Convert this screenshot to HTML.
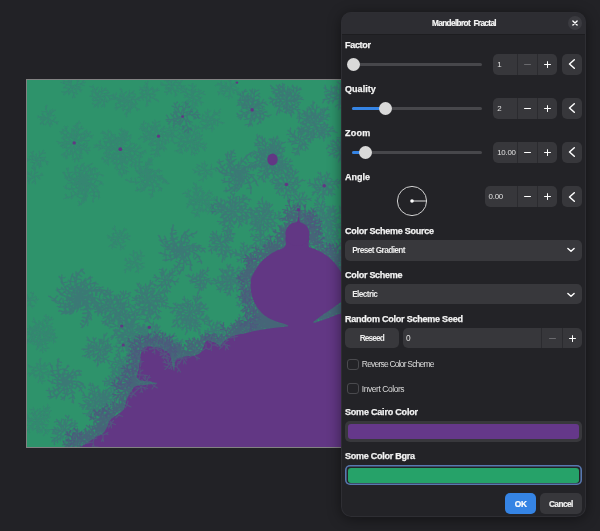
<!DOCTYPE html>
<html><head><meta charset="utf-8">
<style>
*{box-sizing:border-box;margin:0;padding:0}
html,body{width:600px;height:531px;overflow:hidden;background:#222226;font-family:"Liberation Sans",sans-serif;}
#wrap{position:absolute;left:0;top:0;width:600px;height:531px;filter:blur(0.35px);}
#frac{position:absolute;left:26px;top:79px;width:369px;height:369px;background:#828282;}
#frac svg{position:absolute;left:1px;top:1px;}
#dlg{will-change:transform;position:absolute;left:341px;top:12px;width:245.4px;height:505px;background:#232327;border-radius:10px;box-shadow:0 2px 14px rgba(0,0,0,.45);overflow:hidden;}
.t{position:absolute;white-space:nowrap;}
.lbl{position:absolute;left:4px;color:#f3f3f3;font-weight:bold;white-space:nowrap;-webkit-text-stroke:0.25px #f3f3f3;}
</style></head><body><div id="wrap">
<div id="frac">
<svg width="367" height="367" viewBox="27 80 367 367">
<defs><clipPath id="fc"><rect x="27" y="80" width="367" height="367"/></clipPath>
<filter id="sb" x="-5%" y="-5%" width="110%" height="110%"><feGaussianBlur stdDeviation="0.6"/></filter>
</defs>
<rect x="27" y="80" width="367" height="367" fill="#2e936b"/>
<g clip-path="url(#fc)" fill="none" stroke-linecap="round" stroke-linejoin="round" filter="url(#sb)">
<path d="M68 83l2 -2M69 86l-0.5 -3 -1 -2M67 85l-3.5 3M64 83l-1 -4M72 87l-2.5 -1.5 -3 -1 -2.5 -1 -3 -1M71 84l0.5 -4.5M69 82l-4 -0.5M68 79l1.5 -3.5M72 87l-1 -2.5 -1.5 -3 -1.5 -2.5 -1.5 -2.5M78 87l1 2M75 86l2.5 0.5 3 1M77 82l2 -1M77 85l0.5 -3 0 -2.5M80 84l4 1.5M82 83l2 -3.5M72 87l2.5 -1.5 2.5 -1 2.5 -0.5 3 -1 2.5 -0.5M74 88l2.5 3.5M77 89l3 -3M79 89l2 3M72 87l2.5 1 2.5 0.5 2.5 1 2.5 0.5M71 92l-2.5 -0.5M72 90l-1.5 1.5 -1.5 2M73 92l4.5 2M74 95l-1.5 3M72 87l0.5 2.5 0.5 3 1 2.5 1 2.5M70 89l-4.5 -1.5M68 90l1 4.5M66 92l-4 0M72 87l-2 1.5 -2 2 -2 2 -2 2M105 98l-0.5 2.5M103 96l2 2 2 2.5M107 93l2 0M105 96l2 -2.5 1.5 -2.5M110 98l-1 2.5M108 96l1.5 1.5 1.5 2.5M111 96l3 -2M100 97l2.5 -0.5 3 -1 2.5 0 3 0 2.5 0.5M101 102l-2.5 0.5M102 99l-1 2.5 -1 2.5M103 101l5 1M104 104l-2.5 2.5M100 97l2 2 1.5 2.5 1 2.5 0 3M97 100l-2 -2M99 100l-2.5 0.5 -3 0M98 103l0 4.5M96 105l-3.5 -1.5M100 97l-0.5 3 -1.5 2.5 -2 2.5 -2 2M96 95l2 -1.5M98 97l-1.5 -2 -1 -2M95 97l-2.5 2.5M93 97l-1 -3.5M100 97l-2.5 0.5 -2.5 0 -2.5 -1 -2.5 -0.5M99 92l2 -0.5M98 95l0.5 -2.5 1 -2.5M93 92l0 -2M96 93l-2.5 -0.5 -2.5 -1.5M95 91l3 -4M94 88l-4 -1.5M100 97l-2 -2 -1.5 -2 -1.5 -2.5 -1.5 -2.5 -0.5 -2.5M101 94l4.5 -0.5M102 92l-0.5 -4.5M104 90l4 0.5M100 97l1 -2.5 1 -2.5 2 -2 2 -2M131 105l-2 2.5M130 102l1 3.5 0 3M132 104l5.5 0M134 106l-3 3M136 108l3.5 1.5M128 101l2 1 2.5 1.5 2 2 1.5 2.5 1.5 2.5M126 106l-2.5 -1.5M128 104l-2 2 -2.5 1.5M130 109l-1.5 3M129 107l1 2.5 0.5 3M128 110l-5 -1M127 112l-0.5 5M128 101l0.5 3 0 2.5 -0.5 3 -1.5 2.5 -1.5 2.5M123 102l-0.5 -3.5M126 103l-3.5 -1 -3 -2M124 108l-2.5 1M124 105l0 2.5 -1 3.5M122 106l-3.5 -3.5M119 107l-3 2.5M117 108l-1.5 -4M128 101l-2 2 -2 1.5 -2 1.5 -2.5 1 -2.5 0.5 -2.5 0.5M123 98l1 -3M125 101l-2.5 -3 -1.5 -3M120 102l-2.5 -2M122 101l-2.5 1.5 -3 1M120 96l2 -0.5M120 99l0 -2.5 0.5 -3M115 99l-2 -2M118 98l-3 1 -3 0M115 97l1.5 -4M128 101l-3 0 -2.5 -0.5 -2.5 -1 -2.5 -1 -2.5 -1.5 -2 -1.5M127 97l2.5 -0.5M125 99l2 -2.5 2 -2M124 97l-4.5 -1.5M123 95l3.5 -3M122 92l-2 -3.5M128 101l-2.5 -2 -1.5 -2 -1 -2.5 -1 -2.5 -0.5 -2.5M131 97l1.5 2M128 98l2.5 -1 3 -0.5M129 95l0.5 -4.5M131 93l4.5 1.5M128 101l0 -3 1.5 -3 2 -2 2.5 -2M132 102l0 3.5M130 100l2 2 1.5 2.5M132 99l3.5 -3M135 99l1 4.5M137 99l3.5 -1M128 101l2 -1 2.5 -0.5 2.5 0 2.5 0 2.5 1M145 94l-5 -0.5M142 95l1 5M140 97l-3 1.5M148 94l-3 0 -2.5 1.5 -2.5 2 -2 2M146 90l2 -2.5M146 92l0.5 -2.5 -0.5 -2.5M144 90l-2.5 2.5M142 90l-2 -3M148 94l-1.5 -2 -2 -1.5 -2.5 -1 -2.5 0M151 89l3 0.5M148 91l2.5 -1.5 2 -2M145 88l-1 -2.5M148 88l-2.5 -0.5 -2.5 0M147 85l1 -4M148 94l0.5 -3 -0.5 -3 -1 -2.5 -1.5 -3M151 94l4.5 1M154 93l-1.5 -4.5M156 91l3.5 -1M148 94l3 0 2.5 -1.5 2 -1.5 2 -2.5M150 99l-2.5 2.5M150 96l0 3 0.5 3M152 98l3.5 -3M155 99l3.5 2.5M148 94l2 2.5 2.5 1.5 2.5 1 3 1M144 97l-2.5 -0.5M147 97l-3 0 -2.5 1M146 100l5 2M147 103l-1 3.5M148 94l-1.5 2.5 0 3 0.5 3 1 3M168 83l0 -3M170 85l-2 -2.5 -1.5 -1.5M167 85l-1.5 3.5M164 85l-3 -2.5M172 85l-2.5 -0.5 -2.5 0.5 -3 0 -3 0M172 80l3.5 0M171 83l1.5 -3 1 -3M167 80l-2 -2M170 80l-3 0 -2.5 0.5M169 78l1 -4M167 76l-3.5 -0.5M172 85l-1 -2.5 -1 -2.5 -1.5 -2 -1.5 -2.5 -1 -2.5M178 83l2 2M174 83l3.5 -0.5 3 -0.5M175 78l2 -2M176 81l-0.5 -3 -1 -2.5M181 79l1 1.5M178 79l2.5 0 3 0M180 77l-1.5 -4.5M172 85l2.5 -2 1.5 -2 2 -2 2 -2.5 1.5 -2.5M177 87l0 3M176 85l1.5 2.5 2 1.5M179 86l2 -4.5M182 86l2 3M172 85l3.5 0.5 3 0 3.5 0.5 3 0M171 90l-2 -0.5M173 88l-1.5 1.5 -1.5 2M174 90l4.5 1.5M176 93l-1 3.5M172 85l1 2.5 1 3 1.5 2.5 1.5 2M169 88l-2.5 -1M171 87l-2.5 1 -2 1.5M169 90l2.5 3.5M168 92l-3.5 0M172 85l-1 2.5 -1.5 2 -1.5 2.5 -1.5 2.5M198 97l1.5 2M196 96l2.5 1 2.5 1M199 92l2 -1.5M199 95l0 -3 -0.5 -2.5M201 93l4 1.5M193 97l3 -1 2.5 -1.5 3 -1.5 2.5 -1.5M196 101l-1.5 3M195 99l1 2.5 1 2.5M198 100l3.5 -2.5M200 101l1.5 4M193 97l2 2 2.5 1.5 3 1 2.5 1M190 102l-3 -1.5M193 100l-3 1.5 -3 2M195 104l0 3.5M193 102l2.5 2 2.5 2M190 107l-2 -1M192 105l-2 2 -2 2M193 108l3.5 1.5M192 110l-2 3.5M193 97l0 2.5 -0.5 3 0 2.5 0 2.5 0 2.5 0 3M188 97l-1 -1.5M190 98l-2 -1 -2.5 -0.5M188 100l0.5 5M186 102l-4 0.5M193 97l-2.5 1.5 -2.5 1.5 -2.5 2 -2 2.5M191 92l3 -1M191 96l0.5 -3.5 0 -3M186 96l-2 -1M189 94l-2.5 2 -2 1.5M186 90l1 -2M187 93l-1.5 -2.5 -1 -2.5M184 92l-3.5 1M182 91l-1 -5M193 97l-2 -1.5 -2.5 -1 -2 -1.5 -2 -1.5 -2.5 -1 -2 -1.5M195 92l3 -0.5M193 94l1.5 -2.5 1.5 -2.5M193 92l-5 -2.5M192 89l4 -3.5M192 86l-3.5 -1M193 97l0 -2.5 -0.5 -3 0 -2.5 0 -3 0 -2.5M69 140l0.5 -3.5M72 142l-2.5 -2.5 -3 -2M67 144l-3 0M69 142l-2 2 -1 2.5M64 140l-0.5 -3M66 142l-2 -2.5 -2.5 -1.5M63 144l-2.5 2M64 142l-1.5 2.5 -0.5 2.5M61 143l-4 -1.5M74 143l-2 -1 -3 -0.5 -2.5 0 -3 0.5 -2.5 0.5 -2.5 1M75 138l3 -1.5M76 135l-1.5 -2M74 140l1 -2 1 -2.5 1 -2.5M69 138l-3 -2.5M72 138l-3.5 -0.5 -3.5 0.5M72 132l2.5 -1.5M71 135l1 -3 0 -3.5M66 135l-3 -1.5M69 133l-3 1.5 -2.5 2M66 129l1.5 -2.5M67 132l-1 -3 -1.5 -2.5M63 132l-3 0M64 130l-1.5 2 -1.5 2M74 143l-0.5 -3 -1 -2.5 -1.5 -2 -2 -2 -2 -2 -2.5 -1 -2.5 -1.5M78 140l3.5 1.5M81 140l1.5 -3M76 140l2.5 0.5 2.5 -0.5 2.5 -1M75 137l-1 -4.5M73 135l-2.5 1.5M77 138l-2.5 -1.5 -2 -1.5 -2 -1M81 134l3.5 1M77 136l3.5 -1.5 3 -2M75 131l1 -3M78 133l-2.5 -2 -3 -2M80 129l3.5 -0.5M78 131l2.5 -2.5 1.5 -2.5M76 127l-1 -2M78 128l-2.5 -1 -2.5 -1M78 123l2.5 0M77 126l1.5 -2.5 0.5 -2.5M74 143l1.5 -2.5 1 -2.5 1 -2 0.5 -2.5 0 -2.5 0 -2.5 -0.5 -2.5 -1 -2.5M79 144l0.5 4.5M82 146l2.5 -2.5M77 142l2.5 2 2.5 1.5 2.5 1.5M81 139l3.5 -2M81 136l-2.5 -2M80 141l0.5 -2.5 0.5 -2.5 0 -2.5M86 141l1.5 2.5M83 140l3 1 3.5 -0.5M84 135l3 -2M85 138l-0.5 -3 -0.5 -3M90 136l2 2M87 136l3 0 3 -0.5M87 132l-0.5 -2M89 134l-2 -1.5 -2.5 -1.5M74 143l3.5 -1 2.5 -0.5 2.5 -1.5 2.5 -1.5 2 -2 1.5 -2.5 2 -2M78 147l-1.5 3.5M79 149l3 0M76 144l1.5 2.5 1 2.5 1.5 2.5M82 145l3 1.5M78 146l4 -1 4 -1M81 151l-1 3M80 148l1 2.5 1 3M85 147l2.5 1M83 149l2 -2 2.5 -2M85 150l3 3.5M88 150l2 -3M74 143l2.5 1.5 2 1.5 2 1.5 2 1.5 2.5 1 2.5 0.5 2.5 0M73 148l-4.5 0.5M71 150l2 2.5M74 146l-1 2 -1.5 2 -1.5 3M78 149l2 3M75 148l3 1.5 4 0.5M73 154l-2.5 0M75 151l-1.5 3 -1 3.5M79 155l1.5 3M76 154l3 1 3 1M75 159l-2.5 0.5M77 157l-1.5 2 -1 3M78 159l4.5 -1M74 143l0.5 2.5 0 3 0.5 2.5 1 3 1 2.5 1 2.5 1 2.5M70 144l-3 -2.5M67 144l-1 2.5M73 144l-3 0 -3 0.5 -2.5 0M71 150l-1 2.5M71 146l0.5 3.5 1.5 3M66 148l-2 -2.5M69 148l-3.5 -0.5 -3 0.5M68 153l-1 2.5M67 150l1 3 1.5 2M66 152l-4.5 3M66 156l0 3M64 154l2 2.5 1.5 1.5M74 143l-1.5 1.5 -2 1.5 -1.5 2 -2 2 -1.5 2.5 -1 2 -1 2.5M123 144l4 0.5M125 142l-0.5 -2.5M121 146l1.5 -1.5 2 -2 2.5 -2M120 141l0.5 -3M119 139l-3 -1M121 144l-1 -2.5 -1.5 -2.5 -1 -2M125 139l2 1.5M122 141l2.5 -2 3 -2M121 136l1 -3M122 138l-1.5 -2.5 -1.5 -2.5M125 134l2.5 0M123 135l2 -1.5 2 -2M122 131l-0.5 -2.5M124 133l-2.5 -2 -2 -1.5M120 149l0.5 -2.5 1 -3 0 -2.5 1 -3 0.5 -2.5 0.5 -2.5 0.5 -3M124 147l2.5 3M127 148l2.5 -1.5M122 147l2.5 0.5 2.5 0.5 2.5 1M122 141l1.5 -3.5M123 144l-1.5 -3 -1.5 -3.5M127 140l3 1M124 142l3.5 -2 3 -1.5M124 136l2 -2M125 139l-0.5 -3 -1.5 -2.5M129 136l2 1.5M126 137l3 -1 2.5 -1M127 134l-2.5 -4M120 149l1.5 -2 1.5 -2.5 1.5 -2.5 1 -3 1 -2.5 0.5 -2.5 1 -3M123 152l-2.5 3M124 154l3.5 3M125 157l-1.5 3M123 150l0.5 2 0.5 2.5 0.5 2.5 1 2M128 148l4 0M130 146l0.5 -3.5M125 150l2.5 -2 2.5 -2.5 2.5 -2M130 153l-1 4M131 155l3 0.5M128 150l1.5 3 1.5 2.5 1.5 2.5M133 148l3 1M135 146l-1 -2.5M131 150l1.5 -1.5 2 -2 2 -2M135 153l-2 4M136 155l3.5 0.5M133 151l2 2 1.5 2 1.5 2.5M138 148l3 0M136 151l2 -2.5 2 -3M140 155l0 2.5M139 152l1.5 2.5 1.5 3M144 151l2 1.5M141 153l2.5 -1.5 2.5 -1.5M120 149l2.5 0.5 3 0.5 2.5 0 3 0.5 2.5 0 2.5 1 2.5 0.5 3 1 2.5 1M121 154l-4.5 0M120 157l2 2.5M122 151l-1.5 3 -0.5 2.5 -1 3M126 153l3 1.5M129 152l1.5 -2M123 153l3 -0.5 3 -0.5 2.5 -0.5M124 159l-3 1M125 155l-1 3.5 -1 3.5M130 157l2.5 2M127 157l3 -0.5 3.5 0M128 162l-3 1M129 159l-1 2.5 -1 3M134 159l2 2M131 160l2.5 -0.5 3 -1.5M132 164l-2 1.5M133 162l-1 2.5 -0.5 2.5M120 149l1.5 2 2 2 1.5 2 2 2 2 1.5 1.5 2 2.5 1.5 2 1.5M118 154l-4.5 -1.5M116 156l0.5 4M115 158l-4 0.5M120 152l-2 1.5 -1.5 2.5 -2 2 -1.5 2.5M122 156l-0.5 2.5 0 2.5M123 158l4 -0.5M125 160l-0.5 2.5M120 154l1.5 2 2 1.5 1.5 2 1.5 2M118 159l-4.5 0.5M116 162l0.5 3M120 157l-2 2 -2 3 -2.5 2M122 161l0.5 4.5M125 163l2.5 -1.5M120 159l2.5 2 2.5 2 2 1.5M119 164l-4.5 -1.5M117 166l0.5 3.5M121 162l-2.5 2 -2 2 -1.5 2.5M124 167l0.5 3M121 164l3 2.5 3.5 1.5M121 169l-4 0.5M120 172l1.5 2.5M122 167l-1.5 2 -1 2.5 -1 2.5M126 171l0.5 2.5M123 169l3 1.5 3 1.5M123 174l-3.5 1M124 172l-1.5 2.5 -1 2.5M120 149l0 2.5 -0.5 2.5 0.5 3 0 2.5 0.5 2.5 0.5 2.5 1 2.5 0.5 2.5 1.5 2 1 2.5M115 150l-1.5 -4M112 150l-2 1.5M118 151l-3 -1 -2.5 -0.5 -3 -0.5M117 155l-3 2.5M117 158l2.5 1M116 153l0.5 2 0.5 3 -0.5 2.5M112 155l-3.5 -2.5M109 155l-2 2.5M114 154l-2 0.5 -3 0 -2.5 0.5M113 159l-2 3M113 156l0 3.5 0 3M107 157l0 -3M110 158l-2.5 -1 -3 -1M108 162l-2 1.5M108 159l0 3 0.5 3M104 160l-1.5 -3M106 161l-2 -1.5 -2.5 -1M120 149l-2 1.5 -2 2 -1.5 2 -2 1.5 -2 1.5 -2 1.5 -2.5 1.5 -2 1.5M116 146l1.5 -5M114 143l-3.5 -1M117 149l-1 -3.5 -1.5 -3 -1 -3M112 150l-4.5 -1.5M109 152l0.5 3.5M115 148l-3 2 -3 1.5 -3 2M111 145l1.5 -3M110 143l-3 -1.5M112 148l-1 -2.5 -1 -3 -0.5 -2.5M108 150l-4 -1.5M106 152l0 2.5M109 148l-1.5 1.5 -1.5 2 -2 2M105 144l3 -2.5M107 147l-1.5 -3 -1.5 -3M101 148l-2.5 -0.5M104 147l-2.5 1.5 -3 1.5M100 143l0.5 -2.5M102 146l-2 -2.5 -1 -2.5M97 146l-3 -1M99 145l-2.5 1.5 -2.5 1M120 149l-2.5 -0.5 -3 0 -2.5 -0.5 -2.5 -0.5 -2.5 -0.5 -3 -0.5 -2.5 -0.5 -2.5 -0.5 -2.5 -1M118 145l4 -2.5M118 142l-2.5 -2M119 140l2.5 -1.5M118 147l0 -2 0 -2.5 0.5 -2.5 0.5 -2.5M113 146l-3 -2.5M110 146l-0.5 3.5M116 145l-2.5 1 -3 0.5 -3 0.5M115 141l3 -3M115 138l-3 -2M115 143l0 -2.5 0 -2.5 0 -3M110 142l-2 -3.5M107 142l-1 3M113 142l-3 -0.5 -2.5 0.5 -3 0M111 136l3 -1.5M111 140l0 -3.5 0.5 -3.5M106 138l-2 -2M109 138l-3 0.5 -3 0.5M108 133l2.5 -1.5M108 136l0 -3 0.5 -3M104 134l-1.5 -3M106 134l-2.5 -0.5 -2.5 -0.5M120 149l-2 -1.5 -1.5 -2 -2 -2 -1.5 -2 -2 -1.5 -1.5 -2 -2 -2 -1.5 -2 -1.5 -2M159 142l-3.5 0M160 139l-1.5 3 -2 3M164 142l1.5 2.5M161 141l3 1 3 1M161 146l-2.5 0M162 143l-1 2.5 -2 2.5M165 148l-1 1.5M163 146l2 1.5 1.5 2M163 148l-4 2M159 136l1 2.5 1.5 2.5 1 2.5 0.5 2.5 0.5 2.5 0.5 2.5M156 141l-3.5 -1.5M153 142l-1 3M158 139l-2 1.5 -3 1.5 -3 0.5M159 144l-2 3M160 147l3 1.5M158 142l1.5 2 0.5 2.5 0 3M154 145l-2 -2M158 144l-3.5 1.5 -4 0.5M158 150l-2 2M157 147l1 3 0.5 3.5M154 150l-2.5 -1.5M157 149l-3 1.5 -3 0.5M158 154l-1 2.5M156 152l2 1.5 2 2.5M155 154l-4.5 0.5M159 136l-0.5 3 -0.5 2.5 0 2.5 -1 3 -0.5 2.5 -0.5 2.5 -0.5 2.5 -1 2.5M154 137l-0.5 -3.5M152 135l-3 0.5M156 138l-2 -1 -2.5 -1.5 -2 -1.5M152 140l-3.5 -0.5M151 143l-0.5 3M154 138l-2 2.5 -1 2 -2 2M149 136l1 -3.5M151 138l-2 -2.5 -1.5 -3M146 140l-2.5 -0.5M148 138l-2 2.5 -2.5 1.5M144 136l1.5 -2.5M146 138l-1.5 -2.5 -1.5 -2.5M143 137l-4.5 2M159 136l-2.5 1.5 -3 1 -2.5 0 -2.5 -0.5 -3 0 -2.5 -1 -2.5 -0.5M155 133l3 -3.5M155 129l-3 -2.5M156 136l-1 -3.5 -0.5 -3 0 -3.5M151 135l-3 -2.5M148 135l-2 3M154 134l-3 1 -3 0.5 -3 0M151 131l3.5 -2M151 128l-1.5 -2.5M151 133l0 -2.5 0.5 -2.5 0 -2.5M146 132l-2.5 -3M149 132l-3.5 -0.5 -3.5 -1M147 127l3.5 -0.5M147 130l0.5 -3.5 1 -3M142 129l-1.5 -2.5M145 128l-3 0.5 -2.5 0M144 124l2.5 -1M143 126l0.5 -2.5 0.5 -2.5M159 136l-3 -0.5 -2.5 -1 -2 -1.5 -2.5 -1.5 -2 -1.5 -2 -2 -2 -2 -1.5 -2M160 131l3 1.5M158 134l2 -3 2.5 -2.5M154 130l0 -4M157 131l-3 -1.5 -3 -1.5M158 126l2.5 0M156 128l2 -2 2 -2M156 126l-3.5 -4M155 123l5 -1.5M159 136l-1 -2 -1 -3 -0.5 -2.5 -0.5 -2.5 -0.5 -3 -0.5 -3M163 135l0.5 3.5M166 136l2.5 -1M161 134l2.5 1 2.5 1 2.5 1.5M163 129l3 -0.5M163 133l0 -4 1.5 -3M168 133l-0.5 3.5M165 132l2.5 1.5 2.5 2M169 128l2 0M168 131l0.5 -3 1.5 -2.5M172 132l-0.5 3M170 130l2 2.5 2 2.5M173 130l3.5 -3M159 136l1.5 -1.5 2 -1.5 2.5 -1.5 2.5 -1 3 0 2.5 -0.5 2.5 0.5M163 138l-0.5 3.5M165 140l3.5 1M161 136l2.5 2 1.5 2.5 1 2.5M167 134l2.5 1.5M164 136l2.5 -2 3.5 -1.5M168 139l-2.5 2M167 136l1 3.5 1 3M172 134l2.5 1.5M169 136l2.5 -2 2.5 -2M173 139l-2 2M172 136l0.5 3 0.5 3M175 137l3.5 -2M159 136l2.5 0 2.5 0 2.5 0 3 0.5 2.5 0 2.5 0 2.5 1M50 116l4.5 -0.5M51 114l-1 -4M52 112l3.5 -2M48 118l1.5 -2 1.5 -2 1 -2 0.5 -2.5M51 122l-1 1.5M50 119l1 3 1 2M53 121l2.5 -3.5M55 122l2.5 2M48 118l2 1.5 2.5 1.5 2.5 1 3 0M48 121l-2.5 3.5M49 124l3 0.5M48 118l0 3 1 3 1.5 2.5M45 119l-4.5 0M42 121l2 4M48 118l-3 1.5 -2.5 2 -2 2.5M45 117l-3 -3.5M43 117l-2.5 2.5M40 117l-2.5 -1M48 118l-2.5 -0.5 -2.5 -0.5 -2.5 0 -2.5 0.5M49 113l2.5 -0.5M48 115l1 -2 1 -2.5M47 112l-5 -0.5M46 109l1 -4M48 118l-0.5 -3 -0.5 -3 -1 -2.5 -0.5 -3M38 163l-2 3M39 165l2.5 1.5M37 160l1 2.5 1 3 0.5 2.5M35 163l-4 -1M34 166l0.5 3M37 160l-2 3 -1.5 2.5 -1.5 3M34 160l-3 -4M30 159l-3 2M37 160l-3.5 0 -3 -0.5 -3.5 -0.5M36 158l0.5 -4M34 156l-4.5 0.5M32 154l1.5 -3M37 160l-1.5 -2 -1.5 -2 -1.5 -2 -1.5 -2M41 158l1 1.5M39 158l2 -0.5 2.5 0M40 155l-1 -4M42 153l3.5 0M37 160l1.5 -2.5 1.5 -2.5 2 -2 1.5 -2.5M40 163l-1.5 2M40 160l0.5 3 0.5 2.5M43 161l2.5 -4M46 161l1.5 3.5M37 160l3 0.5 2.5 0 3 0.5 3 1M37 176l3 3M40 176l2 -3M34 177l3 -1 3 -0.5 3 -0.5M35 180l-3 3M34 177l1 3.5 0.5 3.5M31 179l-3.5 -1.5M29 180l0 4M34 177l-2.5 1.5 -2.5 2 -3 1M31 175l0.5 -3.5M29 174l-3 0M34 177l-2.5 -1.5 -2.5 -2 -2.5 -2M34 174l4 -2M35 171l-2.5 -3.5M34 177l0.5 -3 0.5 -3 0.5 -3.5M83 179l3.5 0.5 2.5 1M85 177l1 -4.5M86 174l2.5 3.5M87 172l2.5 -3M90 170l2 3.5M92 169l3 -1.5M95 168l0 4M83 182l0.5 -2.5 1 -3 1.5 -2 1.5 -2.5 2 -1.5 2.5 -1 3 -1 2.5 0M84 180l3 1 1.5 2M86 175l2 -0.5M86 178l0 -3 1 -2M88 176l2 1.5 1.5 2.5M90 175l1 -2.5 1.5 -2M93 174l0.5 3.5M95 174l4.5 -1.5M98 174l-1 3M101 175l2.5 0.5M83 182l1.5 -2 1.5 -2.5 2 -1.5 2.5 -1 2.5 -1 2.5 0 2.5 0 2.5 0.5 2.5 1.5M85 181l2.5 1.5 1 2.5M88 180l4.5 -2M91 179l0 4.5M93 179l4 -0.5M96 180l-1.5 3M99 181l3 1M101 183l-2 2M83 182l2.5 -1 2.5 -1 2.5 -0.5 3 0 2.5 0.5 2.5 1 2.5 1.5 2 2M86 182l1 3 -0.5 3M91 183l0.5 2M88 183l3 0 2.5 1M90 187l-2.5 -1M91 184l-1 2.5 -1.5 2.5M93 185l2.5 0.5 2.5 1.5M95 187l-1 2.5 -2 2M97 189l2.5 3.5M98 191l-4.5 1.5M99 194l0.5 3.5M99 196l-3.5 0.5M83 182l2.5 0.5 2.5 0.5 2.5 1 2.5 1.5 2 1.5 1.5 2 1 2.5 1 2.5 0.5 2.5 -0.5 2.5M86 183l-0.5 3 -1.5 2.5M88 184l3 0 3 0.5M90 186l-1.5 2.5 -2 1.5M92 188l3 4M93 191l-4 2.5M94 193l1.5 4M94 196l-3 -0.5M93 199l0.5 3M83 182l2.5 1 2.5 1.5 2 1.5 2 2.5 1.5 2 0.5 3 0 2.5 -0.5 3 -1 2.5M84 184l-1.5 2.5 -2.5 1.5M85 187l2.5 1.5 1 2.5M86 189l-4.5 1.5M86 192l1 4M86 195l-4 -0.5M86 197l0 4M85 200l-3 -2M83 182l1.5 2.5 1 2.5 0.5 2.5 0 2.5 0 3 -0.5 2.5 -1 2.5 -1 2.5M84 184l-2 3 -2.5 1.5M85 187l2 2 0.5 3M83 191l-1.5 -0.5M85 189l-2 2 -2 1M85 192l1.5 2 1 2.5M84 194l-4 -0.5M84 197l-0.5 4M83 199l-4 -1.5M82 202l-1 3M80 204l-1.5 -2.5M83 182l1 2.5 0.5 2.5 0.5 2.5 0 2.5 -0.5 2.5 -0.5 2.5 -1 2.5 -1 2 -1.5 2.5 -2 1.5M79 185l0 -2M83 185l-3.5 0 -3 -1M83 190l-2 2M82 187l1 3.5 -0.5 3M78 189l0.5 -2.5M81 190l-3 -1.5 -1.5 -2M78 195l-1.5 -0.5M79 192l-0.5 2.5 -1.5 2.5M77 194l-2.5 -1.5 -1.5 -2M74 195l-2.5 3.5M72 196l-1 -4M69 197l-3.5 1M67 198l-1.5 -3.5M83 182l-0.5 2.5 -0.5 3 -1.5 2.5 -1.5 2 -2.5 1.5 -2 1.5 -2.5 1.5 -2.5 1 -3 0.5 -2.5 0.5M79 184l-0.5 -2M82 184l-3 0 -2.5 -2M80 186l-1 3 -1.5 2.5M77 188l-1.5 -4.5M75 189l-5 0.5M72 189l-0.5 -3.5M69 189l-3.5 -0.5M66 188l0.5 -3M83 182l-1.5 2.5 -2 2 -2 1.5 -3 0.5 -2.5 0.5 -3 -0.5 -2.5 -0.5 -2.5 -1.5M80 183l-1.5 -2.5 -1 -2.5M78 183l-2.5 2 -2.5 0M75 183l0.5 -4.5M73 183l-3 0.5 -2.5 -0.5M70 181l3.5 -2.5M68 180l-3 -2.5M67 177l2.5 -2M65 175l-2 -2.5M83 182l-2.5 1 -2.5 0.5 -3 0 -2.5 -1 -2.5 -1 -2 -2 -1.5 -2 -1.5 -2.5 -0.5 -2.5M80 182l-0.5 -2.5 0.5 -3M78 182l-2 1.5 -2.5 1M75 181l2 -4.5M73 180l-4.5 -2.5M71 178l2.5 -4M70 176l-2.5 -3.5M69 173l3.5 -1M68 171l-1.5 -3M83 182l-2.5 0 -2.5 0 -2.5 -1 -2.5 -1.5 -2 -1.5 -1.5 -2 -0.5 -2.5 -1 -2.5 0.5 -3M81 181l2 -4.5M79 179l-3 0 -2 -1M77 177l4 -2M76 175l-2 -3M75 172l4 0.5M75 170l0 -3.5M76 167l3 1.5M83 182l-2.5 -1 -2 -2 -1.5 -2 -1 -2.5 -0.5 -2.5 0 -2.5 0.5 -2.5 1.5 -2M81 180l2 -2.5 2 -1M80 178l-1.5 -4.5M80 175l4.5 0M80 172l-1 -3.5M80 170l4 1M81 167l1 -3M82 165l3 2M83 182l-1.5 -2 -1 -2.5 -0.5 -2.5 0 -2.5 0 -3 1 -2.5 1.5 -2 1.5 -2M85 179l1.5 1.5M82 180l3 -1.5 3 0M82 177l-0.5 -4.5M82 175l5 -0.5M83 172l1.5 -4.5M84 170l3 2.5M86 168l2 -3M88 166l2.5 3M90 165l2.5 -1.5M83 182l-0.5 -2.5 0 -2.5 0 -2.5 0.5 -2.5 1.5 -2 1.5 -2 1.5 -2 2.5 -1 2 -1M149 175l4.5 1M151 172l1.5 -3M154 171l1.5 3.5M157 171l2 -2M159 170l0.5 3M148 177l1.5 -2.5 2 -2 2 -1.5 3 -0.5 3 0 2.5 0.5M150 176l2.5 2 1 2.5M153 175l2 -1.5 2 -1.5M156 175l1 2 1 2.5M158 176l4.5 -0.5M161 176l-2.5 4M163 178l3 2.5M165 180l-2 3M166 182l3 1.5M148 177l2.5 -1 2.5 -1 2.5 0 2.5 0.5 2.5 1 2 1.5 2.5 1.5 1.5 2 1 2.5M150 176l2.5 2 1 2.5M153 176l4 -1M155 177l-1 3M158 177l4 0M160 178l0 3M162 179l4 1.5M164 181l-1.5 1.5M148 177l2.5 -0.5 2.5 0 2.5 0 2.5 0.5 2.5 1 2 1.5 2 1.5 1 2M150 178l-2 4.5M152 180l4.5 1M154 181l-2 3.5M156 183l3.5 1.5M158 185l-2.5 2M159 187l3 1.5M160 189l-1.5 1.5M148 177l2.5 1 2 1.5 1.5 1.5 2 2 1.5 2 1.5 2 1.5 2 1 2M150 179l-2 2.5 -2 1.5M151 182l2.5 4M150 186l-1.5 -2M152 184l-2.5 1.5 -2.5 0M153 187l1.5 4.5M153 190l-4.5 0M152 193l1 3.5M152 195l-3 -1M148 177l1.5 2.5 1.5 2.5 1 2.5 0.5 2.5 0.5 3 -0.5 2.5 -1 3 -1 2.5M148 180l-4.5 0.5M148 183l-0.5 3M147 185l-4 0M145 188l-1 2.5M143 190l-2 -1.5M148 177l0 3 -0.5 2.5 -1 3 -1.5 2.5 -2 2 -2.5 1.5M148 179l-3 1 -2.5 0M147 182l-0.5 5M146 184l-4 -2M144 186l-1.5 4.5M142 188l-2 -3M140 189l-3 2M138 190l-1 -3M148 177l-0.5 2.5 -0.5 2.5 -1 2.5 -1.5 2 -2 1.5 -2 1 -2.5 1 -2.5 0.5M146 179l-2.5 -1.5 -2 -2M144 180l-1.5 3 -2.5 1.5M142 181l-2.5 -4M139 182l-3.5 2M136 182l-1 -4M134 182l-4.5 0M131 182l0.5 -4M129 181l-3.5 -1M148 177l-2 2 -2 1.5 -2.5 1 -2.5 0.5 -2.5 0.5 -2.5 -0.5 -3 -0.5 -2.5 -0.5 -2 -1.5M145 177l-0.5 -3 0 -2.5M143 176l-3 1 -2.5 0.5M141 175l-1 -2.5 1 -2.5M139 173l-3.5 -2.5M137 171l4 -2M136 169l-2 -3.5M136 166l3 -0.5M136 164l0 -3M148 177l-2.5 -0.5 -2.5 -0.5 -2.5 -1 -2 -1.5 -1.5 -2 -1 -2.5 -0.5 -2.5 0 -2.5 1 -2.5M147 173l1.5 0M146 176l0.5 -3.5 1.5 -2.5M141 173l0 -2M144 174l-2.5 -0.5 -2.5 -2M142 172l4 -3M141 170l-3 -4M140 167l4.5 -0.5M140 165l-2 -3M139 162l3.5 0M139 160l1 -3.5M148 177l-2 -1.5 -2 -1.5 -1.5 -2 -1 -2.5 -1 -2.5 -1 -2 -0.5 -2.5 0.5 -2.5 0.5 -2.5M147 175l1 -2.5 2 -1.5M146 172l-2.5 -4M146 170l4.5 0.5M146 167l-0.5 -4.5M147 164l3 1M148 162l1 -4M149 160l3 2.5M148 177l-1.5 -2 -0.5 -3 -0.5 -2.5 0.5 -2.5 0.5 -2.5 1 -2.5 2 -2 2 -2M147 174l2.5 -1 2.5 -1.5M147 172l-0.5 -4.5M147 169l4.5 0.5M148 166l0 -3.5M149 164l3.5 1M150 161l1 -2M148 177l-0.5 -2.5 -0.5 -3 0.5 -2.5 0.5 -3 1 -2.5 1.5 -2 2 -2M194 139l2.5 2M196 138l1.5 -3M191 140l2.5 -1 3 -1 2.5 -1M190 135l0 -3M192 137l-2.5 -2 -3 -1.5M196 133l2.5 0.5M193 135l2.5 -2 2.5 -2M192 130l-1 -3M194 132l-2.5 -1.5 -2.5 -1.5M197 128l2.5 0M195 130l2 -2 1.5 -2M195 127l-3.5 -2.5M190 142l1 -2.5 1 -2.5 1 -2 1 -2.5 0.5 -2.5 1 -2.5 0 -2.5M196 143l0.5 3M193 141l2.5 1.5 3.5 1.5M196 137l1.5 -1M195 140l0.5 -2.5 0 -3M198 139l4.5 0M200 137l-1 -4.5M190 142l2.5 -1 3 -1 2.5 -1.5 2 -1.5 2.5 -2M193 146l0 3M195 148l2.5 0.5M192 143l1.5 2.5 1.5 2.5 1.5 2M198 142l3 1.5M195 144l2.5 -1.5 3 -2M198 148l-1.5 2.5M197 145l1 3 1 3.5M202 144l3 0.5M199 146l3 -1.5 2 -2M202 147l3 3.5M204 147l2.5 -3.5M190 142l2.5 1 2 1 2.5 1 2.5 1 2 1 2.5 0.5 2.5 0M189 148l-3.5 0M190 145l-1.5 2.5 -1 3M194 149l1.5 2M191 148l2.5 0.5 3 0.5M192 150l-0.5 5M194 153l3.5 0.5M190 142l0.5 3 0.5 2.5 1 3 1.5 2.5 1.5 2M185 142l-2 -2M188 143l-3.5 -1 -3 -0.5M186 148l-1.5 3M185 145l1 3 0.5 3.5M180 146l-1.5 -2M183 147l-2.5 -1 -3 0M182 151l-2.5 2M181 148l0.5 2.5 1 3M179 150l-4 1M190 142l-2.5 1.5 -2 1.5 -2.5 1.5 -2 1.5 -2 2 -1.5 2M186 138l2.5 -3M187 141l-0.5 -3 -1.5 -3.5M184 144l-3 1.5M185 141l-1.5 3 -0.5 3.5M180 140l0.5 -3.5M182 142l-1.5 -2.5 -2.5 -1.5M180 142l-1.5 5M177 143l-3.5 -0.5M190 142l-2.5 -0.5 -2.5 0 -3 0 -2.5 0.5 -2.5 1 -2.5 0.5M189 137l3 -2M189 134l-2.5 -2M188 140l0.5 -3 0.5 -3 -0.5 -2.5M184 138l-2.5 -2M182 138l-1.5 3M187 138l-3 0 -2.5 0.5 -2.5 0.5M185 132l1.5 -3M185 135l-0.5 -3 -0.5 -3.5M181 134l-3 -2M184 133l-3.5 1 -2.5 0.5M183 129l2 -1.5M182 131l1 -2.5 0 -2.5M180 129l-4.5 2M190 142l-1.5 -2 -1.5 -2.5 -2 -2 -1.5 -2 -1.5 -2.5 -2 -1.5 -2 -2M119 233l3 0.5M118 235l1.5 -1.5 1.5 -2.5M116 233l-3.5 0.5M115 230l-0.5 -4M118 238l-0.5 -3 -1 -2.5 -1.5 -2.5 -2.5 -1.5M123 236l1.5 2.5M120 236l3 0.5 2.5 -0.5M122 234l-2.5 -3.5M123 231l3.5 -1.5M118 238l2.5 -2 1.5 -2 1.5 -2.5 1 -3M123 240l0.5 2.5M121 238l1.5 2.5 2.5 1M124 236l2.5 -1M123 239l1.5 -2.5 0.5 -2.5M126 238l4 2M128 237l-0.5 -3.5M118 238l2.5 0.5 2.5 0 3 -0.5 2 -1 2.5 -1M116 242l-2.5 -0.5M118 241l-2 1.5 -1.5 2M119 243l5 -0.5M121 245l-0.5 5M122 247l3.5 -1.5M118 238l0.5 2.5 0.5 2.5 1.5 2 1.5 2 2 2M113 239l-1.5 -1.5M116 240l-2.5 -0.5 -3 0.5M114 242l3.5 3M113 244l-4 2.5M112 246l4 1.5M118 238l-2 1.5 -1.5 2 -1.5 2 -0.5 2.5 -0.5 2.5M115 237l-2.5 -3M113 237l-1.5 4M110 237l-2.5 -1.5M118 238l-2.5 -1 -2.5 0 -2.5 0.5 -2.5 0.5M139 259l2 2M136 260l3 -0.5 2.5 -1M138 258l-1 -5M139 256l5.5 0M141 254l-1 -4M135 262l1.5 -2 1.5 -2 1.5 -2 1.5 -2 1 -2M137 263l1.5 5M140 264l4 -1M142 266l0 3M135 262l2.5 1 2.5 1.5 2 1.5 2.5 1M136 265l-3.5 3M137 267l3.5 2M138 270l-2.5 2M135 262l1 2.5 1 2.5 1 2.5 0.5 3M130 263l-0.5 -2M133 264l-3 -0.5 -2.5 -0.5M131 268l-2 2M131 266l-0.5 2.5 0 2.5M129 267l-4 -1.5M126 269l-1 4M135 262l-2 2 -2 1.5 -2 2 -2.5 1.5 -2.5 1M132 262l-3 -4M130 261l-3.5 3M127 261l-1.5 -3M135 262l-2.5 -0.5 -2.5 0 -3 -0.5 -2.5 -1M136 257l2.5 1M134 259l2.5 -1.5 2 -2M134 256l-4 -1.5M134 253l3 -1M135 262l-0.5 -3 -1 -2.5 0 -3 0 -3M197 205l-2 -3.5M195 205l-2 3M200 204l-3 0.5 -2.5 0.5 -2.5 0M201 209l-1 3M199 207l2 2 2 2.5M196 210l-1.5 -2M198 209l-2.5 1 -3 0.5M198 214l-1.5 2M197 212l1.5 2.5 1 2.5M196 214l-4.5 -1.5M200 201l-0.5 3 -0.5 2.5 -0.5 3 -1 2.5 -1.5 2.5 -1.5 2.5M195 201l-0.5 -3M198 202l-3.5 -0.5 -2.5 -2M195 203l-1.5 5M192 204l-3 -3.5M190 204l-3 3.5M200 201l-2.5 1.5 -2.5 1 -2.5 0.5 -3 0 -2.5 0M196 196l2.5 -2M198 200l-1.5 -3.5 -1 -3.5M192 201l-2.5 -2M195 199l-2.5 2 -3.5 1.5M194 195l3 -1.5M193 198l1 -3.5 1.5 -2.5M188 197l-1.5 -1.5M191 196l-2.5 1 -3 -0.5M189 192l1.5 -1.5M189 195l-0.5 -3 -0.5 -2.5M187 193l-4.5 0.5M200 201l-2.5 -1 -2 -1 -2.5 -1.5 -2 -1 -2 -1.5 -2 -1.5 -2 -1.5M201 196l3 1M202 194l-0.5 -3M199 199l1.5 -2.5 2 -2 2 -2M196 194l-0.5 -3M199 196l-3.5 -2 -2.5 -2M200 191l3 0M198 194l1.5 -3 2 -2.5M195 190l1 -3M197 191l-2 -1.5 -2 -2M197 189l4 -2.5M196 186l-2.5 -3M200 201l-0.5 -2.5 -1 -2.5 -0.5 -2.5 -1 -2.5 0 -2.5 -0.5 -2.5 -0.5 -2.5M205 199l1 3M202 199l2.5 0.5 3.5 0.5M203 194l1 -1.5M203 197l-0.5 -2.5 0 -3M208 196l1 2M205 195l3 0.5 2.5 1M207 194l2.5 -3.5M209 193l3.5 1.5M200 201l1.5 -2 1.5 -2 2 -1.5 2 -1.5 2.5 -1 2.5 -1M205 202l0.5 3M203 200l2.5 2 2.5 2.5M207 198l3 -0.5M206 200l1 -2.5 2 -2M209 202l-2 1.5M208 200l1 2.5 1 2.5M211 200l4 -3M200 201l3 -1 2.5 0 3 0 3 0 2.5 0.5M202 205l-3.5 1M202 208l2 2.5M202 202l0 3 0 2.5 -0.5 2.5M208 204l1.5 3M204 204l3.5 0 3.5 0.5M206 208l-2 2.5M206 205l0.5 3.5 -0.5 3M211 206l2 2.5M208 207l3 -0.5 2.5 -0.5M209 211l-3 0.5M210 209l-1 2.5 -1.5 2.5M211 211l4.5 1M200 201l2 1.5 2.5 1 2 1.5 1.5 2 2 2 1.5 2 1 2M233 86l3.5 1.5M235 84l0.5 -3.5M230 88l2.5 -2 2.5 -2 3 -2M232 89l2 4.5M235 90l3.5 -1.5M237 92l0.5 2.5M230 88l2.5 1 2.5 1.5 2.5 1 2 1.5M230 91l-5 0.5M229 93l3 4.5M229 96l-3.5 1M230 88l0 3 -0.5 2.5 -0.5 2.5 -0.5 3M225 88l-0.5 -2.5M228 89l-3 -0.5 -2.5 -2M225 93l-3.5 1M225 91l-0.5 2 -1 2.5M223 91l-3.5 -2M220 92l-1.5 3M230 88l-2 1.5 -2.5 1 -2.5 1 -2.5 0.5 -3 0M226 85l0.5 -2.5M227 87l-1 -2.5 -1.5 -2.5M223 88l-3 -1M225 86l-2.5 2 -2 2M222 86l-1 -4.5M220 84l-4.5 1.5M230 88l-2.5 -1 -2.5 -0.5 -3 -1 -2.5 -1 -2 -1.5M233 84l2.5 1M230 85l3 -1 2.5 -1M229 80l0.5 -3M231 82l-2 -1.5 -1.5 -2.5M233 79l3.5 0.5M231 80l2.5 -1.5 2 -1M232 77l-2 -4M230 88l0.5 -3 0 -2.5 0.5 -3 0.5 -2.5 0.5 -2.5M206 122l-1 -2.5M209 122l-3 0 -2.5 -1M207 127l-2.5 1M207 124l0 3 -1 2.5M205 126l-4 -2M203 128l-1 3.5M210 120l-1.5 2.5 -1.5 2 -2 1.5 -2 1.5 -2.5 1M206 118l2.5 -2M207 120l-1 -2.5 -1 -2.5M204 120l-4 2.5M202 119l1 -4.5M199 118l-3.5 -0.5M210 120l-3 0.5 -2.5 -0.5 -2.5 -1 -2.5 -1 -2.5 -2M209 118l4 -2.5M208 115l-3 -3M208 112l3 -1M210 120l-1 -2.5 -1 -2.5 -0.5 -3 0.5 -2.5M214 119l1.5 2.5M212 118l2.5 1 2.5 1.5M214 113l2 -0.5M213 116l1 -3 0.5 -2.5M216 114l3.5 2M218 113l2.5 -4M210 120l1.5 -2.5 2 -1.5 2 -2 2.5 -1 2.5 -0.5M214 122l-1 2.5M213 120l1.5 2 1 2.5M215 121l4.5 -2.5M218 121l-0.5 5M220 122l4 1M210 120l2.5 0 2.5 0.5 3 0.5 2 1.5 2.5 1M210 125l-3 -0.5M211 123l-1.5 2 -2 1.5M212 126l2 3.5M212 128l-3.5 1M210 120l1.5 2.5 0.5 3 0 3 0 3M39 338l-4.5 -0.5M37 340l1.5 2.5M41 336l-2.5 1.5 -1.5 2.5 -1.5 2M43 340l2.5 3M46 341l2 -2.5M41 339l2.5 0.5 2.5 1 2.5 0M39 344l-3.5 1M41 341l-2 3 -1 3.5M45 344l2 3M42 344l3 0.5 3 -1M42 349l-2 2M43 347l-1 2.5 1 3M44 349l5 -1M41 333l-0.5 3 0.5 2.5 0 2.5 0.5 3 1 2.5 1.5 2.5 2 2M36 335l-3 -1.5M39 335l-3.5 0.5 -3.5 1M40 340l-0.5 3.5M38 338l2 2 2.5 2M35 342l-3 -0.5M37 340l-2 2 -1.5 2.5M39 344l1.5 2.5M37 343l2.5 1 2.5 1M38 346l-1.5 3.5M41 333l-1.5 2 -1.5 2.5 -0.5 2.5 -0.5 3 0.5 2.5 1.5 2.5M36 332l-1 -4M34 331l-3 1.5M38 333l-2 -1 -2.5 -1.5 -2.5 -0.5M35 337l-3 2.5M36 334l-1.5 3.5 0 3.5M30 334l-2.5 -2M33 335l-3 -0.5 -3 0M32 339l-1.5 3M31 336l1 3 2 2.5M30 339l-5 1.5M28 341l4 2.5M41 333l-2.5 0.5 -2.5 0.5 -2.5 1 -2 1.5 -2 2 -1.5 2 -0.5 2.5M38 328l0 -2.5M39 331l-1.5 -2.5 -2 -2.5M34 332l-3 0M36 330l-2.5 1.5 -2 2M33 329l-4 -3M30 329l-1 4M41 333l-2.5 -2 -2.5 -1 -3 -1 -3 -0.5 -3 0.5M43 328l3 -1M41 330l1.5 -2.5 1.5 -3M37 328l-2.5 -1M40 328l-3 0.5 -2.5 1M39 323l2 -1M39 326l0 -3 0 -2.5M37 324l-3.5 3M35 322l-1.5 -4M41 333l-0.5 -2.5 -0.5 -2.5 -1.5 -2.5 -1.5 -1.5 -2 -1.5 -2.5 -1M45 332l3.5 2.5M48 331l1 -3M43 331l2.5 0.5 2.5 -0.5 2.5 -0.5M43 326l-0.5 -4.5M45 329l-2.5 -3.5 -2.5 -2.5M49 326l3.5 1M46 327l3.5 -1.5 3 -2M46 322l0 -3.5M47 324l-1.5 -2.5 -2 -2M50 320l3 -0.5M48 321l2.5 -1.5 1.5 -2.5M46 317l0 -2.5M49 319l-2.5 -2 -2.5 -1M41 333l2 -2 1.5 -2 1.5 -2.5 1.5 -2.5 0.5 -2.5 0.5 -3 0 -2.5M46 336l2 2.5M44 333l2.5 2.5 3 1M48 331l3.5 -1.5M47 333l1.5 -2.5 0 -3M52 334l1.5 1.5M50 333l2.5 0.5 2.5 0M53 331l-2.5 -3.5M41 333l3 0.5 3 0 3 -1 2.5 -1 2.5 -2M44 337l-0.5 4M45 339l3 0M43 335l1 2 1.5 2 2 2M48 334l3 0M45 336l2.5 -2.5 1.5 -2.5M49 339l0.5 2.5M47 337l2.5 2 2 2M52 335l2 -1M50 337l1.5 -1.5 1.5 -2.5M54 340l-0.5 3M52 338l1.5 2 2 2M55 338l-0.5 -5M41 333l2 1.5 2 1.5 2.5 0.5 2.5 1 2.5 0.5 2.5 0 2.5 -0.5M35 424l-3 -0.5M37 423l-2.5 1.5 -2.5 1M39 427l-0.5 3M37 425l2 2.5 1.5 2M37 428l-4.5 2M37 430l3 2.5M37 420l0 2.5 0 2.5 0 3 0 2.5 0.5 2.5M32 421l-0.5 -3M35 422l-3 -1 -3 -1M33 427l-2 1.5M33 424l0 3 0 3M31 426l-5 -1M29 428l0.5 5M37 420l-2 2 -2 2 -2 2 -2 2 -2 2.5M33 416l1.5 -3M35 419l-1.5 -2.5 -1.5 -3M30 421l-2 0M32 419l-1.5 2 -2 2M29 419l-2 -4.5M26 418l-2 3M37 420l-2.5 -0.5 -2.5 -0.5 -3 -0.5 -2.5 -0.5 -3 0M38 415l3 -1M36 418l1.5 -3 1.5 -2.5M33 414l-1 -2M35 415l-2 -1 -3 -0.5M35 413l3 -3.5M34 410l-4 -0.5M37 420l-0.5 -2.5 -1 -2.5 -0.5 -2.5 -1 -2.5 -1 -2.5M43 419l2 2.5M39 418l4 0.5 3.5 0M40 413l2.5 -2M41 416l-1 -3.5 0 -3.5M46 414l1.5 2.5M43 414l3 0 3 0M44 410l2.5 -2M44 413l0 -3.5 -0.5 -3M49 411l0.5 2.5M46 411l2.5 0 2.5 0M48 409l-0.5 -4.5M37 420l2 -2 2 -1.5 1.5 -2 2 -2 1.5 -1.5 2 -2 1.5 -1.5M42 422l-0.5 3M40 420l2 2 2 2M43 417l3 -2M43 419l0.5 -2.5 0.5 -2.5M45 418l3.5 3.5M48 418l1 -3.5M37 420l3 -0.5 2.5 -0.5 2.5 -0.5 2.5 -0.5 2.5 -0.5M39 425l-3 2M39 427l1.5 2.5M39 422l0 3 -0.5 2.5 0 2.5M45 425l2 1.5M41 424l3.5 0.5 3.5 0M42 430l-2 1M43 427l-1 2.5 0 3M47 430l1.5 1.5M44 429l3 0.5 3 0.5M46 432l-2.5 3.5M37 420l2 2 2 2.5 2 2.5 1.5 2.5 1.5 2 1.5 2.5M37 371l-5 -1M34 372l0 4.5M32 373l-4 0.5M40 370l-3 0.5 -3 1.5 -2.5 1.5 -2 2M38 368l-1.5 -4.5M35 367l-3 4M32 367l-4 -2M40 370l-2.5 -1.5 -2.5 -1 -3 -0.5 -3 0M43 366l1.5 0M41 367l1.5 -1.5 2 -1.5M41 365l-4.5 -1.5M40 362l1 -4M40 370l0.5 -2.5 0 -3 -0.5 -2.5 -0.5 -2.5M43 369l4.5 0M45 367l0 -4.5M47 365l3.5 -1.5M40 370l2.5 -1 2.5 -2 2.5 -2 2 -2M43 375l-2 2M42 372l0.5 3 1 2.5M47 372l1.5 0M44 373l2.5 -1 2 -1.5M47 374l2 4M49 375l1.5 -3.5M40 370l2 2 2 1.5 2.5 1 3 0.5 2.5 0M37 375l-2.5 0M40 373l-2.5 2 -2 2.5M42 377l1 2M39 376l3 1 2.5 0.5M40 378l-2 4.5M41 381l4 0M40 370l-0.5 3 0 2.5 0.5 3 1 2.5 1.5 2.5M28 301l-4 0M26 303l0.5 2M30 300l-2.5 1 -2 1.5 -1 2M28 298l-1.5 -3.5M25 297l-3 2M30 300l-2.5 -2 -2.5 -1 -2.5 -1M32 298l3.5 -1.5M33 295l-2 -2.5M30 300l1.5 -2.5 1.5 -2.5 0.5 -2.5M33 300l3 2.5M36 300l0.5 -2.5M30 300l3 0.5 2.5 -0.5 3 -0.5M30 303l-2 3M31 306l3.5 0M30 300l0.5 3 0.5 2.5 1.5 2.5M208 170l4 2.5M211 169l0.5 -4.5M214 169l2.5 2M205 170l3 0 3 -0.5 2.5 -1 3 -0.5M207 172l-1 4.5M209 174l3.5 0M205 170l2 2.5 2.5 2 2.5 2M202 174l-3 -0.5M204 173l-2 1 -2.5 1.5M204 176l2.5 2.5M203 179l-4 1.5M205 170l-0.5 3 -0.5 3 -1 2.5 0 3M202 171l-4 -2.5M200 171l-2 4M197 172l-4 -2.5M205 170l-2.5 0.5 -3 0.5 -2.5 0.5 -3 1.5M203 168l-1 -4M200 166l-3.5 1.5M205 170l-2.5 -2 -2.5 -2 -3 -1.5M205 167l2.5 -2M205 164l-3.5 -1M205 170l0 -3 0 -2.5 -0.5 -3" stroke="#55478a" stroke-opacity="0.18" stroke-width="1.25"/>
<path d="M177 115l-0.5 -3.5M180 117l-3 -1.5 -2.5 -2.5M176 121l-3 0M178 118l-2.5 3 -2 2.5M173 116l1 -2M175 119l-2 -2.5 -2 -2.5M170 122l-3 -1M172 119l-1.5 2.5 -2 2.5M169 119l-2.5 -4M183 116l-2.5 1 -3 1 -2.5 0.5 -3 1 -3 0 -3 0M182 111l3 -1.5M181 114l1 -3 1.5 -3M176 112l-1.5 -2.5M179 112l-2.5 0 -3 0M178 107l3.5 -0.5M178 110l0.5 -3 1 -2.5M176 108l-4 -2M175 105l2.5 -3M183 116l-2 -2 -1.5 -2 -1.5 -2 -1.5 -2 -1 -2.5 -1.5 -2.5M186 112l2.5 2.5M183 113l3.5 -0.5 2.5 -1.5M184 111l-1.5 -5M185 108l4.5 -1M186 106l-0.5 -4M183 116l0.5 -2.5 0.5 -3 1 -2.5 1.5 -2.5 1 -2M187 119l-1.5 2M186 115l1.5 3.5 1.5 3.5M190 112l2.5 -0.5M189 115l1 -3 1.5 -3M194 116l0 3M191 115l3 1.5 2 2M196 112l2.5 1M194 114l2 -1.5 1.5 -2M197 115l2 3.5M183 116l3 -0.5 2.5 -0.5 3 -0.5 3 0 2.5 0 3 0M182 121l-2.5 0.5M184 118l-1.5 3.5 -2 2.5M189 121l1 3M186 121l2.5 0.5 3.5 0.5M185 126l-3 0.5M187 124l-2.5 2.5 -2 2.5M189 128l-0.5 2.5M187 127l2.5 1 2 2M188 129l-3.5 3M183 116l1.5 2.5 1 2.5 1 3 1 2.5 0.5 3 0 3M179 119l-2.5 -3M182 118l-3.5 0.5 -3 0M180 123l-2 1.5M180 121l0 2.5 0 2.5M178 122l-4.5 -2M175 124l-2 3.5M183 116l-1.5 2.5 -1.5 2 -2 2 -2.5 1.5 -2.5 1.5M182 247l2.5 0.5 2.5 1.5M182 245l-0.5 -2.5 -0.5 -3M183 242l3 0 2.5 1M185 240l0 -2.5 1 -2.5M187 238l2.5 3M189 236l3 -2.5M191 235l2.5 2M194 234l3 -2.5M181 250l0.5 -2.5 1 -3 1 -2.5 1.5 -2 1.5 -2 2.5 -2 2 -1.5 2.5 -1 3 -0.5M183 248l3 4M185 247l4.5 -2M188 246l2 4.5M191 246l3.5 -1M193 246l-0.5 4M196 247l3.5 1M198 249l-2.5 2M181 250l2 -1.5 2.5 -1.5 2.5 -0.5 2.5 -0.5 3 0.5 2.5 1 2 1.5 2 1.5M183 249l2.5 1.5 2 3M186 247l0.5 -2.5 2.5 -2.5M190 249l-2.5 1M188 246l1.5 3 0.5 3M191 246l2 -2 3 -0.5M193 246l1.5 4.5M199 245l0.5 2M196 246l2.5 -0.5 2.5 0M199 247l-2 3M201 248l4.5 0.5M203 250l-2 2M181 250l2 -1.5 2.5 -1 2.5 -1 3 -0.5 2.5 -0.5 2.5 0.5 2.5 0.5 2.5 1.5 2 1.5 2 2.5M184 250l1.5 2.5 0 3M189 248l2 1M186 250l3 -2 3.5 -0.5M189 253l-1.5 1.5M189 250l0.5 3.5 -1 3M192 251l2.5 -0.5 2.5 0.5M194 253l0 2 -0.5 2.5M196 254l4 3M198 256l-3.5 3M199 258l3 4M201 261l-3.5 1M181 250l2.5 -0.5 3 0.5 2.5 0.5 2.5 1 2.5 1 2 1.5 2 2 1.5 2.5 1 2.5 1 2.5M183 251l0.5 3 -1 2.5M186 253l2 0 2.5 1M187 255l-1.5 2 -2 1.5M188 257l2.5 4.5M190 260l-4.5 1M190 262l2 3.5M191 265l-4 -1M190 267l1.5 3.5M181 250l2.5 1 2 2 1.5 2 1.5 2 1 2.5 1 2.5 0 3 0 2.5 -0.5 2.5M182 252l-1.5 2.5 -3 1.5M183 255l2 2 1.5 2.5M184 258l-2.5 1.5 -2 1M184 260l2 2.5 0.5 2.5M184 263l-2.5 0.5 -2.5 -0.5M184 266l-1 4.5M183 268l-4 -1M181 270l-1.5 4.5M179 272l-2 -2M181 250l1.5 2.5 0.5 2.5 1 2.5 0 2.5 0 3 -0.5 2.5 -0.5 2.5 -1.5 2.5 -2 2 -2 1.5M181 253l-4.5 -0.5M181 255l2 2.5 0.5 2.5M181 258l-3.5 -1.5M180 261l-0.5 4M179 263l-3 -1.5M178 265l-1 3.5M176 267l-2 -2M181 250l0.5 2.5 0 3 -0.5 2.5 -0.5 2.5 -1 2.5 -1.5 2.5 -2 1.5 -2 2M177 252l0 -2M180 253l-3 -1 -2.5 -1.5M178 255l-1.5 4M176 257l-2 -4.5M174 258l-3 2.5M171 259l-0.5 -3.5M168 260l-2.5 1M166 260l0 -3.5M181 250l-1 2.5 -1.5 2.5 -2 2 -2.5 1.5 -3 0.5 -2.5 0.5 -3 0.5 -2.5 0M179 252l-2.5 -1.5 -2 -1.5M176 256l-2 0M177 253l-0.5 2.5 -2 2M175 254l-1 -4.5M172 255l-3 2M170 255l0 -3.5M167 255l-3.5 1M165 254l0 -3.5M163 254l-4 -1M181 250l-2 1.5 -2 1.5 -2 1 -2.5 1 -2.5 0.5 -2.5 -0.5 -2.5 -0.5 -2.5 -1 -2 -1M178 251l-1.5 -3 -0.5 -3M173 252l-1.5 -1.5M176 251l-3 1 -3 -0.5M173 247l2 -0.5M173 250l0 -3 1 -3M168 250l-1 -2M171 249l-3 1 -3 -1M169 248l0.5 -2.5 1.5 -2.5M166 247l-2.5 -0.5 -2.5 -1.5M165 245l2.5 -4M163 243l-3.5 -3M161 241l4.5 -2M160 238l-1.5 -2.5M181 250l-2.5 0.5 -2.5 0.5 -2.5 -1 -2.5 -0.5 -2.5 -1.5 -2 -1.5 -2 -1.5 -1.5 -2 -1.5 -2.5 -1 -2 -1 -2.5M178 250l-1 -2.5 -0.5 -2.5M176 249l-5 0M174 249l1 -5M171 247l-4 -0.5M169 246l3 -3M168 244l-3.5 -2.5M167 242l3.5 -1.5M166 239l-1.5 -3M181 250l-2.5 0 -2.5 -0.5 -2.5 -1 -2 -1 -2 -1.5 -2 -2 -1 -2.5 -1 -2.5 -0.5 -2M179 248l1 -2.5 1.5 -2.5M174 246l-0.5 -2M177 247l-3 -1 -2.5 -1.5M175 244l4.5 -2M174 242l-2 -1.5 -1.5 -2.5M173 239l4.5 0M172 237l-1.5 -3.5M172 234l4 0M172 231l0 -2.5M181 250l-2 -1.5 -2 -2 -1.5 -2.5 -1.5 -2 -1 -2.5 -1 -2.5 0 -3 0 -2.5 1 -2.5M179 248l1.5 -2.5 2.5 -2M177 247l-2.5 -2 -2 -2M178 242l1.5 1M176 244l1.5 -2 2.5 -1M175 242l-2.5 -1.5 -1.5 -2.5M174 240l1.5 -2 2.5 -1M173 238l-2 -5M172 235l2 -1.5 2.5 -1M172 233l-0.5 -4.5M172 230l4 0.5M173 228l0 -3.5M181 250l-2 -1.5 -1.5 -2 -1.5 -2 -1.5 -2.5 -1 -2 -0.5 -2.5 -1 -2.5 0 -2.5 0 -2.5 0.5 -2.5 1 -2M181 247l2.5 -0.5 2.5 0M181 245l0 -5M184 242l0.5 2M181 242l2.5 0 2.5 0.5M181 240l1 -4.5M182 237l4 1.5M183 235l2 -3.5M185 233l2.5 3M187 232l2 -2.5M181 250l-0.5 -2.5 0 -2.5 0.5 -2.5 0.5 -2.5 0.5 -2.5 1.5 -2.5 1.5 -2 2 -1.5 2 -1.5M243 171l0 2.5M240 171l2.5 0.5 2.5 1M242 169l3 -3M244 168l1 4M246 167l3.5 -1.5M249 167l-1.5 3.5M251 167l4 0M254 168l-1 2.5M239 174l1 -2.5 1.5 -2 2 -1.5 2.5 -1 2.5 0 2.5 0 2.5 0.5 2.5 1.5M241 171l2 1.5 1.5 2M243 170l2 -4M245 168l1.5 4.5M247 167l3 -2.5M250 166l1 4M252 166l3.5 -2M255 166l0 2.5M239 174l1.5 -2.5 2 -2 2.5 -1 2.5 -1.5 2.5 -0.5 2.5 -1 2.5 0 3 0.5M241 173l1.5 2.5 0.5 2.5M244 173l2.5 -1.5 2.5 0M247 173l-0.5 3 -1.5 2.5M249 175l3 -0.5 2.5 0.5M252 176l-3.5 3M253 178l3.5 3.5M255 180l-3 2M256 183l2 2.5M239 174l2.5 -1 2.5 0 3 0.5 2.5 1 2 1.5 2 2 1.5 2.5 1.5 2.5 1 2.5M241 174l0 3 -1 2.5M243 176l3.5 0 2.5 1.5M245 178l-3 3.5M247 180l3.5 3M249 182l-4.5 2M250 185l1.5 3M250 188l-3 0.5M251 190l0 3.5M239 174l2.5 0.5 2 1.5 2 2 2 2 1 2.5 1 2.5 1 2.5 0.5 3 -0.5 2.5M240 175l0 3 -2 2M244 179l-1.5 2M242 178l1.5 1.5 1 2M242 180l-4.5 1M242 183l-0.5 4M241 185l-3 -1.5M240 187l-1.5 3M238 189l-2.5 -2M239 174l1.5 1.5 1 2 0.5 2.5 0 3 -1 2 -1.5 2.5 -1.5 2 -1.5 2M238 178l-2.5 -1.5M240 176l-2.5 1.5 -2.5 0.5M240 179l2.5 1.5 1 2.5M240 181l-4 -1M239 184l-1.5 3.5M238 186l-2.5 -2.5M236 188l-1.5 3.5M234 190l-2.5 -2.5M239 174l1 2 0.5 2.5 0 3 -1 2.5 -1.5 2.5 -2 2 -2 2 -2.5 1M239 176l-3.5 1 -3 -0.5M238 179l1 2.5 -1 3M237 181l-2 -0.5 -2.5 -1M236 183l0 3 -1.5 2M235 185l-4 -2M233 187l-3.5 3.5M231 189l-2.5 -4M229 190l-3 2M226 191l0 -3.5M239 174l-0.5 2 0 2.5 -1 2.5 -1.5 2 -1 2.5 -2 1.5 -2 1.5 -2 1.5 -2.5 0.5 -2.5 0.5M235 175l0 -2M237 176l-2 -1 -2.5 -1.5M236 178l-0.5 2.5 -1.5 2M234 180l-3 -4M232 181l-3 2.5M229 182l0 -4M227 182l-4 0.5M224 181l0.5 -2.5M239 174l-1.5 2 -1.5 2 -2 1.5 -2 1.5 -2.5 0.5 -3 0 -2.5 -0.5 -2.5 -1M236 175l-1.5 -2.5 -0.5 -3M234 175l-2 2.5 -2.5 1.5M231 175l-0.5 -2 0.5 -2.5M228 175l-4 1M226 175l1 -4.5M223 174l-4 -2.5M221 172l2.5 -2.5M219 170l-2.5 -2M239 174l-3 0.5 -2.5 1 -2.5 0 -2.5 -0.5 -3 -0.5 -2 -1 -2.5 -1.5 -2 -1.5 -1.5 -2.5M235 171l2 -1M236 174l-1 -3 0 -3M233 174l-2.5 1.5 -2.5 -0.5M230 171l2.5 -1M231 174l-0.5 -3.5 1 -2.5M228 173l-2.5 0 -2.5 0M226 171l1 -2.5 2 -2M224 169l-4 -2M222 167l3 -2.5M221 165l-3.5 -3M220 162l3.5 -1M239 174l-3 0 -2.5 0 -3 -0.5 -2.5 -1 -2.5 -1.5 -2 -2 -1.5 -2 -1.5 -2.5 -1 -2.5 -0.5 -2.5M236 172l1 -3 1 -3M234 171l-2.5 -1 -2 -2M233 169l1.5 -2.5 2.5 -1M231 167l-2 -1.5 -2 -2M230 164l1.5 -1.5 2.5 -1M229 162l-3 -3M228 160l3.5 -1M227 157l-1.5 -3M227 154l3.5 0.5M239 174l-2.5 -1.5 -2 -2 -2 -1.5 -1.5 -2.5 -1 -2 -1.5 -2.5 -0.5 -2.5 -0.5 -2.5 0 -2.5 0.5 -2.5M237 172l2 -3 2.5 -1.5M235 169l-2.5 -1 -2 -2M234 167l2 -2 2.5 -1M233 165l-2.5 -2 -1.5 -2.5M232 162l1.5 -1.5 2.5 -1M231 160l-1.5 -4.5M231 157l4.5 -0.5M231 154l0 -3.5M232 152l3 1.5M239 174l-2 -2.5 -1.5 -2 -1.5 -2.5 -1.5 -2.5 -1 -2 -0.5 -3 0 -2.5 0.5 -2.5 1 -2.5 1.5 -2M239 171l2.5 -1 3 0.5M239 168l-0.5 -3 0.5 -3M240 166l2.5 -0.5 2.5 1M241 163l0 -2.5 0.5 -2.5M242 161l2.5 1 2 2M244 159l3 -4M246 157l2 3.5M248 155l2.5 -2M250 154l1.5 3M239 174l-0.5 -3 0.5 -3 0.5 -2.5 1.5 -2.5 1.5 -2 1.5 -2 2 -2 2 -2 2.5 -1 2 -1.5M250 106l2.5 -2M249 103l-2.5 -1M250 108l-0.5 -2 -0.5 -2.5 -0.5 -2.5M244 108l-2 -1M247 107l-2.5 1 -3 1M244 103l3 -2.5M245 106l-0.5 -3.5 -0.5 -3M240 105l-2 -2.5M243 104l-3 0.5 -3 1M240 102l0.5 -4.5M253 110l-3 -1.5 -2.5 -1.5 -2.5 -1.5 -2.5 -1.5 -2 -2 -2.5 -2M252 104l4 0M253 102l-1.5 -3.5M251 107l1 -2.5 1 -3 1.5 -2.5M247 105l-2.5 -2.5M244 105l-1.5 2.5M249 105l-2 0.5 -2.5 0 -3 0M248 101l3 -3M248 98l-2.5 -2M248 103l-0.5 -2.5 0.5 -2.5 0 -2.5M243 100l-1 -3M246 101l-3.5 -0.5 -3 -1.5M247 96l2.5 0M245 99l1.5 -3 2 -2.5M241 96l-0.5 -2.5M244 97l-3 -1.5 -2.5 -1M244 92l3 -1M243 94l1 -2.5 1.5 -2M253 110l-2 -2.5 -1.5 -2 -1.5 -2 -1.5 -2.5 -1.5 -2 -1 -2.5 -1 -2.5 -1 -2.5M255 106l4.5 1M258 104l0 -2.5M253 107l2.5 -1.5 2 -1 2.5 -1.5M252 102l0.5 -4M250 100l-3.5 -0.5M253 104l-1.5 -1.5 -2 -2.5 -1.5 -2.5M256 100l3.5 1.5M253 102l3.5 -2 3 -1M251 97l0 -3.5M254 99l-3 -1.5 -3 -2M257 95l3 2M254 97l3 -1.5 2.5 -2M252 92l0.5 -3M254 94l-2 -1.5 -2 -2.5M254 92l5 -2M253 110l0 -3 0 -2.5 0.5 -2.5 0 -2.5 0.5 -2.5 0 -2.5 0.5 -2.5 0.5 -2.5M258 108l1.5 3M255 108l2.5 0 3.5 0.5M257 103l2.5 -1.5M257 106l0 -3 1 -2.5M262 106l0.5 2.5M259 105l2.5 1 3 1M261 104l2.5 -4.5M264 103l3.5 2M253 110l1.5 -2.5 2 -1.5 2.5 -1 2 -1.5 2.5 -1 2.5 -0.5M255 114l-3 2M255 110l0 4 0.5 3.5M261 111l2.5 2M257 112l4 -1.5 3.5 -1M260 116l-2 2M260 113l0.5 3 0 3M264 112l3 0.5M262 114l2.5 -2 2.5 -1M264 118l-2 2M264 115l0 2.5 -0.5 2.5M267 116l4 -1M253 110l2 0.5 2.5 1 2 1 2.5 1 2 1.5 2.5 1 2.5 1M253 115l-2.5 0.5M254 112l-1 3 -1 3M259 113l1.5 2.5M256 114l3 -0.5 2.5 0M256 118l-3 0.5M257 116l-1.5 2.5 -1.5 2.5M259 118l4 0.5M260 121l-2.5 3M253 110l1 1.5 2 2 1 2.5 1.5 2 1.5 2.5 1 2.5M249 113l-2.5 -1.5M247 114l-1.5 3M252 112l-2.5 1 -2.5 1 -2.5 1M253 118l-1.5 3M251 115l2 3 1.5 3M248 119l-2.5 -2M251 118l-3 1 -3.5 0.5M251 123l-1 2.5M250 121l1.5 2.5 1 2.5M249 124l-4 1M253 110l-1 2.5 -0.5 2.5 -0.5 3 -1 3 -0.5 2.5 -1 3M247 109l0 -3.5M250 111l-3 -2 -3.5 -1.5M247 115l-2.5 1.5M248 112l-1 3 -0.5 3M242 112l-0.5 -2.5M245 113l-2.5 -1 -3 -1M242 117l-3 1M243 114l-1 3 -1.5 2.5M240 116l-3 -2.5M253 110l-3 0.5 -2.5 1.5 -2.5 1 -2.5 1.5 -2.5 1 -2.5 1M289 96l4 0M290 94l-1.5 -2M287 98l2 -2 1 -2 0.5 -2.5M284 95l-3 -2.5M287 95l-3.5 0 -3.5 0.5M288 90l2 -1.5M286 93l1.5 -3 0.5 -3.5M282 91l-3 -2M285 91l-3.5 0 -3 1M283 86l1.5 -1.5M283 89l0 -3 -0.5 -2.5M281 87l-3 3M287 101l0.5 -3 -0.5 -2.5 -1 -2.5 -1 -2.5 -2 -2 -2 -2 -2 -1.5M292 100l2.5 2.5M295 100l1.5 -3M289 100l3 0 3 0 2.5 -1M291 95l1 -3M291 93l-3 -0.5M292 98l-0.5 -2.5 -1 -2.5 -1 -2.5M297 95l3 1M294 96l3 -1 2.5 -2M294 92l-0.5 -3M295 94l-1.5 -2.5 -2.5 -2M299 90l2.5 -0.5M296 91l2.5 -1 2 -2M294 88l-1.5 -3M297 89l-2.5 -1.5 -2.5 -0.5M287 101l2.5 -1.5 2 -1.5 2 -2 2 -2 1 -2.5 0.5 -3 0 -2.5M292 104l0.5 4M290 101l2 3 3 2M294 99l2 -1M292 101l1.5 -2 1 -3M297 102l2 3M295 101l2.5 1 3 0.5M298 98l1.5 -2M297 100l1 -2.5 -0.5 -2.5M300 99l3.5 0.5M287 101l2.5 0.5 2.5 0 3 -0.5 2.5 -1 2 -1 2.5 -1.5M287 106l-2.5 2.5M287 108l2.5 2M288 103l-1 3 0 2.5 0 2.5M293 105l3 1.5M290 106l3 -0.5 3 -2M293 111l-2 2M292 108l0.5 2.5 1.5 3M296 107l2.5 0.5M294 109l2.5 -1.5 1.5 -2.5M299 112l-1 2M297 110l1.5 2 2 1.5M287 101l1 2.5 1.5 2.5 2.5 2 2.5 1 2.5 0.5 3 0M284 106l-2.5 1M286 103l-1.5 3 -1 3.5M289 107l1.5 2M286 106l3 1 3 0M286 111l-1.5 1.5M287 108l-1 3 0.5 2.5M291 111l2 1.5M288 111l2.5 -0.5 2.5 -1M290 113l1.5 4M287 101l-0.5 2.5 0 2.5 0.5 2.5 1 2.5 1.5 2 2 2M281 101l-2.5 -2.5M284 102l-3 -0.5 -3.5 0.5M284 106l-0.5 3.5M282 103l2 3.5 2 2.5M278 106l-3 -1M280 106l-2.5 0 -2.5 1M280 110l-0.5 3M279 108l1.5 2 2 1.5M278 110l-1.5 5M287 101l-2.5 1 -2.5 1.5 -1.5 2 -1.5 2.5 -1 2.5 -0.5 2.5M282 97l0 -3.5M285 100l-3 -3 -2.5 -2.5M280 102l-3 1M282 99l-2 2.5 -1 3.5M277 96l0 -3M280 99l-2.5 -3 -2.5 -2.5M276 102l-1.5 1.5M277 99l-1 2.5 0 3M272 99l-2 -2M274 99l-2.5 0 -2.5 -0.5M272 101l1.5 4.5M287 101l-2.5 -1 -2.5 -1 -2.5 -0.5 -2.5 0.5 -2.5 0.5 -2.5 1.5 -2 1.5M287 96l3.5 -3M288 93l-3 -1.5M286 98l1 -2 0.5 -3 0 -3M282 96l-3.5 -3M279 96l-1.5 3M284 96l-2.5 0 -2.5 0 -3 1M283 90l2 -3M283 94l0 -3.5 -1 -4M278 94l-3.5 -1.5M281 92l-3 1.5 -2.5 2.5M278 88l1.5 -3.5M279 91l-1 -3.5 -1.5 -2.5M274 91l-2 0.5M277 90l-2.5 1 -1.5 2.5M274 89l-3.5 -3.5M287 101l-1 -2.5 -1.5 -2.5 -1.5 -2 -2 -1.5 -2 -1.5 -2.5 -1.5 -2.5 -0.5 -2.5 -0.5M320 125l2 3M323 125l1.5 -3M317 124l3 0.5 3 0 2.5 -0.5M319 120l3 -3M318 117l-2.5 0M319 122l0 -2.5 -0.5 -2.5 -1 -2M324 119l4 1M321 120l3.5 -1 3 -2.5M320 115l0 -3M322 118l-1.5 -2.5 -2.5 -2M327 115l2.5 1.5M324 116l2.5 -1 3 -1M323 111l0 -3M324 113l-1.5 -2 -2 -2M327 109l2 1M325 111l1.5 -2 1.5 -2M315 125l2.5 -1 2 -2 1.5 -1.5 1.5 -2.5 1 -2 0.5 -2.5 0.5 -2.5 0.5 -3M318 129l-2 4M319 132l3.5 1M317 127l1 2.5 1 2.5 1.5 3M322 127l4 2.5M325 126l0 -3M319 128l3 -0.5 3 -1.5 2.5 -1.5M323 132l-2 2.5M324 134l3.5 0M322 129l1 2.5 1 2.5 1 2.5M326 128l4 -0.5M324 130l2.5 -2.5 1.5 -3M328 134l0 2.5M327 131l1.5 2.5 2 2.5M331 129l2.5 -0.5M329 131l2 -2 1.5 -2.5M332 131l5 1.5M315 125l2 1.5 2.5 1.5 2.5 1 2 1.5 3 0.5 2.5 0.5 2.5 -0.5 2.5 -0.5M315 130l-4 1M314 132l1.5 2M316 128l-1.5 2 -1 2.5 -0.5 2.5M320 130l2.5 2.5M317 130l3.5 0.5 3 -1M319 136l-1.5 1.5M319 133l0 2.5 1 3M323 133l2.5 1.5M321 135l2 -1.5 2 -2M323 136l1 5M315 125l1 2.5 1 2.5 2 2.5 2 2 2 2 2 1.5M310 129l-2.5 -1.5M314 128l-3.5 0.5 -3 2.5M314 133l0.5 3M313 130l1.5 3 2.5 2M309 134l-2.5 0M312 133l-2.5 1.5 -2 2M313 137l0 3M311 135l2 2 3 0.5M311 138l-3 3.5M315 125l-1 2.5 -1.5 2.5 -0.5 3 -1 2.5 -0.5 3 0 2.5M310 124l-1 -4M308 122l-3.5 1.5M312 125l-2 -1.5 -2 -1 -2.5 -1.5M309 128l-3.5 2M308 131l3 1.5M310 126l-1 2 -0.5 3 0 2.5M304 124l-1.5 -2.5M307 126l-3 -1.5 -3.5 -1M304 130l-2 1.5M304 127l0 3 0 3M300 129l-2 -2M302 129l-2.5 -0.5 -2.5 0M300 131l3 3M315 125l-2.5 0.5 -3 0.5 -2.5 0.5 -2.5 1 -2.5 1 -2 2 -2 2M312 120l2.5 -3.5M312 118l-3.5 -0.5M313 123l-0.5 -2.5 -1 -3 -1.5 -2.5M308 122l-3 -1M306 124l0.5 3M310 122l-2 0.5 -2 1 -2.5 1.5M307 117l0.5 -3.5M308 120l-1 -3 -2 -3.5M303 122l-2.5 0.5M305 119l-1.5 2.5 -1.5 3M300 117l-1 -3M303 119l-3 -2 -2.5 -1M300 118l-1.5 4.5M315 125l-2.5 -1.5 -2 -2 -2.5 -1 -2.5 -1.5 -3 -0.5 -2.5 -0.5 -3 0M315 120l3 -2M315 117l-2.5 -1.5M314 123l1 -3 0 -2.5 0 -3M309 120l-2.5 -2M312 120l-3 0 -3.5 0.5M312 115l2.5 -2M311 118l0.5 -3.5 -0.5 -3.5M306 116l-2 -2M309 116l-3 0 -3 0.5M307 111l2.5 -2M307 114l0.5 -3 -0.5 -3M305 112l-3.5 3M315 125l-1 -2.5 -1.5 -2.5 -1.5 -2 -2 -2 -2 -2 -1.5 -2 -2.5 -1.5M319 121l4 0M321 119l-0.5 -3M316 122l2.5 -1 2.5 -1.5 2.5 -2M314 118l-0.5 -3.5M311 117l-3 2M316 120l-2 -1.5 -3 -1 -3 -1M319 115l4 -0.5M321 114l-0.5 -3M316 117l2.5 -1.5 2.5 -2 2 -2M313 113l-2.5 -2.5M316 114l-3.5 -1 -3.5 0M317 108l2.5 -1M315 112l1.5 -3.5 0.5 -3.5M311 109l-2.5 -2M314 109l-3 0 -3 0.5M313 104l1.5 -1.5M313 107l0 -3 0 -3M315 125l1 -2.5 0.5 -2.5 0 -3 -0.5 -2.5 -0.5 -3 -1.5 -2.5 -1.5 -2 -1.5 -2M268 155l2.5 -3M267 153l-2.5 -1M269 158l-1 -3 -1 -2 -1.5 -2.5M264 159l-4 0M267 156l-3.5 2.5 -2.5 2.5M263 151l2.5 -2.5M264 155l-0.5 -3.5 -1 -3.5M259 156l-3 -2M262 154l-3 1.5 -2 2.5M259 150l1 -2.5M259 153l-0.5 -3 -0.5 -3M254 153l-2.5 -0.5M256 152l-1.5 1.5 -2 1.5M272 159l-3 -1.5 -2.5 -1 -2.5 -1.5 -2.5 -1.5 -2.5 -1 -2.5 -0.5 -3 -1M272 154l3 -0.5 2.5 -1M273 152l-2.5 -4M275 149l2.5 -2M271 157l1.5 -3 1 -2.5 1 -2.5 1 -2.5M267 154l-2.5 -4.5M265 153l-1.5 3.5M262 153l-2 -3M270 154l-2.5 -0.5 -2.5 -0.5 -3 0 -2.5 0.5M270 149l4.5 -1M272 146l-2 -2.5M269 152l1 -3 1.5 -3 1.5 -3M264 150l-4 -2M261 151l-1.5 3M267 150l-3 0.5 -3 0.5 -3 1.5M266 145l1.5 -2.5M265 142l-2.5 -1.5M266 148l-0.5 -3 0 -2.5 -1 -2.5M260 145l-1.5 -3M264 146l-3.5 -0.5 -4 0M263 141l2 -2.5M262 139l-2 -2M262 144l0.5 -3 0 -2.5 -0.5 -2.5M258 144l-3.5 -1M260 142l-2.5 1.5 -2.5 2M258 138l1.5 -2.5M258 141l-0.5 -3.5 -0.5 -3M272 159l-1.5 -2.5 -0.5 -2.5 -1.5 -2 -1.5 -2.5 -1.5 -2 -1.5 -2 -1.5 -2 -2.5 -1.5 -2 -1 -2 -1.5M276 156l4 1.5M278 154l0 -3M273 157l2.5 -1.5 3 -1.5 2.5 -1.5M271 152l1 -4.5M269 150l-2.5 -0.5M273 154l-1.5 -2 -2 -2.5 -2 -2.5M277 150l3 2.5M279 149l0 -4M274 152l2.5 -1.5 2.5 -2 2 -1.5M273 148l0 -4.5M271 146l-2.5 1M275 149l-2 -1.5 -2 -1.5 -2 -1.5M277 145l3.5 1.5M279 143l-0.5 -2.5M275 147l2 -1.5 1.5 -2 1.5 -2M273 142l-1 -3M275 144l-2.5 -2 -2.5 -2M276 139l2.5 -1M275 142l1 -3 1.5 -3M274 139l-5 0M272 159l0.5 -2.5 1 -2 0.5 -2.5 0.5 -2.5 0.5 -2.5 0 -2.5 -0.5 -2.5 -0.5 -2.5 -0.5 -2.5M277 158l1.5 2.5M279 158l2.5 -3M274 157l2.5 0.5 3 0.5 3 -0.5M275 153l1.5 -3M274 150l-3 0.5M275 156l-0.5 -3 -1 -2.5 -1 -2.5M279 153l3.5 1M282 152l1 -3M277 153l2.5 0 2.5 -1 2.5 -0.5M276 148l1 -2.5M278 151l-2 -2.5 -2 -3M282 148l2.5 2M279 149l3 -0.5 3 -1M279 144l0 -2.5M280 147l-1.5 -3 -2 -2M281 144l4.5 -2M272 159l1.5 -1.5 2 -2 1.5 -2 1 -2.5 1.5 -2 1 -2.5 0.5 -2.5 1 -2M276 163l-1 5M278 166l4 -1M274 160l2 3 2 2.5 2 2.5M279 160l3.5 1.5M281 158l0 -3M277 161l2 -1.5 2.5 -1.5 2 -2M281 164l0 4M282 167l3 -1M279 162l2 2.5 1.5 2 1.5 2M285 161l2.5 0.5M282 163l2.5 -2.5 2.5 -2.5M286 167l-0.5 2.5M285 164l1 2.5 2 2.5M289 162l3.5 -1M287 165l2 -3 1.5 -3M291 167l-0.5 3M290 165l1.5 2.5 1 2.5M272 159l2 1 2.5 1.5 3 0.5 2.5 1 2.5 1 3 0.5 2.5 0.5 3 0.5M273 164l-4 2M273 167l2.5 2M274 161l-1 3 0 3 0 3M279 162l3 2.5M282 162l0.5 -3.5M276 163l2.5 -1 3 -0.5 3 -0.5M278 167l-2.5 2.5M279 169l2 1.5M278 164l0 3 1 2.5 0.5 2M283 165l3 1.5M285 164l0.5 -2.5M280 166l2.5 -1 2.5 -1 2.5 -0.5M283 170l-2 3M282 167l1 3.5 1 2.5M287 168l2.5 1M285 169l2.5 -1 2.5 -1.5M287 173l-2 2M287 170l0.5 2.5 0.5 2.5M272 159l1.5 2 2 1.5 2.5 2 2 1 2.5 1.5 2.5 1.5 2 1.5 2.5 1.5M269 163l-4.5 0M266 165l0 3M271 162l-2 1 -2.5 2 -2.5 1.5M273 166l0 4M276 168l2.5 -0.5M271 164l2.5 2 2 2.5 2.5 1.5M269 169l-3.5 -0.5M267 171l1 3M271 167l-1.5 1.5 -2 2 -2 2M274 170l1.5 4M276 172l2.5 -1.5M271 169l2.5 1.5 2.5 1 2.5 1M269 174l-3 0.5M272 172l-3 2 -2.5 3M276 174l2.5 2.5M273 174l3.5 0 3.5 0M273 179l-3 1.5M274 176l-1 3 -0.5 3M277 179l1.5 2M275 179l2.5 0 2.5 0M272 159l-0.5 2.5 0 2.5 -0.5 2.5 0.5 2.5 0.5 2.5 1 2.5 1 2.5 1 2 0.5 2.5M267 162l-4 -3.5M264 162l-1.5 3M270 161l-3 0.5 -3.5 0.5 -3 0.5M270 166l-1.5 4M272 168l3 0.5M269 163l1 3 2 2.5 2 2M265 166l-3.5 -1.5M262 166l-0.5 3M267 166l-2.5 0 -2.5 0 -3 1M267 170l-1.5 3.5M268 173l3.5 0M266 168l1 2 1 2.5 1.5 2.5M262 171l-3 -1M265 170l-3.5 1.5 -3.5 1.5M266 176l-0.5 3M264 173l2 2.5 2.5 2.5M261 177l-3.5 -1.5M263 175l-2.5 1.5 -2 2.5M264 180l-0.5 2M262 178l2 2 1.5 2M272 159l-2 2 -1 2.5 -1.5 2 -1.5 2.5 -1 2 -1 2.5 -1 2.5 -0.5 2.5 -0.5 2.5M266 158l-1 -5M264 156l-3 2M269 159l-2.5 -1 -3 -2 -2.5 -1.5M265 163l-3.5 1M265 165l2.5 2.5M266 160l-0.5 2.5 -1 2.5 -0.5 3M261 159l0.5 -3.5M259 157l-3 1.5M264 160l-2.5 -1.5 -2.5 -1 -2.5 -1.5M260 163l-3.5 1.5M259 165l2 2.5M261 160l-1.5 2.5 -1 2.5 -1 2M256 158l0.5 -2M258 161l-2 -2.5 -2 -2M256 165l-2 1.5M256 162l-0.5 2.5 0.5 3M253 163l-4.5 -0.5M272 159l-3 0.5 -2.5 0.5 -3 0 -2.5 0.5 -2.5 0.5 -3 0.5 -2 1.5 -2.5 1.5M289 189l-1.5 2M289 186l-0.5 2.5 0.5 2.5M291 188l3.5 -2.5M293 189l0.5 4M295 191l2.5 -3M287 184l1.5 2 2 1.5 2 2 2.5 1 2 1.5M283 189l-3 -0.5M286 187l-3 2 -2 3M289 191l2 2M286 189l3 1.5 3 0.5M285 195l-3 0.5M286 192l-1 3 -1 3M290 195l1 2.5M287 195l2.5 0 2.5 0M288 197l0 4.5M287 184l-1 2.5 0 3 0.5 2.5 0.5 2.5 1 2.5 1.5 2.5M281 184l-2.5 -2M284 185l-3 -0.5 -3.5 -0.5M282 189l-1 2.5M282 187l0.5 2.5 1 2.5M277 188l-1 -1.5M280 189l-3 -0.5 -2.5 0M278 191l2 4M287 184l-2.5 1 -2.5 1.5 -2 2.5 -2 2 -1.5 2.5M283 180l0.5 -2M285 183l-2 -2.5 -2 -2.5M280 185l-3 0.5M282 183l-2 2 -2 2M277 181l-0.5 -2M279 183l-1.5 -2 -3 -0.5M277 183l-2 4M274 183l-4 -1.5M287 184l-2.5 -1 -2.5 0 -2.5 0 -2.5 0 -2.5 0.5 -2.5 0.5M289 178l2.5 -1M287 181l1.5 -3 1 -3.5M283 178l-2 -3M286 178l-3 -0.5 -3.5 0M287 173l3 -1M286 176l1.5 -3 1 -3M284 173l-4.5 1M283 171l-1 -4.5M287 184l0 -3 -0.5 -2.5 -1 -3 -1 -2.5 -1.5 -2 -2 -2M291 182l3 2M294 182l1.5 -2.5M289 182l2.5 0.5 2.5 0 2.5 -0.5M289 177l1.5 -2.5M291 180l-2 -2.5 -2 -2.5M295 178l3 1M292 178l3.5 0 3 -1M292 174l0.5 -3M293 176l-1 -2 -2 -2M295 174l3.5 -2.5M295 172l-4 -2.5M287 184l2 -1.5 1.5 -2 1.5 -2 1.5 -2 1 -2.5 1 -2 0.5 -2.5M292 187l-0.5 3.5M290 184l2 3 2.5 2.5M295 182l2.5 -0.5M293 184l1.5 -2.5 2 -2.5M298 185l1 2.5M295 184l3 1 2.5 0.5M298 183l-1 -5M300 181l5 -0.5M287 184l3 0 2.5 0.5 3 -0.5 2.5 -1 2.5 -1.5 2 -2M327 183l2 2M325 183l2.5 0 3 0M326 181l-1 -5.5M327 178l4 0.5M328 176l-1.5 -4M324 186l0.5 -3 1 -2.5 1.5 -2.5 1 -2 1.5 -2.5M328 187l-2.5 4M329 190l3 0M326 185l1.5 2.5 1.5 2 1.5 2M330 182l3.5 -0.5M329 185l1.5 -3 1.5 -2.5M333 187l-0.5 2.5M331 185l2 2 1.5 2.5M335 182l3 -0.5M334 184l1 -2.5 2.5 -2M336 184l2.5 4M338 183l3.5 -4M324 186l2 -0.5 2.5 -0.5 2.5 -0.5 2.5 -0.5 2.5 0 2.5 -0.5 2.5 -0.5M326 190l-3.5 1.5M326 187l-0.5 3.5 -0.5 3M330 189l2 2.5M328 189l2 0 2.5 0M329 191l-1 4.5M331 193l4 1.5M324 186l1.5 1.5 2 1.5 1.5 2.5 1.5 2 1.5 2M321 190l-2 -1M324 188l-2.5 2 -2.5 1M325 193l-1 2M323 191l2 2 1.5 2M323 193l-4 3M323 196l1.5 3.5M324 186l-0.5 2 0 3 0 2.5 -1 2.5 -0.5 2M319 188l-1.5 -3.5M322 187l-3 0.5 -3 0M319 192l-2.5 0.5M320 189l-1 3 -1.5 2.5M317 190l-3 -3M315 192l-2.5 3M324 186l-2.5 1.5 -2 1.5 -2.5 1.5 -2 1 -2.5 1M319 182l1 -2.5M321 185l-2 -3 -1.5 -3M315 186l-2 -1M318 185l-2.5 1 -3 1M315 181l2 -1.5M316 184l-1 -2.5 -0.5 -3M313 184l-4.5 2M310 183l-0.5 -3.5M324 186l-3 -0.5 -2.5 -0.5 -3 -0.5 -2.5 -0.5 -2.5 -0.5 -3 -0.5M324 181l3 0.5M323 183l1.5 -2 2 -2M319 179l-0.5 -2.5M322 180l-3 -0.5 -2.5 -1.5M321 178l4.5 -3M321 175l-3 -2.5M324 186l-1.5 -3 -0.5 -2.5 -1 -2.5 0 -3 -0.5 -2.5M237 210l2.5 2M240 210l2 -2.5M234 210l2.5 -0.5 3 0.5 3 0M235 205l3 -3M235 202l-2.5 -1.5M235 208l0.5 -3 0 -3 0 -2.5M240 206l2.5 2.5M243 206l2.5 -1.5M237 206l3 0 2.5 0 3 0M240 200l2 -1.5M239 204l0.5 -3.5 0 -4M245 203l1 3M241 202l3.5 1 3.5 1.5M243 197l2 -1.5M243 201l0 -3.5 0 -3M248 199l1.5 2M245 199l3 0 3 0.5M232 212l1.5 -2 2 -2 2 -2 1.5 -2 2 -1.5 2 -2 2 -2 2 -1.5M236 214l-2 4M238 217l3 -1M234 212l2 2 2 2.5 1.5 2.5M239 210l3 0.5M240 208l-1 -3M237 212l1.5 -2.5 1.5 -2 1.5 -2M242 214l0.5 4M240 212l2.5 2.5 2.5 2.5M244 209l3.5 0.5M242 212l2.5 -3 2 -2.5M247 215l-1 3M245 212l2 2.5 2 2.5M249 210l2 -0.5M247 212l1.5 -2 1.5 -2.5M250 213l2 4M232 212l2.5 -0.5 2.5 0.5 2.5 0 2.5 0 3 0.5 2.5 0 2.5 0 2.5 0M232 217l-3 1.5M234 214l-1.5 3.5 -1.5 3.5M239 217l1 2M235 216l3.5 0.5 3.5 0.5M236 221l-3 1M237 218l-1 3 -1 2.5M239 221l4.5 1M240 223l-1.5 4.5M232 212l1.5 2 2 2 1.5 2.5 1.5 2 1.5 2.5 2 2.5M229 216l-3 -2.5M226 217l0 3M231 214l-2 1.5 -2.5 1.5 -2.5 1.5M232 219l-2 3.5M233 222l3.5 0M231 217l1 2.5 1 2.5 1.5 2M227 221l-3.5 -1.5M230 219l-3.5 1.5 -3 1.5M231 225l-0.5 2.5M230 222l1.5 3 2 2.5M226 226l-2.5 -0.5M229 225l-3 1.5 -2.5 1.5M230 230l-1 2.5M228 227l2 2.5 1.5 2.5M225 231l-2.5 -2M227 230l-2 0.5 -2.5 1M232 212l-0.5 2.5 -0.5 2.5 -1 2.5 -0.5 2.5 -0.5 2.5 -1 2.5 -0.5 2.5 -1 2.5M227 214l-2 -2.5M225 214l-2.5 3M230 214l-2.5 0.5 -2.5 0 -3 0M229 220l-3 2M228 216l1 3.5 0.5 3.5M223 218l-1 -2M226 218l-2.5 0 -3 -0.5M225 223l-2.5 2M224 220l0.5 3.5 0.5 2.5M222 222l-4.5 -0.5M232 212l-2 2 -2 2 -1.5 2.5 -2 2 -2.5 2 -2.5 1.5M227 209l1 -3M226 207l-4 0M229 212l-2 -2.5 -1.5 -2.5 -2 -2.5M224 213l-3 -0.5M222 215l1.5 3.5M227 211l-2.5 2 -2 2 -2 2.5M222 209l1 -4M221 207l-3 0M224 211l-1.5 -2 -2 -2 -1.5 -2.5M218 212l-3 -0.5M221 211l-3 1.5 -3 2M218 207l1.5 -2.5M219 210l-1.5 -3 -0.5 -2.5M214 211l-3 0.5M216 210l-2 1.5 -2 2M212 207l2 -2.5M214 209l-1.5 -2.5 -1 -2.5M232 212l-3 -0.5 -2.5 0 -2.5 -0.5 -2.5 -0.5 -3 -0.5 -2.5 -0.5 -2.5 -0.5 -2.5 -0.5M230 207l3.5 -2M230 204l-1 -2.5M230 210l0 -3 0.5 -3 0 -3M225 209l-2.5 -3.5M222 209l-0.5 3M228 209l-3 0 -2.5 0 -2.5 0.5M225 204l2.5 -2.5M225 207l0 -3.5 -0.5 -3.5M220 206l-2 -2.5M223 206l-3.5 0 -3.5 0.5M221 202l2 -2M221 205l0 -3.5 0 -3M217 204l-3 -1M219 203l-2.5 1 -2.5 1M217 201l0 -4.5M232 212l-2.5 -2 -2 -1.5 -2 -1 -2.5 -1.5 -2 -1.5 -2 -1.5 -2 -1.5 -2 -2M234 207l2.5 1M235 205l-0.5 -2M232 209l1.5 -2 1.5 -1.5 2 -2M229 204l1 -3.5M232 206l-2.5 -2 -2.5 -3M234 202l3 0.5M232 204l2.5 -2.5 2.5 -2M230 199l0.5 -3M233 201l-3 -2 -2 -2M236 198l1 1M233 199l2.5 -1.5 2.5 -1M234 196l-3.5 -3.5M232 212l-0.5 -3 0.5 -2.5 0 -2.5 0.5 -3 0.5 -2.5 0.5 -2.5 1 -2.5M264 224l-3 1M264 226l2.5 1.5M264 221l-0.5 2.5 0 2.5 0 2.5M269 223l2.5 2.5M266 223l3 0 3 -0.5M268 228l-2.5 2M268 225l0 3.5 0 3M273 226l2.5 0.5M270 227l3 -0.5 2.5 -1.5M272 229l3 4M263 219l1.5 2 1.5 2.5 2 2 2 1.5 2.5 2 2.5 1.5M259 222l-3.5 0M257 224l0.5 2.5M262 221l-2.5 1.5 -2 1.5 -2 1.5M264 226l0 3M261 224l2.5 2 3 1M258 229l-3.5 0.5M260 227l-2 2 -2 2.5M263 231l1 1.5M261 230l2 0.5 2.5 0.5M261 235l-3 2M261 233l-0.5 2 -0.5 2.5M263 219l-1 2 -1 3 -0.5 3 0.5 3 0 2.5 1 3M257 219l-2 -2M260 220l-3 -1 -3.5 0M259 224l0 3.5M258 221l1 3.5 2 2.5M253 224l-2 -0.5M256 223l-2.5 1 -2.5 1M254 225l4 3.5M253 228l-3.5 2.5M263 219l-2.5 1 -2.5 1.5 -2 1.5 -1.5 2.5 -1.5 2.5 -0.5 2.5M259 215l0.5 -4.5M258 212l-3.5 0M260 218l-1 -3 -1 -2.5 -1.5 -2.5M256 220l-3.5 2M255 223l2 2M258 217l-1.5 3 -1.5 2.5 -0.5 3M252 214l-1 -3M255 217l-2.5 -2.5 -3 -2M252 221l-2 3M252 217l0 3.5 0 4M247 216l-2 -2.5M250 218l-3.5 -1.5 -3 -1M247 221l-1.5 2.5M247 219l0 2.5 0 2.5M242 219l-1.5 -2M245 220l-3 -1 -3 1M263 219l-2.5 -1 -3 -0.5 -2.5 -0.5 -2.5 0 -3 1 -2.5 0.5 -2.5 1 -2.5 1M263 213l3 -1M262 216l1 -3 0.5 -3M257 216l-3 -1M260 214l-3 1.5 -2.5 2M257 210l0 -2.5M258 213l-1 -3 -2 -2M256 211l-3.5 4M253 211l-2.5 -3M263 219l-1.5 -2.5 -1.5 -2 -2 -2 -2.5 -1 -2 -1 -3 0M266 215l4 -1M268 213l-1 -2.5M264 216l2 -1.5 2 -1.5 1.5 -2.5M262 212l0 -3.5M260 211l-3 1.5M264 214l-2 -2 -2 -1 -2.5 -1M266 208l3.5 -0.5M264 211l2.5 -2.5 1.5 -3.5M261 208l-2 -2.5M264 209l-3 -1.5 -3 0M265 204l3 -1M264 206l1.5 -2 1 -3M260 203l-1.5 -1.5M263 204l-2.5 -0.5 -3 0M262 201l0.5 -4M263 219l1 -3 0 -2.5 0 -2.5 0 -2.5 -0.5 -2.5 -0.5 -2.5 -0.5 -2 -1 -2.5M269 216l2.5 2.5M265 217l3.5 -0.5 3.5 -1.5M265 212l1.5 -2.5M267 215l-1.5 -3 -2 -3M271 212l3 0.5M268 213l3 -1.5 2.5 -1.5M267 208l-0.5 -2.5M269 210l-2 -1.5 -2.5 -1.5M269 208l3.5 -3.5M269 205l-4 -1.5M263 219l2 -2 1.5 -2 1.5 -2 0.5 -2.5 0.5 -2.5 0.5 -2.5 0 -2.5M268 221l0 4M270 223l3 -1.5M266 219l1.5 2.5 2 2 2.5 1.5M270 216l3 -1.5M268 219l2.5 -2.5 0.5 -3.5M274 222l0.5 3M271 219l3 3 3 1.5M275 216l2.5 -1M274 219l1 -3 0.5 -3M279 219l2 2M277 218l2 0.5 3 -0.5M279 214l1.5 -1.5M279 217l0 -3 -0.5 -2.5M263 219l2.5 0 3 0.5 3 0 2.5 -0.5 2.5 -1 2.5 -1 2.5 -1.5M320 221l-3 -2M323 221l-3.5 0.5 -3 1.5M323 226l-1.5 3M322 223l1 3 2 2.5M317 225l-2.5 -1.5M320 225l-3 0.5 -3.5 1M322 229l0 3M319 227l2.5 2.5 2.5 1.5M319 230l-3.5 3.5M319 232l3.5 3M325 219l-1.5 1.5 -2 2 -1 2.5 -1 2.5 -0.5 2.5 -0.5 2.5 0.5 2.5M320 217l0 -4.5M318 215l-4 1.5M322 219l-2 -2.5 -2 -1.5 -2.5 -1.5M319 222l-3.5 1M318 224l1.5 2.5M320 219l-1.5 2.5 -1 3 -1 2.5M315 219l0 -4M313 218l-2.5 1.5M317 220l-2 -1.5 -2 -0.5 -2.5 -0.5M315 225l-2.5 2.5M315 221l-0.5 3.5 0.5 3.5M309 221l-1.5 -2.5M312 222l-2.5 -0.5 -3.5 -0.5M311 226l-1.5 3M310 223l0.5 3 1 2.5M308 225l-4.5 0M325 219l-2.5 -0.5 -2.5 1 -2.5 0.5 -2.5 1 -2.5 1 -2 1.5 -2.5 1.5 -2 1.5M322 215l3 -2.5M322 212l-3.5 -1M323 217l-0.5 -2.5 -1 -2.5 -1 -2.5M319 218l-3.5 0M317 220l0 3M320 217l-1.5 1.5 -2 1.5 -1.5 2M316 213l0 -3M318 216l-2 -3 -2.5 -2.5M313 218l-2.5 -0.5M316 215l-2.5 2.5 -2 3M310 214l-0.5 -3M313 215l-2.5 -1.5 -3 -1M309 218l-2.5 0.5M311 216l-1.5 2 -1 2.5M308 216l-4.5 -1.5M325 219l-2 -1.5 -2.5 -1 -2.5 -0.5 -2.5 -0.5 -2.5 0 -2.5 0 -2.5 0.5 -2.5 0.5M327 214l3.5 -1M329 212l-1.5 -3M325 216l2 -2 1.5 -2.5 2 -2M322 212l-1.5 -3.5M319 210l-3 2.5M324 213l-2.5 -1 -2.5 -1.5 -2.5 -1.5M324 208l2.5 -1.5M325 206l-2.5 -1.5M323 211l1 -2.5 0.5 -2.5 0.5 -2.5M319 208l-2.5 -3.5M322 208l-3.5 -0.5 -3.5 0M322 203l2.5 -1.5M321 206l1 -3 1 -3M317 204l-2.5 -0.5M319 204l-2.5 0.5 -2 1M318 199l1.5 -2M318 202l-0.5 -2.5 -0.5 -2.5M325 219l-0.5 -3 -0.5 -2.5 -1 -2.5 -1 -2.5 -1 -2.5 -1.5 -2 -2 -2 -2 -2M331 217l2 1.5M327 217l3.5 0 3.5 -0.5M328 212l1.5 -2M329 215l-0.5 -2.5 -1 -3M333 212l2 0.5M330 213l3 -1.5 2.5 -1.5M330 209l0 -3M332 211l-2 -2.5 -2 -2M332 208l3.5 -2M325 219l2 -2 2 -2 1.5 -2 1 -2.5 1 -2.5 0.5 -2.5M330 220l1 3.5M333 221l3.5 -1.5M328 218l2.5 1.5 3 1.5 2.5 1M330 214l3 -2.5M330 212l-3 -1.5M330 217l0.5 -2.5 -0.5 -3 -0.5 -2.5M335 217l1.5 3.5M338 218l1.5 -2M333 216l2 1.5 3 0.5 2.5 1M335 212l1.5 -2.5M334 210l-3 -1M335 215l0 -2.5 -1 -2.5 -1 -2.5M341 213l2.5 2M338 213l3 0.5 3.5 -0.5M340 209l2 -2.5M340 212l0 -3 -0.5 -3M342 211l5 -0.5M325 219l2.5 -1 2.5 -1 3 -1 2 -1 2.5 -1.5 2.5 -1.5 2 -1.5 2.5 -1.5M328 223l-2.5 4M329 226l2.5 0M327 220l0.5 3.5 1 3 1.5 2.5M332 221l3.5 1.5M335 219l0 -2.5M329 222l3 -1 3 -1.5 2 -2M331 226l-2.5 2.5M331 229l3 1.5M332 223l-0.5 3 0 3 0 2.5M337 224l2.5 2.5M334 225l3.5 -0.5 3 -1M337 230l-1.5 3M336 227l1 2.5 1 3M341 226l3 0M338 228l3 -2 2.5 -2.5M341 228l4 3.5M325 219l2 1.5 2.5 1.5 2 1.5 2 1.5 2.5 1.5 2.5 1 2.5 1 2.5 0.5M325 224l-2 2.5M326 221l-1 3 0 3.5M330 224l2 2M327 223l3 1 3 0M328 228l-1.5 2M328 226l-0.5 2.5 0.5 2.5M329 228l5 -0.5M331 230l0 4.5M325 219l1 2 1 2.5 1 2.5 1.5 2 1.5 2 2 1.5M218 239l2 -3M219 241l-1 -2.5 -0.5 -3M214 242l-2.5 -1.5M217 240l-2.5 1.5 -2.5 1.5M214 239l-1.5 -4M212 238l-2.5 3.5M221 243l-2 -1.5 -2.5 -1 -2.5 -1 -2 -1.5 -2.5 -1M221 237l3 -0.5M220 240l1 -2.5 0.5 -3.5M215 238l-1.5 -1.5M218 238l-2.5 0 -3 0.5M216 236l0.5 -5M214 234l-3.5 0M221 243l-1 -2.5 -2 -2.5 -1.5 -2 -2 -2 -2 -2.5M226 241l3 2M223 241l3.5 0 3.5 -0.5M225 236l3 -1.5M225 240l0 -3.5 -0.5 -3.5M230 238l2.5 2M227 238l3 0 3 0M227 233l1 -2M228 236l-1 -2.5 -1 -2.5M232 234l2 1M230 234l2 -0.5 3 0M231 232l-3 -3.5M221 243l2 -1.5 2 -1.5 1.5 -2 2 -2 1 -2 1.5 -2.5 1 -2M226 244l0.5 3.5M224 242l2 2 2 2M227 239l2 -2M226 241l1 -2 0.5 -3M229 240l4 1.5M231 239l-0.5 -4M221 243l2.5 -0.5 3 -1 2 -1.5 2.5 -1.5 2.5 -1M222 248l-3 2.5M223 245l-1 3.5 -1 3M228 247l1 2.5M224 247l3.5 0 3.5 0M226 252l-2 2.5M226 249l0 3 0 3.5M228 251l4.5 -1M230 253l1 4.5M221 243l1.5 2 2 2 1.5 2 2 2.5 2 1.5 2 2M219 247l-3.5 -1.5M217 249l-1 2.5M221 246l-2 1 -2.5 1.5 -2 1.5M224 251l1 3M221 249l3 1.5 2.5 2M220 254l-3 0M222 252l-2 2 -1.5 2.5M225 256l0.5 2M222 254l3 1.5 2.5 1M223 257l-1 5M221 243l0 3 0.5 3 0.5 2.5 0.5 3 0.5 2.5 1.5 3M215 244l-0.5 -3M219 244l-3.5 -0.5 -3.5 0M216 248l-2.5 2M216 246l0 2.5 0 2.5M211 247l-1.5 -2.5M214 247l-3 -0.5 -2.5 0M211 249l1 4.5M221 243l-2.5 1.5 -2.5 1.5 -2.5 1.5 -2 1.5 -2.5 2M344 92l2.5 2.5M341 93l3 -1 3 0M342 88l2.5 -2M343 90l-0.5 -2.5 -0.5 -2.5M344 88l5 -1M346 85l-1 -3.5M340 95l1.5 -2.5 1 -2.5 1.5 -2.5 1.5 -2 1.5 -2.5M344 98l-1 3M343 95l1.5 3 1 3M346 92l3 -1M345 94l1.5 -2 1 -3M350 96l-1 3M348 94l1.5 2 1.5 2.5M350 93l4 -2.5M353 93l3 2.5M340 95l2.5 -0.5 2.5 0 3 -0.5 2.5 -0.5 2.5 -1 2.5 -0.5M341 100l-2.5 2M342 97l-1 3.5 -1 3.5M347 99l1.5 2.5M343 99l3.5 0 3.5 0M344 104l-2 0M345 101l-1 2.5 -1 2.5M349 103l1.5 2.5M346 103l3 0.5 2.5 0.5M348 105l-2 3.5M340 95l1.5 2 2 2 1.5 2 1.5 2 1.5 2 1.5 2.5M337 99l-2 -1.5M340 98l-3 1 -3 1M341 103l-1.5 2.5M339 101l2.5 2 2 2M339 104l-3.5 2.5M339 107l3.5 2M340 95l-0.5 3 0 3 0 2.5 -0.5 3 -0.5 3M335 94l-0.5 -3M338 96l-3.5 -1.5 -3 -2M334 100l-2.5 1M335 97l-1 3 -1.5 3M330 96l0.5 -3M333 98l-2.5 -2 -3 -2M330 101l-2.5 1M330 98l-0.5 3 -1 2.5M326 97l1 -2.5M328 99l-1.5 -2.5 -1.5 -2M325 99l-2.5 4M340 95l-2.5 1 -2 1 -2.5 0.5 -2.5 0.5 -2.5 1 -2.5 0.5 -2.5 0M336 91l1.5 -3.5M337 94l-1 -3.5 -2 -3.5M332 94l-3 -0.5M335 93l-3.5 1.5 -3 1M331 89l2.5 -1.5M332 92l-0.5 -3 -0.5 -3M329 91l-4.5 1M326 90l-1 -5M340 95l-2.5 -1 -3 -1 -2.5 -1 -3 -1 -2.5 -1.5 -2.5 -1.5M343 90l2.5 1M340 92l2.5 -1.5 3 -2.5M337 88l0 -3M340 90l-3 -1.5 -2.5 -2M343 87l1 1M340 87l2.5 -0.5 2.5 -1M341 85l-3.5 -3M341 83l5 -1.5M340 95l0 -2.5 0 -2.5 0 -2.5 0.5 -2.5 1 -2.5 0.5 -2.5M303 137l2.5 2M301 137l2.5 -0.5 2.5 -1M300 132l1.5 -2.5M302 135l-2 -3 -1 -2.5M305 131l2.5 1.5M302 132l3 -1 2.5 -0.5M303 129l-2 -2.5M300 140l0.5 -2.5 1 -3 1 -2.5 0.5 -2.5 1.5 -2.5M305 142l-1.5 3M303 140l2 2 1.5 2.5M306 136l2.5 0M306 139l0.5 -2.5 1 -2.5M308 139l3 3.5M311 138l3.5 -2.5M300 140l3 -0.5 2.5 -0.5 3 -0.5 3 -0.5 2.5 -0.5M302 144l-1.5 1.5M302 142l0.5 2.5 -0.5 2.5M304 144l4.5 1M306 147l-1 3.5M300 140l2 2 2 2.5 2 2 2 2.5M296 143l-2 -1.5M300 143l-3.5 0.5 -3.5 0.5M301 148l-1 2M299 145l2 2.5 2 2.5M296 149l-3 -1M298 148l-2 1 -3 1M298 153l-1 1.5M298 150l0.5 2.5 1 2.5M296 153l-4 -0.5M300 140l-0.5 2.5 -0.5 2.5 -0.5 3 -1 2.5 -1 2 -1.5 2.5M295 139l0.5 -2.5M297 141l-1.5 -2.5 -2 -2M294 141l-2.5 4M291 142l-2.5 -3M300 140l-3 0.5 -3 0.5 -3 0.5 -3 0.5M299 135l2.5 -1M298 138l0.5 -2.5 0.5 -3.5M293 137l-1 -3M296 137l-3 0 -3 -0.5M294 135l1 -4.5M292 134l-5 0.5M290 132l0.5 -4M300 140l-2 -1.5 -2 -1.5 -2 -2 -2 -1 -2 -2 -2 -1.5M342 154l-1 3M342 152l0.5 2.5 0.5 2.5M345 153l3.5 -0.5M347 155l1 3M340 150l2.5 1.5 2 2 2.5 1 2.5 1M338 155l-3 0.5M340 153l-2 2 -2 2.5M342 157l0.5 2.5M340 155l2 2 2.5 1.5M340 158l-1.5 4M341 161l4 1.5M340 150l0 2.5 0 3 0.5 2.5 0.5 2.5 1 3M335 150l-1 -2M337 151l-2 -1 -2.5 -0.5M334 153l0 4M332 154l-4 -2M340 150l-3 1.5 -2.5 1 -3 1.5 -2.5 1.5M337 146l1.5 -1.5M338 149l-1 -3 -0.5 -2.5M333 150l-2 -0.5M335 148l-1.5 1.5 -1.5 2M333 147l-2 -4M330 146l-3.5 2.5M340 150l-2.5 -1 -2.5 -1 -2.5 -1 -2.5 -1 -2 -1M341 146l2 -0.5M339 148l1.5 -2.5 1.5 -2.5M338 146l-5 -1.5M336 144l1.5 -4.5M334 142l-3.5 -1M340 150l-1 -2.5 -1.5 -2 -1.5 -2 -1.5 -2 -2 -1.5M344 146l2 1.5M341 147l3 -1 2.5 -1.5M339 142l-0.5 -2.5M341 144l-2 -2 -2 -2.5M343 140l3 0.5M341 141l2.5 -1.5 2 -1.5M341 138l-4 -0.5M340 150l1 -3 0 -3 0 -3 0 -3 0 -3M345 151l1.5 2.5M343 149l2.5 2 3 1M346 146l2 -0.5M345 149l1 -2.5 1 -2.5M348 148l4.5 2.5M351 148l0.5 -4M340 150l2.5 -0.5 3 -0.5 2.5 -0.5 2.5 -1 2.5 -0.5M83 297l1 2.5 -0.5 3.5M85 297l3 -1.5 3 0M88 300l-2 0.5M88 297l0 3 -1 2.5M90 298l3.5 -0.5 3 0.5M93 299l-1 3 -2 2M95 301l2 1 2 1.5M96 303l-1 2 -2 1.5M98 305l2.5 4M99 307l-3.5 2.5M100 310l2.5 3M80 297l2.5 -0.5 2.5 0 3 0.5 2 1 2.5 1.5 2 1.5 2 2 1.5 2 1 2.5 1 2.5 0 2.5M83 298l0 2.5 -0.5 3M85 298l3.5 0 3 0M88 299l-1 3 -2 2M90 300l3 0 2.5 1M93 302l-2.5 4M95 304l3.5 2M96 306l-3.5 3M98 308l1.5 4M98 311l-3 0.5M80 297l2.5 0.5 3 1 2.5 0.5 2.5 1.5 2 1.5 2 2 2 2 1 2.5 0.5 2.5 0.5 3M81 302l-2 -0.5M82 298l-1 3.5 -2.5 2.5M84 300l3 1.5 2.5 2M84 305l-1.5 -1M86 303l-1.5 2 -2.5 1.5M87 305l3 4M88 308l-2 1.5 -2.5 0.5M88 310l1 4.5M88 313l-5 0M87 316l1 3M87 318l-3.5 -1M80 297l2.5 1.5 1.5 2 2 2 1 2.5 1 2.5 0 3 0 2.5 -0.5 2.5 -1 3 -1 2.5M81 301l-2.5 0.5M82 299l-1.5 2.5 -1.5 2 -2 1.5M85 302l0.5 2M83 301l2.5 1 2 1.5 1.5 2.5M82 306l-2 -1M84 303l-2 3 -3.5 1.5M90 308l1.5 0.5M85 305l2.5 1.5 2 1.5 1.5 2M86 308l-2.5 1.5 -3 0.5M90 313l-1 1.5M87 310l3 2.5 1.5 3M88 312l-2.5 1.5 -3 0M91 317l-1.5 2M89 315l1.5 2 1 3M88 317l-2.5 1 -3 -0.5M87 320l1 2.5 -0.5 3M84 322l-1 -2M86 322l-2.5 0 -2 -1.5M85 324l-2.5 3.5M83 326l-2.5 -2.5M80 297l1.5 2 1.5 2 1 2 1.5 2.5 1 2 1 2.5 1 2.5 0 2.5 0 2.5 -1 2.5 -1 2 -1.5 2 -1.5 2 -2 1.5M77 301l-1 -2M80 300l-2.5 1 -3.5 0M81 305l-2 1M80 302l1 3 -0.5 3M76 304l-0.5 -2M79 304l-3 0 -2.5 -1.5M78 307l0 2.5 -1.5 2.5M76 309l-2.5 -1 -2 -2M74 310l-1 2.5 -2 1.5M72 311l-2.5 -4M70 312l-4 2M67 313l-1.5 -4M65 313l-3.5 1M80 297l0 2.5 0 2.5 -1 2.5 -1 2 -2 2 -2 1.5 -2 1.5 -2.5 0.5 -2.5 1 -2.5 0 -2.5 0M76 300l-1 -1.5M79 300l-3 0.5 -3.5 -1M79 305l-1.5 1M79 302l0.5 3.5 -1 3M75 304l0 -2.5M77 304l-2.5 -0.5 -2 -2M76 306l-1 3 -1.5 2M74 308l-2.5 -1 -2 -1.5M72 310l-1 2 -1.5 2M70 311l-1.5 -4.5M67 311l-4 2.5M64 312l1.5 -3.5M62 311l-3.5 0M80 297l-0.5 2.5 -1 2.5 -1 2.5 -1.5 2 -2 1.5 -2 1.5 -2.5 1.5 -2.5 0.5 -2.5 0 -2.5 0 -2.5 -1M76 298l0 -2M79 299l-3 -1 -2.5 -2.5M77 302l-0.5 2.5 -2.5 2.5M75 303l-2 -1 -1.5 -2M73 305l-1 2.5 -1.5 2M71 306l-1.5 -2 0 -2.5M68 307l-4 1.5M66 307l-0.5 -4M63 307l-4 0.5M60 307l1 -3.5M80 297l-1 2.5 -1.5 2 -2 2 -2 1.5 -2.5 1 -2.5 1 -3 0 -2.5 0 -2.5 0 -3 -0.5M78 299l-2.5 -1 -2 -2 -1.5 -2M75 305l0 2.5M76 300l0 3 -1 2.5 -1 2M71 301l0.5 -2.5M74 302l-2.5 -1.5 -2 -1.5 -1 -2.5M69 305l-2 -1M71 303l-2 2.5 -3 1.5M67 301l2 -1.5M69 304l-2 -3.5 -0.5 -3.5M66 304l-2 2 -2.5 1M64 304l-1 -3 0 -2.5M61 303l-2.5 0.5 -3 -1M59 302l1 -2 1.5 -2M57 301l-3 0 -2.5 -1M54 300l3.5 -4M52 298l-3.5 -2M80 297l-2 1.5 -2 2 -2 1 -2.5 1.5 -2.5 0.5 -2.5 0.5 -2.5 0 -3 -1 -2 -1 -2.5 -1 -2 -1.5 -2.5 -1.5 -2 -1.5M77 298l-2 -2.5 -1 -3M75 298l-2.5 2 -3 0.5M72 298l-0.5 -2.5 0.5 -3M69 298l-2 2 -2 0.5M67 297l0 -2 1.5 -2M64 296l-4 -1.5M62 294l3.5 -3M60 293l-3.5 -3M58 290l3.5 -1M80 297l-2.5 0.5 -3 0.5 -2.5 0.5 -3 0 -2.5 -1 -2 -1.5 -2.5 -1.5 -2 -2 -1.5 -2 -1.5 -2.5M77 294l2 -1M77 297l0 -3 -0.5 -2.5 1 -2.5M70 298l-1.5 1M75 296l-2.5 1 -2.5 0.5 -2.5 0M72 295l1 -3.5 2 -3M70 294l-3.5 -0.5 -2.5 -2M70 289l1.5 0.5M68 292l1.5 -3 3 -2M66 290l-2.5 -0.5 -2 -2M65 288l2 -2.5 2.5 -1M64 285l-2 -1.5 -1 -2.5M63 283l4.5 -1M62 280l-3 -3.5M62 278l3 -0.5M80 297l-2.5 -0.5 -3 -0.5 -2 -1 -2.5 -1.5 -2 -2 -1.5 -1.5 -1.5 -2.5 -1.5 -2.5 -1 -2.5 -0.5 -2.5 -0.5 -2.5 0.5 -2.5M79 293l2.5 0.5M78 295l1.5 -2.5 2.5 -1M76 293l-3.5 0 -2.5 -1.5M74 291l1 -2 2 -2.5M73 289l-3 -0.5 -2 -2M71 287l5 -1.5M71 284l-2.5 -4M70 281l4.5 1M71 279l1 -4M72 276l3 1.5M80 297l-2 -1.5 -2 -2 -2 -2 -1.5 -2.5 -1 -2.5 -1 -2.5 0 -2.5 0.5 -3 1 -2.5 1 -2.5M81 292l2 1M79 295l2 -3 3.5 -1.5M78 292l-3 -1.5 -2 -3M77 290l3 -1.5 3.5 0M77 287l-2 -2.5 -0.5 -3.5M76 285l3 -2 3 -0.5M74 279l1.5 -1.5M76 282l-1.5 -2.5 -1 -3M76 279l3 0 2.5 1M76 274l1.5 -1M77 277l-1 -2.5 0 -3M78 274l3.5 2.5M80 272l1.5 -3M81 270l3.5 3.5M80 297l-1 -2.5 -1.5 -2.5 -0.5 -2.5 -0.5 -2.5 0 -2.5 -0.5 -2.5 0.5 -3 0.5 -2.5 1 -2 1.5 -2.5 2 -1.5 2 -1.5M80 294l2.5 0 3 1M78 289l1.5 -1.5M80 292l-2 -2.5 0 -3.5M80 289l3 0.5 2.5 1M81 287l-0.5 -3 1 -2.5M82 284l4.5 2.5M83 282l2.5 -3.5M85 281l2 3M88 279l2.5 -2.5M90 278l1 3M80 297l0 -2.5 0 -2.5 0.5 -2.5 0.5 -2.5 1 -2.5 1.5 -2 2 -2 2 -1 2.5 -1.5 2.5 -0.5M80 294l3.5 0 3.5 0M81 292l-1.5 -3 -0.5 -3M82 290l3 0 2 1.5M84 288l0 -3 2 -2.5M86 286l2.5 4M88 285l3 -4M90 284l1.5 4M93 283l3 -1M95 284l-1 3M80 297l0.5 -2.5 0.5 -2.5 1 -2.5 2 -2 2 -1.5 2 -1.5 2.5 -1 2.5 0 2.5 0 2.5 0.5M84 296l-0.5 2.5M86 298l2 1.5M82 295l2 1.5 2 2 1 2.5M84 291l2.5 0M84 293l0 -2 1.5 -2.5 2 -1.5M86 292l2.5 2.5 1.5 3M88 291l2.5 -2.5 3 -1.5M92 294l-2 1M91 290l1 3.5 0 3.5M94 290l2 -2.5 3.5 -0.5M96 290l1 2.5 -0.5 3M99 289l2 -1.5 2.5 -0.5M102 290l-1.5 4.5M104 290l3 0.5 2.5 0.5M107 291l-3 4.5M109 293l3 2.5M80 297l2 -2 2 -1.5 2 -1.5 2.5 -1 2.5 -0.5 2.5 -0.5 3 -0.5 2.5 0 2.5 0 2.5 1 2.5 1 2.5 1.5 2 1.5M82 295l3 1.5 2.5 2.5M86 291l2 1.5M84 294l2 -3 2.5 -1.5M89 294l-0.5 2.5M86 293l2.5 1.5 2 2.5M89 292l1 -2.5 2.5 -1.5M91 291l1.5 2.5 0 2.5M94 291l2 -1 3 0M96 291l-0.5 4.5M99 291l4.5 0M101 292l-1.5 4M104 293l3 1.5M80 297l2 -2 2 -1 2.5 -1.5 2 -1 2.5 -0.5 2.5 0 3 0 2.5 0 2.5 1 2 1.5 2 1.5M119 307l3.5 3M122 307l1 -3.5M116 307l3 0.5 3 -0.5 2.5 -1M118 303l1.5 -3.5M118 300l-3.5 -2.5M118 305l-0.5 -2.5 0 -3 -0.5 -3M122 303l3 2.5M125 303l1.5 -2.5M120 303l2 0.5 3 0 2.5 -0.5M120 298l1 -3.5M121 301l-1 -3.5 -1.5 -3M126 298l2.5 1.5M123 299l3 -1 3 -1.5M123 294l0.5 -3M124 296l-1.5 -2 -2 -2.5M128 294l2 1.5M125 294l3 -0.5 2.5 -1M114 309l2 -1.5 2 -2 1.5 -2 1.5 -2.5 1.5 -2.5 1.5 -2 1 -2.5 1 -3M117 312l-1 2.5M118 314l3 -0.5M116 309l1 2.5 1.5 2.5 1.5 2M120 306l2.5 -1.5M119 309l1 -3 1 -3.5M124 310l2 2M121 309l3.5 1 3 0.5M124 305l2 -1.5M124 308l0 -3 0 -3M126 307l5 0.5M129 306l-0.5 -5M114 309l2 0.5 3 -0.5 2.5 -0.5 2.5 -0.5 2.5 -1 2 -1 2 -1.5M116 314l-2 3.5M116 316l3.5 1M116 311l-0.5 2.5 1 3 0.5 2.5M120 311l3 1M122 310l1 -3M118 313l2 -1.5 2 -1 2.5 -1.5M120 318l-3 2M120 314l0 4 0.5 3.5M125 314l3 0.5M122 315l3 -1.5 2 -2M126 319l-1 2.5M125 317l0.5 2.5 1 2.5M127 318l4.5 -3.5M114 309l1.5 2 2 1.5 2.5 1.5 2.5 1.5 2.5 1 2.5 1 2.5 1M112 314l-3 1.5M114 312l-2.5 2.5 -2 3M118 315l1 2.5M115 314l2.5 1 3 0.5M115 319l-2 1.5M116 316l-1 3 -0.5 2.5M117 319l5 -0.5M119 320l1 5M114 309l0 2.5 0.5 2.5 1 2.5 1.5 2 2 2 2 1.5M109 311l-2 -3M107 311l-1.5 2.5M112 311l-3 0 -2.5 0 -2 1M111 316l-2.5 3M110 313l1 3.5 1 3.5M106 317l-3 -0.5M109 315l-3 2 -3 1.5M110 320l-1 2.5M108 318l1.5 2 2.5 1.5M104 322l-2.5 -1M106 320l-1.5 1.5 -2 2M105 323l3.5 3M114 309l-2 2 -2 2 -1 2.5 -1.5 2 -1 2.5 -1 2.5 -0.5 2.5M109 307l0 -3.5M107 305l-2.5 0.5M111 309l-1.5 -2.5 -2 -2 -2 -1.5M106 312l-2 1M108 308l-1.5 3.5 -1.5 3.5M102 307l-1 -2.5M105 309l-2.5 -2 -3.5 -0.5M102 312l-3.5 1M103 309l-1.5 3 0 3M97 309l-0.5 -2.5M100 310l-2.5 -1 -3 0M98 311l0 4.5M114 309l-3 -0.5 -3 0 -2.5 0 -3 1 -2.5 0.5 -2.5 1 -2.5 1.5M111 305l2 -3.5M110 302l-3 -0.5M111 307l-0.5 -2.5 -1 -2.5 -1 -2.5M107 308l-3.5 -2.5M105 309l0.5 3.5M109 306l-2 1.5 -2.5 2 -2 1.5M106 303l1.5 -4M104 300l-3 0M107 305l-1.5 -2.5 -1 -2.5 -1.5 -2M102 307l-3 1M104 304l-2 3 -2 3M100 301l-0.5 -4M102 303l-2.5 -2.5 -2 -2M98 306l-3.5 0.5M99 303l-1.5 2.5 -1 3M95 300l-0.5 -2.5M96 303l-1 -2.5 -2 -2M114 309l-2.5 -1.5 -2.5 -1.5 -2.5 -1 -2.5 -1 -2.5 -0.5 -2.5 -0.5 -2.5 -0.5 -2.5 -0.5M115 304l4.5 -0.5M117 302l-1 -3.5M113 306l2.5 -2 1.5 -2 2 -2.5M111 302l0 -4M109 301l-2.5 2M113 304l-2 -2 -2 -1 -2.5 -1M114 300l3.5 0M115 297l-1 -2M112 301l2 -1.5 1.5 -2 1 -2.5M108 299l-2.5 -2M111 299l-3 0 -3.5 0.5M110 293l3 -1.5M110 297l0.5 -3.5 -0.5 -3.5M106 295l-2.5 -0.5M109 294l-3 1.5 -2.5 1M107 292l1 -4M114 309l-0.5 -2.5 -0.5 -2.5 -0.5 -2.5 -1 -2.5 -1.5 -2.5 -1 -2 -1.5 -2 -2 -2M153 300l1 3.5M155 301l3.5 -1.5M150 300l2.5 0.5 3 0.5 2.5 1M152 296l3.5 -1M153 293l0 -2.5M152 298l0 -2.5 1 -2 1.5 -2.5M156 298l-2 3.5M158 300l2.5 0M154 297l2 1.5 1.5 1.5 2 2M158 292l3 0M156 295l2 -3 2 -3M161 296l-1 2.5M159 294l2 2.5 1.5 2.5M163 291l2.5 -0.5M161 293l1.5 -2 2 -2.5M165 295l-1 2.5M164 293l1 2 1.5 2M148 302l1.5 -2 2 -1.5 2.5 -2 2 -1 2.5 -1 2.5 -1 2.5 -1 2.5 -0.5M152 304l-2 3.5M154 306l2.5 2.5M151 302l1.5 2 1.5 2.5 1 2.5M155 300l3.5 1.5M157 298l0 -3M153 302l2 -2 2 -2 2.5 -1M158 304l-1.5 3.5M156 301l2 3.5 1.5 3M161 299l2.5 2M158 301l3 -1.5 3 -1.5M162 304l-0.5 2.5M161 302l1.5 2 1 2.5M165 300l2.5 0M163 302l2 -2 2.5 -1.5M166 305l-2.5 1.5M166 303l0 2 0 3M148 302l2.5 0 2.5 -0.5 2.5 0 2.5 0 2.5 0 2.5 0.5 2.5 0.5 2.5 1M150 306l-4 1.5M149 309l3 3M150 303l0 3.5 -0.5 3 -0.5 3M155 305l1 3M157 306l2.5 -1.5M152 305l2.5 0 2.5 0.5 2.5 1M153 309l-3.5 0.5M152 312l0 2.5M154 307l-1 2.5 -1 2.5 -1.5 2M158 310l1 3M155 309l3 1 3 1.5M153 314l-2.5 -1M156 312l-3 1.5 -2.5 1.5M159 316l-1 3M156 314l2.5 2 2 2M157 316l-3.5 3.5M148 302l2 1.5 2 1.5 1.5 2 1.5 2 0.5 2.5 1 2.5 0.5 2.5 0.5 2.5M147 307l-4.5 0M145 309l-1 3.5M149 305l-2 2 -2 2.5 -2.5 1.5M150 309l-0.5 3.5M152 311l3 1M149 307l1.5 2 1.5 2 1.5 2.5M146 311l-3 -2M144 312l-1.5 2.5M149 310l-2.5 0.5 -2.5 1 -2.5 0.5M150 315l-1.5 3M148 312l2 3.5 1 3M145 315l-2.5 -3M148 315l-3.5 0 -3 -0.5M148 320l-1.5 1.5M147 317l1 2.5 1 2.5M146 320l-5 -1M148 302l0.5 2.5 0 2.5 0 2.5 0 3 -1 2.5 -0.5 2 -1 2.5 -1 2.5M143 303l-1 -3.5M140 303l-2 0.5M146 304l-3 -0.5 -2.5 -1 -2.5 -1.5M143 309l-3 1M143 311l1 3M144 306l-0.5 2.5 -1 3 -1.5 2.5M139 306l1.5 -3.5M138 304l-3.5 0.5M142 307l-2.5 -1 -2 -2 -1.5 -2M139 312l-3 1M140 309l-1.5 3 -1.5 3.5M134 308l1.5 -2.5M137 310l-2.5 -2 -2.5 -2.5M134 314l-3 0.5M135 311l-1 3 -2 2M132 312l-1.5 -4.5M148 302l-2 2 -2 2 -2 1.5 -2.5 1 -2.5 1.5 -2 1.5 -3 0.5 -2.5 0.5M142 300l1.5 -3.5M145 302l-2.5 -2 -2 -3.5M140 304l-3 -0.5M143 302l-3 2 -2.5 1.5M139 298l2.5 -1.5M140 301l-0.5 -2.5 0 -3M137 300l-5 0.5M135 299l2 -4M148 302l-2.5 0.5 -3 -0.5 -2.5 -0.5 -3 -1 -2 -1.5 -2.5 -1.5M146 297l4 0M147 295l-2 -3M146 300l0 -2.5 0.5 -3 1.5 -2.5M141 298l-2.5 -2.5M138 298l-2 1M144 298l-3 0.5 -2.5 -0.5 -3 -1.5M144 294l2.5 -0.5M145 292l0 -3M142 296l1.5 -2.5 1.5 -1.5 2 -1.5M138 292l-1 -2.5M141 293l-3.5 -1 -2.5 -2M142 288l3 1.5M140 290l2 -2 2 -1.5M138 286l1.5 -3M140 288l-1.5 -2.5 -1.5 -2M148 302l-2.5 -1.5 -2 -2.5 -1.5 -2 -1 -2.5 -0.5 -3 0 -3 0.5 -2.5M149 297l4 0.5M151 294l0 -3.5M148 299l1 -2 2 -2.5 2.5 -2M145 295l1 -4M143 293l-2.5 0.5M147 297l-2 -2 -2 -2 -1.5 -2.5M150 292l2 3M153 292l1 -3M147 294l3 -1.5 2.5 -1 2.5 -0.5M146 288l3 -2.5M148 291l-2 -3 -0.5 -4M152 288l1 2.5M149 289l2.5 -1 3.5 0.5M150 283l2.5 -1M150 286l0 -2.5 0.5 -3M154 284l1 2.5M151 284l3 0 2 1.5M148 302l-0.5 -2.5 -0.5 -3 0.5 -2.5 0 -3 1 -2.5 1.5 -2.5 1 -2 2 -2.5M195 313l1.5 3.5M198 314l2 -2.5M193 312l2 1.5 2.5 0.5 2.5 1M197 308l2.5 -2.5M195 311l1.5 -3 0.5 -3.5M201 312l2.5 1.5M198 311l3 0.5 3.5 0M200 306l1.5 -2.5M200 309l0 -2.5 -0.5 -3.5M205 309l2.5 1M202 308l3.5 0.5 3 -0.5M204 306l-3 -3.5M190 312l2.5 0 3 -0.5 2.5 -1 2.5 -1 2 -1.5 2 -2 1.5 -2M192 317l-2 3.5M193 320l4 0.5M192 314l0.5 3.5 1 2.5 1.5 3M196 314l3.5 -0.5M198 312l0 -2.5M194 316l2 -1.5 2.5 -2 1.5 -2M196 321l-0.5 4M196 318l0.5 3.5 1 3.5M201 316l2.5 -1.5M199 319l2 -3 1.5 -3M204 321l1 3M201 319l2.5 2 3.5 0.5M206 317l2.5 0M204 320l1.5 -2.5 1.5 -2.5M209 321l0.5 2M206 319l2.5 1.5 2.5 0.5M190 312l2 2.5 2 1.5 2 1.5 2.5 1 2.5 0.5 3 0.5 2.5 -0.5 2.5 -0.5M188 318l-3 1.5M187 320l3 2.5M190 315l-2 2.5 -1 3 -0.5 3M193 319l2 2.5M195 320l2.5 -2M190 318l3 1 2.5 0.5 2.5 0.5M191 323l-3.5 2M191 326l3 0.5M191 320l0 3 0 2.5 0.5 2.5M196 323l3.5 1.5M193 323l3 0 3.5 -1M195 328l-1 3M194 325l0.5 3.5 1.5 3M199 326l2 1M196 327l2.5 -1 2.5 -2M199 331l0 3M198 329l1 2 1.5 2M190 312l0 3 0.5 3 1 2.5 1.5 2.5 1 2 2 2 2 2 2.5 1M186 316l-3.5 -1M184 318l1 3M189 315l-3 1 -2 2 -2.5 2M189 319l0 3.5M191 321l2.5 -1.5M187 317l2 2 1.5 2 2.5 1.5M184 320l-3.5 -1M182 322l0.5 3M186 319l-2 1.5 -2 1.5 -1.5 2M189 324l1 4M186 322l3 2 3.5 1.5M184 327l-3 1M186 325l-2 2 -2 3M189 328l1.5 2.5M186 327l3 1.5 2.5 0.5M187 330l-1.5 4.5M190 312l-1.5 2.5 -1 2.5 -1 2.5 -0.5 2.5 0 2.5 0.5 2.5 0 2.5 1 2.5M184 312l-2.5 -3.5M181 312l-2 3.5M187 313l-3 -1 -3 0 -3 1M185 317l-2.5 3M186 320l3 -0.5M185 314l0 3 0.5 2.5 1 3M180 315l-2.5 -2M178 315l-1.5 3.5M183 316l-3 -1 -2.5 0.5 -2.5 0.5M182 321l0 2.5M181 317l1 3.5 2.5 3M176 320l-3 0M179 319l-3.5 1.5 -2.5 2M178 324l0 3.5M177 322l1 2.5 2 2M176 324l-4 3M190 312l-2.5 1 -2.5 1 -2.5 1.5 -2 2 -2 2 -1.5 2 -1 2.5 -1.5 2.5M187 308l0.5 -4.5M185 305l-3.5 1M188 311l-1 -3 -2 -2.5 -2.5 -2M183 311l-4 0.5M181 313l0.5 3M185 310l-2 1.5 -2 1.5 -2 2M181 307l0 -3M179 305l-2.5 1M183 309l-1.5 -2 -2 -2 -2 -1M178 311l-4 -0.5M180 308l-2 3 -1.5 3M176 305l-0.5 -2M178 308l-2 -2.5 -2.5 -2M173 311l-2.5 1.5M175 308l-1.5 2.5 -1 3M172 308l-4.5 -1.5M190 312l-2.5 -1 -2 -1 -2.5 -1 -3 -0.5 -2.5 -0.5 -2.5 -0.5 -3 0.5 -2.5 0.5M191 306l2 -1.5M190 310l0.5 -3.5 0 -3.5M186 307l-2 -2.5M189 307l-3.5 -0.5 -3 1M188 302l3 -1.5M188 305l0 -3 -0.5 -2.5M186 303l-3.5 2M185 300l-1 -3.5M190 312l-0.5 -2 -0.5 -2.5 -1 -2.5 -1.5 -2.5 -1.5 -2 -2.5 -1.5M195 310l3.5 2M198 310l1 -2.5M192 310l2.5 0 3 -0.5 2.5 -1M192 306l0.5 -3.5M190 304l-2 1.5M193 308l-1 -2 -2 -1.5 -2 -1.5M198 304l3.5 1M195 306l3.5 -1.5 2.5 -2.5M195 301l1 -3M196 303l-1 -2.5 -1.5 -2.5M199 299l2.5 -1.5M197 301l2 -2.5 1 -2.5M198 298l-5 -2M190 312l2 -1.5 1.5 -2.5 1.5 -2.5 1 -2.5 1 -2.5 0.5 -2.5 0 -3M128 329l2.5 -2.5M127 327l-3.5 -1M126 324l2 -2M128 332l-0.5 -2.5 -0.5 -2.5 -1 -2.5 0 -2.5M123 333l-4.5 -1.5M121 335l-1.5 3M126 331l-2.5 2 -3 1.5 -2.5 2M123 326l3 -2.5M123 323l-3.5 -0.5M123 329l0 -2.5 -0.5 -3 -0.5 -3M119 330l-4.5 0M117 332l0 3M121 328l-2.5 2 -2 2 -2 2M118 323l3 -2.5M118 327l0.5 -3.5 -0.5 -4M113 327l-3 -1M116 326l-3 1 -3.5 1M113 321l1 -3M114 324l-1.5 -3 -1 -3.5M108 324l-2.5 -1.5M111 323l-3 1 -3 1M131 333l-2.5 -1 -2.5 -1.5 -2.5 -1 -2.5 -1 -2.5 -1.5 -2.5 -1.5 -2.5 -1.5 -2.5 -1 -2.5 -1M131 328l4.5 -1.5M132 325l-1.5 -3.5M130 331l1 -3.5 1 -3 1 -3M126 327l-1 -3M123 326l-3 1M129 328l-3 -1 -2.5 -1 -3 -1M130 324l4 1M132 322l-1 -3.5M128 326l2 -2.5 2 -2 2 -2M125 322l0 -3.5M123 320l-2.5 1.5M128 323l-2.5 -1 -2.5 -2 -2 -2M128 318l2.5 -1.5M127 321l0.5 -3.5 1.5 -3M123 317l0 -3.5M126 319l-2.5 -2.5 -3 -2M128 314l1.5 0.5M126 316l1.5 -2 2 -2M122 313l-1.5 -2.5M125 314l-3 -1 -2.5 -0.5M131 333l-1 -2.5 -1 -2.5 -0.5 -2 -1 -2.5 -1 -2.5 -0.5 -2.5 -0.5 -2.5 -0.5 -2.5 -0.5 -2.5M135 329l3 2M137 328l1 -3M132 331l2.5 -1.5 3 -1.5 2.5 -1M131 326l1 -4M129 324l-3 0M133 328l-2 -2 -2 -2 -2 -2M136 324l3 2M133 326l3.5 -2 3 -1M132 320l2 -2M134 323l-2 -2.5 -1.5 -2.5M137 319l2.5 0.5M134 321l3 -2 2.5 -1.5M134 316l1 -3M135 318l-1 -2.5 -1.5 -2.5M138 315l3 1M136 316l2.5 -1 2.5 -1M131 333l1 -2.5 0.5 -2.5 1 -2.5 0.5 -2.5 0.5 -2.5 0.5 -2 1 -2.5 1 -2.5M136 334l0 3.5M133 332l3.5 2 2.5 3M138 328l3 0.5M136 331l2 -2.5 2 -3M141 332l0 3.5M138 330l3 2 3 2.5M143 327l2.5 0M141 330l1.5 -3 2 -2.5M145 331l0 2.5M144 329l1 2.5 1.5 2M146 329l4 -3M131 333l2.5 -1 2.5 -1 2.5 -0.5 2.5 -1 2.5 0 2.5 -0.5 3 -0.5M135 337l-3 3M135 340l3.5 0.5M134 334l0.5 2.5 0.5 3 1 3M139 332l3.5 1.5M141 331l0 -4M136 334l3 -1.5 2.5 -2 2.5 -1.5M140 337l-3 3M141 340l2.5 1M139 335l1 2.5 0.5 2.5 0.5 2.5M145 334l2.5 1M142 335l3 -1 3 -1.5M145 339l-2 2.5M144 336l0.5 3.5 1 3M149 335l2.5 0M147 337l2 -2 2 -1.5M149 338l2 4.5M131 333l2.5 0.5 3 0.5 2.5 0.5 2.5 1 3 0.5 2.5 1 2.5 1 2.5 1M132 338l-4.5 1.5M132 340l2.5 3M132 343l-3 1M133 335l-0.5 2.5 -0.5 2.5 -0.5 2.5 0 2.5M138 337l2 3.5M141 337l2.5 -2M134 337l3.5 0.5 3.5 -0.5 3 0.5M134 342l-4 0M133 345l1 2.5M136 340l-2 2 -1.5 2.5 -1.5 2.5M139 343l1.5 3.5M142 343l2 -2M137 342l2.5 0.5 2.5 0 2.5 0.5M137 348l-3.5 0M138 345l-1.5 3 -1 3M143 348l1 2.5M139 347l3.5 1 3.5 0.5M139 352l-2 0.5M140 349l-0.5 3.5 -1.5 2.5M144 353l1.5 2.5M142 352l2.5 1 2.5 1M131 333l2 2 1.5 2.5 1 2 1.5 2.5 1 2.5 1.5 2.5 1 2.5 1.5 2.5 1 2M129 337l-4 -3M126 338l-1 4M124 338l-3 -1.5M131 335l-2 1.5 -2.5 1 -2.5 1 -2.5 0.5M134 340l-1.5 4.5M136 342l4.5 0M131 338l3 2 2.5 2.5 2.5 1.5M129 343l-4 -0.5M127 345l0.5 3M132 340l-2.5 2.5 -2.5 2 -2.5 2M135 344l1 4.5M138 346l3 -1.5M132 343l3 1.5 2.5 1.5 2.5 1.5M130 347l-2.5 -1.5M128 349l0.5 3M133 345l-2.5 2 -2.5 1.5 -2.5 1.5M135 350l0 3M137 351l3 -1M133 348l2 1.5 2 2 1.5 1.5M130 352l-3.5 -1.5M133 350l-3.5 2.5 -3 1.5M135 355l-1 3M133 353l2 2.5 2 2.5M129 356l-1.5 -1M132 355l-2.5 1 -3 0.5M131 333l0 2.5 0.5 2.5 0.5 2.5 0.5 2.5 0 2.5 0.5 2.5 0 2.5 -0.5 2.5 -0.5 2.5 0 2.5M126 335l-1.5 -4M123 335l-3 2.5M129 335l-3 0 -3 0 -3.5 0M128 340l-3 3.5M128 343l3 2M128 337l0 3 0 3 0 3.5M123 340l-2 -3M121 340l-1.5 3M126 339l-2.5 1 -3 0.5 -2.5 0.5M125 344l-2.5 2M126 346l2.5 2.5M125 341l0 3 0.5 2.5 0.5 2.5M120 343l-2 -2M123 343l-3 0.5 -3.5 -0.5M123 349l-2 2.5M122 346l0.5 3 1 3M117 347l-1 -2M120 348l-3 -1 -3 -0.5M119 352l-1.5 2M118 350l1 2 0.5 2.5M131 333l-1.5 2 -2 2 -1.5 2 -1.5 2 -1 2.5 -2 2 -1.5 2 -1.5 2 -2 1.5M126 331l1 -3.5M124 330l-2 -1M128 333l-1.5 -1.5 -2 -2 -2 -2M124 336l-3.5 1M123 338l1 2.5M125 334l-1 2 -1 2 -1.5 2M120 332l-0.5 -3M123 334l-3 -2 -3 -2.5M119 337l-3 1M120 335l-1 2.5 -1.5 2.5M115 333l0.5 -4M117 335l-1.5 -2.5 -2 -2.5M113 337l-2.5 0.5M114 335l-1 2.5 -1.5 2M131 333l-3 0.5 -2.5 0.5 -3 0.5 -2.5 0.5 -3 0 -2.5 0.5 -3 0.5M63 383l-2 -3.5M60 384l-3.5 2M58 384l-1 -4M55 383l-3.5 0M52 383l1 -3.5M50 381l-2 -0.5M65 382l-2.5 1 -2.5 1 -2.5 0 -2.5 -0.5 -2.5 -1 -2.5 -1 -2 -1.5M62 379l2 -1.5M62 381l0.5 -2.5 1 -2.5M60 380l-2.5 0.5 -3 -1M59 377l1.5 -0.5M58 379l0.5 -2.5 2 -2M56 377l-4.5 -2M54 375l4 -1.5M53 373l-2 -2.5M52 371l4 -0.5M52 368l-1.5 -3.5M65 382l-2.5 -0.5 -2.5 -1 -2 -1.5 -2 -1.5 -1.5 -2 -1.5 -2.5 -0.5 -2.5 -0.5 -2.5 0 -2.5M63 380l2 -2.5 3 -1.5M62 378l-2.5 -1.5 -2 -2.5M60 376l2.5 -2 2.5 -0.5M59 374l-2.5 -4M58 371l2.5 -1.5 2.5 -0.5M58 369l-1.5 -4M58 366l3 -0.5M58 364l-0.5 -4.5M58 361l3.5 1.5M65 382l-2 -1.5 -1.5 -2.5 -1 -2 -1.5 -2.5 -0.5 -2.5 -0.5 -2.5 -0.5 -2.5 0.5 -2.5 0 -2.5 1 -2.5M64 380l4.5 -2.5M63 377l-0.5 -4M64 374l3.5 0M64 372l0 -3.5M65 370l3 1M67 367l1 -2M65 382l-1 -2.5 -0.5 -2.5 0 -2.5 1 -2.5 1 -2.5 1.5 -2 2 -1.5M66 379l4 2.5M67 377l1.5 -4.5M71 376l0.5 2.5M69 375l2.5 1.5 1.5 1.5M71 373l2.5 -3.5M74 372l1.5 3.5M76 371l3 -1M79 371l0.5 3M65 382l1 -2.5 1.5 -2.5 1.5 -2 2 -1.5 2.5 -1.5 2.5 -0.5 3 -0.5 2.5 0M67 380l2.5 3M68 378l2.5 -3.5M71 377l0.5 3.5M73 376l2.5 -3M76 375l0 3.5M78 375l3 -1M65 382l1.5 -2 2 -2 2 -1.5 2.5 -1 2.5 -0.5 3 0 2.5 0M67 381l2 3 0.5 2.5M70 381l1.5 -2 2.5 -1.5M72 381l0.5 4M75 381l4.5 0.5M77 382l-0.5 3M80 382l3.5 2M82 384l-2.5 2M84 386l1.5 2M65 382l2.5 -0.5 2.5 -0.5 2.5 0 2.5 0 2.5 0.5 2.5 1 2 1.5 1.5 2 1.5 2M68 382l-1.5 5M70 383l2.5 -1.5 2.5 0M72 383l0 5M75 384l3.5 1M77 386l-2 2.5M79 387l3 1M81 389l-2 2M65 382l2.5 0 2.5 0.5 2.5 1 2.5 1 2 1 2 1.5 2 2 1 2.5M66 386l-2.5 -1M67 384l-1.5 2 -2 1.5M69 385l2.5 1.5 2.5 1.5M70 388l-2 1 -2.5 0.5M71 390l3.5 3M72 392l-4 2.5M73 395l1.5 3.5M73 397l-4 1.5M73 400l0.5 3M65 382l2 1.5 2 2 1 2 1.5 2.5 0.5 2.5 0.5 2.5 0.5 2.5 -0.5 2.5 -0.5 2.5M66 384l-4 1.5M67 387l1.5 4.5M67 389l-4.5 0M67 392l0.5 3.5M66 394l-3 -1M65 396l-1 4M63 398l-2 -1.5M65 382l1 2 1 2.5 0 2.5 -0.5 2.5 -0.5 2.5 -1 2.5 -1.5 1.5 -2 1.5M65 384l-3.5 1 -3 -1M65 390l-2.5 0.5M64 387l0.5 2.5 0 2.5M63 389l-2.5 -0.5 -2.5 -1.5M61 391l-2.5 3.5M60 393l-3 -3.5M58 395l-2 3.5M56 396l-3 -3.5M53 397l-3.5 1.5M51 397l-1 -4M65 382l-0.5 2.5 -0.5 2.5 -1 2 -1.5 2 -2 2 -1.5 1.5 -2.5 1 -2.5 1 -2.5 0 -2.5 0M63 384l-2 0 -2.5 -1.5M61 386l-2.5 4M59 388l-2 -3.5M57 389l-3 3M55 390l-2 -2.5M52 391l-3 2M49 391l0 -3M65 382l-1.5 2 -2 2 -2 1.5 -2.5 1.5 -2.5 1.5 -2.5 0.5 -2.5 0 -3 -0.5M98 398l3.5 0.5M99 395l-1 -3.5M96 400l1.5 -2.5 1.5 -2.5 1.5 -2M93 395l-1 -3.5M95 397l-2.5 -2.5 -2.5 -2M97 392l3 0M95 394l2.5 -2 2 -2M92 390l-1 -2.5M94 392l-2.5 -1.5 -3 -1M96 387l2.5 2M94 389l2.5 -1.5 2 -1.5M91 386l-1 -3M94 386l-3 -0.5 -2.5 -0.5M96 403l-0.5 -3 0 -3 -0.5 -2.5 -0.5 -3 -0.5 -2.5 -0.5 -3 -1 -2.5M101 401l2.5 3M98 401l3.5 0.5 3.5 0M100 396l1.5 -2M100 399l0 -3 -1 -3M105 397l1.5 2.5M102 397l3 0 2.5 0M104 395l-0.5 -5M106 393l4 0M96 403l2 -2.5 2 -1.5 2 -2 2 -2 2 -2 1.5 -2.5M101 403l0.5 3.5M103 404l2.5 -1M99 402l1.5 1 2.5 1.5 2 1.5M103 399l3 0M104 397l-1 -2.5M101 401l2 -2 1.5 -2 1.5 -2.5M106 403l0 3M104 400l2.5 3 2.5 2M108 397l2.5 -2M107 400l0.5 -3 1 -3M111 402l-0.5 2.5M109 399l2 2.5 2.5 2M112 399l1.5 -4.5M96 403l2.5 -1.5 2.5 -0.5 3 -0.5 2.5 -0.5 2.5 -0.5 3 -0.5 2.5 -0.5M98 407l-1.5 3M99 410l2.5 1M98 404l0.5 3 0.5 2.5 0 3M104 405l2.5 1.5M100 406l3.5 -1.5 3.5 -1M103 411l-2 3M102 408l1 3 0.5 3.5M107 409l3 1M105 410l2.5 -1 3 -1M107 414l-2 1.5M107 411l-0.5 3 0 3M109 413l4.5 -0.5M96 403l2 1.5 2.5 1.5 2 2 2 1.5 2 2 2 2 1.5 2M93 407l-2.5 -0.5M96 405l-3 2.5 -2.5 2M98 409l0 3.5M96 408l2 1.5 2 2M93 412l-2.5 -1M95 410l-2 2 -2.5 2M95 413l4 2.5M94 416l-3.5 2M96 403l-0.5 2 0 3 0 2.5 -0.5 2.5 -1 2.5 -0.5 2.5M91 405l-3 -3M94 405l-3 0 -3.5 0M94 410l-0.5 2.5M93 407l1.5 3 2 2.5M88 409l-1 -1.5M91 409l-2.5 0 -3 0M90 414l-1.5 1.5M90 412l0 2 0.5 3M88 414l-5 -0.5M96 403l-1.5 2 -1.5 2 -2 2.5 -1.5 2 -1.5 2 -1.5 2.5M91 400l2 -3M93 403l-2 -3 -2 -2.5M89 406l-2.5 1.5M91 404l-1.5 2.5 -1.5 3M86 402l0 -2.5M88 404l-2 -1.5 -2.5 -2M84 407l-2 0M85 405l-1 2 -1.5 2M83 405l-4 -1.5M96 403l-2.5 0 -3 0.5 -2.5 0.5 -2.5 0.5 -3 1 -2.5 0.5M93 398l2.5 -2.5M94 401l-0.5 -3.5 0 -3.5M89 401l-2 -1M92 400l-3 1.5 -2 1.5M89 396l1.5 -2M89 398l0 -2.5 0 -2.5M87 397l-4.5 1M85 396l-2 -4M96 403l-2 -2 -2.5 -1 -2 -1.5 -2.5 -1.5 -2.5 -1 -2 -1M60 431l-2.5 -3.5M63 432l-3.5 -1 -3.5 -1M61 437l-2.5 2M61 433l0 4 -1 3.5M56 434l-1.5 -2.5M59 435l-3 -1 -3.5 -0.5M57 440l-2 1.5M57 437l0.5 2.5 0 3M55 438l-4 -0.5M54 440l0.5 4.5M65 430l-2 1.5 -1.5 2 -2 1.5 -2 1.5 -2 1.5 -2 2 -1.5 1.5M61 427l1.5 -1.5M62 430l-1 -2.5 -1.5 -2.5M58 432l-2.5 0M60 430l-1.5 2 -1.5 2M57 430l-3 -3M54 430l-1.5 3.5M65 430l-2.5 0 -3 0 -2.5 0 -2.5 -0.5 -3 0M64 425l2.5 -1M63 428l1 -3 0 -3M60 425l-1.5 -2.5M62 425l-2.5 0 -2.5 -0.5M61 423l1 -4M59 421l-4.5 1M65 430l-1.5 -2 -1.5 -2.5 -1.5 -2 -2 -2 -2 -2M68 425l4 1M66 427l2.5 -1.5 2.5 -2M65 422l0.5 -2.5M66 424l-1 -2 -1.5 -2.5M70 420l2 0.5M67 421l2.5 -0.5 2.5 -1.5M68 418l-2.5 -2.5M65 430l0.5 -3 1 -3 1 -2.5 0.5 -3 1 -3M70 430l1 3M68 429l2 1 3 1.5M71 424l2.5 -1M70 427l1 -2.5 1 -2.5M73 426l4.5 0.5M75 425l0 -4.5M65 430l2.5 -1 2.5 -1.5 2.5 -1.5 2.5 -1.5 2.5 -1.5M68 435l-2.5 3M67 431l1 4 1 3.5M72 430l4 0M70 432l2.5 -2 2.5 -2.5M73 436l-1.5 3M72 433l1.5 3 1.5 3M77 432l3 0M74 433l3 -1.5 2.5 -1.5M78 436l0 3M77 434l1.5 2 1.5 2.5M79 434l3.5 -3M65 430l2 1 2.5 1 2.5 1 2.5 0.5 2.5 0.5 2.5 0.5 2.5 0M64 436l-3 0M66 433l-2 3 -2 3M71 436l1.5 3M67 435l3.5 1 3.5 0.5M67 440l-3 1.5M68 438l-1 2.5 -1.5 2.5M72 441l1.5 2M70 440l2.5 1 2.5 0M71 443l-0.5 4M65 430l1 2.5 1 3 1.5 2.5 1.5 2.5 1 2.5 2 2M231 275l3.5 0.5M229 277l2.5 -2 2.5 -2M226 273l0.5 -3M228 275l-2.5 -2 -2 -3M230 270l3 2M228 272l2.5 -1.5 2.5 -1.5M228 267l1.5 -2M229 269l-1.5 -2 -0.5 -2.5M229 267l4.5 0.5M230 280l-1 -2.5 -1 -2.5 0 -3 0.5 -2.5 1 -2.5 1 -2.5M235 278l1 3M231 277l3.5 0.5 3.5 0.5M232 272l2 -2M232 275l0 -3 0.5 -3M237 275l1 2.5M234 273l3.5 1.5 2 2M237 269l3 -1M237 272l0.5 -3 1.5 -2.5M239 271l3.5 3M230 280l1 -2.5 1.5 -2.5 2 -2 2 -1.5 3 -1 2.5 -0.5M235 281l-1.5 3.5M232 279l3 2.5 2 2.5M238 277l2 1.5M235 279l2.5 -2 3 -1M239 281l-2 2.5M237 279l1.5 2 1 2.5M240 280l4.5 -1M242 281l0 3.5M230 280l2.5 -1 2.5 0 2.5 0 2.5 0.5 2 1 2.5 1.5M232 284l-4 0.5M232 286l0.5 2.5M232 281l0 2.5 0 2.5 -1 2.5M237 283l2 2M240 283l2 -1M235 282l2 0.5 2.5 0.5 2.5 1M237 287l-2.5 1.5M237 284l0 3 -0.5 3M241 285l1.5 2.5M239 286l2.5 -0.5 2.5 0.5M240 288l-3 3.5M242 290l4 2.5M230 280l2.5 1 2 1.5 2 1.5 2 1.5 1.5 2.5 1.5 2 1 2.5M229 285l-4 0M231 283l-2.5 2.5 -2.5 2.5M232 288l-2 2.5M230 285l2 3 1.5 3.5M228 289l-3 -1.5M230 288l-2.5 1 -2.5 0.5M230 293l-2 1.5M229 291l1 2 0.5 2.5M228 293l-3.5 -0.5M230 280l0.5 2.5 0 3 -0.5 2.5 -0.5 2.5 -1 2.5 -1.5 2.5M225 282l-0.5 -2.5M228 282l-3 0 -3 -1M226 288l-2.5 2M227 284l-0.5 3.5 -1 3.5M222 285l0.5 -3.5M224 286l-2.5 -1.5 -2 -1.5M221 290l-3 -0.5M222 287l-1 2.5 -1 2.5M220 289l-3.5 -3.5M230 280l-1.5 2 -2 2 -2 2 -2.5 1.5 -2.5 1 -2.5 1M226 279l0 -3M224 277l-2.5 0M228 281l-2.5 -1.5 -1.5 -2 -1.5 -2M223 284l-3.5 -1.5M225 282l-2.5 2 -2.5 2M222 279l2.5 -2M223 282l-1 -3.5 0 -3M218 283l-3 -1.5M220 282l-2.5 1 -3 1M218 281l0 -4.5M215 280l-4 1M230 280l-2.5 1 -2 0.5 -3 0 -2.5 0 -2.5 -0.5 -2 -1 -2 -1.5M227 276l2.5 -1M227 279l0 -3.5 0.5 -3M222 277l-0.5 -2M225 277l-2.5 0 -2.5 -0.5M224 272l3 0M223 275l1 -2.5 1.5 -2.5M222 272l-2.5 -3M230 280l-2.5 -1 -2.5 -2 -1.5 -2.5 -1 -2.5 -0.5 -3M213 325l2 0M212 328l0.5 -2.5 1.5 -3M210 326l-3.5 -2M209 323l3 -2.5M215 330l-2.5 -1.5 -2 -2.5 -1.5 -2.5 0 -3.5M218 327l1 1.5M215 327l3 0 2.5 0M216 325l1.5 -4M218 323l3.5 2M215 330l0.5 -2.5 1 -2.5 2 -2 2 -1.5M220 329l0.5 2.5M217 328l3 1 2.5 1.5M220 327l4 -2M223 327l-0.5 3.5M215 330l2.5 -2 2.5 -1 3 0.5 2.5 0.5M219 333l-1.5 2.5M218 330l1 3 1 3.5M223 330l1 2M220 331l3 -0.5 2.5 0M223 332l-3 4M225 334l3 2.5M215 330l3 0.5 2.5 0.5 2.5 1.5 2 1.5 1.5 2.5M217 333l-3.5 2.5M217 336l2 3.5M215 330l2 2.5 0.5 3.5 -0.5 3.5M211 332l0 -3.5M214 332l-3 0 -2.5 -1M212 337l-2 0.5M212 335l0 2 -0.5 2.5M210 336l-3.5 -3M207 337l-3 2.5M215 330l-1 2.5 -2 2 -2 1.5 -2.5 1 -3 0M213 331l-2 -4M210 332l-3.5 1.5M208 331l0 -2.5M215 330l-2.5 1 -2.5 0.5 -2.5 0 -2.5 -1M173 341l2.5 0.5M171 342l2.5 -1.5 2.5 -1M172 339l-2.5 -4M173 336l3.5 0M170 345l1 -3 0.5 -3 1 -3 2 -2.5M175 346l-1 3.5M173 344l1.5 2.5 2 2.5M176 341l2.5 -0.5M175 343l1 -2 1.5 -2.5M178 343l1.5 3M180 342l2.5 -2.5M170 345l2.5 -1 2.5 -0.5 2.5 -1 2.5 -0.5 3 0M171 350l-3 -0.5M172 347l-1 3 -2 2.5M174 350l3.5 1.5M176 352l-1.5 4.5M170 345l2 2 2 3 1.5 2.5 1.5 2.5M169 350l-2.5 -0.5M170 348l-1 2 -2 1.5M171 350l3 2.5M171 353l-3 2M170 345l0.5 2.5 0.5 3 0 2.5 0 3M165 345l0 -2.5M168 346l-3 -1 -2.5 -1M165 347l-1.5 4M162 348l-2 -3.5M170 345l-2.5 1 -2.5 1 -3 0.5 -2.5 0.5M166 342l1.5 -2.5M167 344l-0.5 -2.5 -0.5 -2.5M162 344l-0.5 -2M165 343l-2.5 0.5 -2.5 0.5M162 342l0.5 -4M160 341l-4 0.5M170 345l-2.5 -0.5 -2.5 -1.5 -2.5 -1 -2.5 -1 -2.5 -1.5M170 340l2 -1.5M169 343l0.5 -3 1.5 -3M168 340l-4 -2.5M167 338l3 -4M166 335l-4 -2M170 345l-1.5 -2.5 -1 -2.5 -1 -2.5 -0.5 -2.5 -1 -2.5M122 370l2 0.5M120 372l1.5 -1.5 2 -1.5M120 369l-4 -2M120 366l3 -1M120 375l-0.5 -3 0 -2.5 0.5 -3 0 -3M125 374l1 2.5M122 374l3 0 3 1M125 370l2 -1M124 372l1 -2.5 0 -2.5M127 371l4 0.5M129 369l1 -3M120 375l2 -1.5 2.5 -1.5 2 -1.5 2.5 -1 2 -1.5M124 378l-2.5 2.5M122 376l1.5 2.5 1 2.5M125 376l4 -2.5M127 377l2.5 4M129 378l4 -1.5M120 375l2.5 0.5 2.5 1 2 1 2.5 1 2 1.5M121 380l-3 1M122 377l-1.5 3 -0.5 3M127 378l2 2M124 379l2.5 -1 3 0M125 383l-2 1.5M125 380l0 3 -0.5 3M130 382l0.5 2.5M127 382l2.5 0.5 2.5 0M129 384l-2.5 4M120 375l1.5 2 2 1.5 2 2 1.5 2 1.5 1.5 1.5 2.5M117 379l-2.5 -1M119 378l-2.5 1 -2.5 1M120 383l-1.5 1.5M119 380l0.5 3 1 2.5M118 383l-4.5 1.5M117 385l3 4M120 375l-0.5 2.5 -1 2.5 -0.5 2.5 -0.5 3 -0.5 2.5M115 375l-1 -2.5M117 376l-2 -1 -2.5 -2M115 380l-3 1M115 378l-0.5 2.5 0 2.5M112 379l-3.5 -3M110 380l-1.5 4.5M120 375l-2.5 1.5 -2.5 1.5 -2.5 1 -3 1 -2.5 1M118 370l2.5 -1M118 373l0.5 -2.5 0.5 -3M114 372l-2 -3M116 371l-2.5 0.5 -2.5 0.5M115 369l1.5 -3.5M113 367l-4 1M120 375l-2 -1.5 -1.5 -2 -2 -2 -1.5 -2 -1.5 -2M96 346l1 -3.5M97 349l-1 -3.5 -2 -3M93 351l-3 0.5M95 348l-2.5 2.5 -1.5 2.5M89 347l-1 -3.5M92 348l-3 -1.5 -3 -0.5M88 351l-2.5 1M89 348l-1 3 0 2.5M87 349l-5 0M100 350l-2.5 -1 -2.5 -0.5 -3 -0.5 -2.5 0.5 -3 0.5 -2.5 1M100 344l2.5 -2M99 347l0.5 -3 0 -3.5M94 346l-3.5 -1M97 345l-3 1.5 -3 1.5M94 340l2 -2M95 343l-1 -2.5 -1 -3M92 342l-3 4M90 341l-3 -4M100 350l-1.5 -2.5 -1.5 -2.5 -2.5 -1.5 -2 -1.5 -3 -1 -2.5 -1M105 346l3 1.5M101 348l4 -1.5 3 -1.5M101 342l0 -3M103 345l-2 -3 -2 -2.5M106 341l3 0M104 342l2.5 -1 2 -2.5M104 340l-5 -0.5M104 337l3 -4M100 350l1.5 -2.5 1.5 -2.5 0.5 -2.5 0.5 -3 0 -2.5 0 -3M105 351l1 3M103 349l2 2 2.5 1M106 346l1.5 -2M105 349l0.5 -3 -0.5 -3M107 347l5 0.5M109 346l-1.5 -3.5M100 350l2.5 -0.5 2.5 -1 2.5 -1 2 -2 1.5 -1.5M104 353l-1 3.5M102 351l1.5 2.5 2 2M106 349l2.5 -0.5M105 351l1 -2 0.5 -2.5M108 351l4 1.5M110 350l0.5 -3.5M100 350l2.5 1 2.5 0.5 2.5 -0.5 2.5 -0.5 2.5 -1.5M100 356l-2 2M101 353l-1 2.5 0 3.5M105 354l2 1M102 355l3 -0.5 2.5 -1.5M104 360l-2 2M103 357l0.5 3 1 2.5M105 359l4 -2.5M107 360l2.5 4M100 350l0.5 2.5 1 2.5 2 2 1.5 2 2.5 1 2.5 1M96 354l-3.5 0M99 352l-3 2.5 -2 2.5M100 357l-0.5 2.5M98 355l1.5 2 2.5 2M96 360l-2.5 0.5M98 357l-2 2.5 -1 2.5M100 361l1 2M98 360l2 1 2.5 0.5M98 362l-1 4.5M100 350l-1 2.5 -1 2 -0.5 2.5 0 3 0.5 2.5 0.5 2.5M94 348l-1 -3M97 350l-2.5 -2 -3.5 -1.5M93 354l-2.5 1.5M94 351l-0.5 3 -0.5 3M89 350l-1 -3M92 351l-3 -1 -3 -1M89 356l-1.5 1.5M89 353l0 2.5 1 3M87 355l-4.5 1M100 350l-3 0.5 -2.5 0.5 -3 0.5 -2.5 1.5 -2.5 1.5 -1.5 2M246 317l1 -3M247 319l-1 -2 -1 -2.5M244 319l-4 2.5M241 318l-2 -3.5M250 320l-3 -0.5 -3 -1 -3 -0.5 -3 -0.5M249 318l2 -5M248 315l-3.5 0M247 313l0.5 -3.5M250 320l-1 -2.5 -1 -2 -1.5 -2.5 -1.5 -2M254 316l2.5 2M251 317l2.5 -0.5 2.5 -1M252 315l-2 -3.5M253 312l4 -2M250 320l1.5 -2.5 1 -2.5 1 -3 0.5 -3M252 319l4 2.5M255 318l1 -3M257 318l3 1.5M250 320l2.5 -1 2.5 -0.5 2.5 -1 2.5 -0.5M252 322l-0.5 5M254 325l4 -0.5M250 320l2.5 2.5 2 2.5 2 2.5M247 324l-2.5 -1.5M250 323l-2.5 1 -2.5 1.5M253 327l0 2M250 325l3 2 2.5 1M251 328l-2 4M252 331l3 2M250 320l0 3 0.5 2.5 0.5 2.5 0.5 3 0.5 2.5M247 322l-4.5 -1M245 323l-1 4M242 324l-3 -0.5M250 320l-2.5 1.5 -2.5 1.5 -2.5 1.5 -2.5 1.5M330 243l-4.5 0.5M329 246l1.5 4M328 248l-3.5 0M330 240l0 3 -0.5 2.5 -1.5 2.5 -2 2.5M325 240l0 -3.5M328 241l-3 -1 -2.5 -2M325 245l-3 0M325 242l-0.5 3 -1.5 2M323 243l-1.5 -5M320 243l-3 1.5M330 240l-2 1.5 -2.5 1 -2.5 0.5 -2.5 -0.5 -3 -0.5M326 237l1.5 -2M327 239l-1 -2 -0.5 -2.5M324 238l-4 1.5M322 236l0.5 -3M330 240l-3 -0.5 -3 -1 -2.5 -2 -2 -2M330 235l2.5 -0.5M329 237l1 -2 1.5 -2.5M328 235l-4 -3M328 232l2.5 -2.5M330 240l-1.5 -2.5 -0.5 -3 -0.5 -3 0.5 -3M331 237l5 1M333 235l2 -3.5M336 234l2 3M330 240l1.5 -2.5 2 -2 2.5 -1.5 2.5 -1M335 241l-1 3M333 239l1.5 2.5 2 2.5M335 239l3 -3.5M338 239l2 4M340 239l3 -1.5M330 240l2.5 -0.5 2.5 -0.5 2.5 0 2.5 0.5 2.5 0.5M331 245l-2.5 1M332 242l-1 3 -1 2M336 246l1 2M333 245l3 1 2 1M334 248l-3 1.5M330 240l2 2.5 1.5 2.5 1 3 0.5 3M303 200l3.5 2M305 199l2 -3.5M308 199l3 1.5M300 200l2.5 -0.5 3 0 2.5 -0.5 3 -0.5M301 203l-1 3.5M303 205l3 -0.5M300 200l1 2.5 2 2.5 2 2M299 202l-4.5 2.5M298 205l2 3M298 208l-2.5 2.5M300 200l-1 2.5 -1 2.5 -0.5 3 0 2.5M297 200l-3 -3.5M294 200l-0.5 3M300 200l-3 -0.5 -2.5 0.5 -3 0.5M299 197l1 -4M297 194l-4 1.5M300 200l-1.5 -3 -2 -2.5 -2 -2.5M302 198l4 -0.5M303 195l-1 -2.5M300 200l2 -2.5 1 -2.5 1.5 -3M246 250l3.5 0M244 253l2.5 -2.5 2 -2M244 250l-3.5 -3M244 247l3.5 -2M244 245l-3 -2M245 255l-0.5 -2.5 -0.5 -2.5 -0.5 -2.5 0 -2.5 0.5 -2.5M247 253l4 0.5M248 250l-1.5 -4M250 248l3 0M245 255l1.5 -2.5 1.5 -2 1.5 -2.5 1.5 -2.5M248 259l-2 2.5M248 256l0 3 0 3M250 257l5 -1M252 258l0.5 4.5M255 259l3.5 -2M245 255l2.5 1 2.5 1 2.5 1 2.5 1 2.5 1M247 258l-2.5 4M248 260l4.5 1.5M249 263l-2.5 3.5M245 255l1.5 2.5 1.5 2.5 1 3 1 3M243 257l-4.5 -1.5M241 258l0.5 4.5M239 260l-2 -1M245 255l-2 1.5 -1.5 2 -2 1.5 -2 1.5M241 252l2 -1.5M242 255l-1 -3 -1 -2.5M237 255l-1.5 -1M240 254l-2.5 1.5 -2.5 0.5M237 254l-1.5 -4.5M235 253l-3.5 0.5M245 255l-2.5 0 -2.5 -0.5 -2.5 -1 -2.5 -1 -2.5 -1M263 239l4.5 1M265 238l-1.5 -3.5M267 237l4.5 -0.5M260 240l2.5 -0.5 2.5 -1 2.5 -2 2 -2M263 244l0 3M262 242l1.5 2.5 1 2.5M265 242l2.5 -3M268 242l4 1.5M260 240l2.5 1.5 3 1 2.5 0 3 -1M260 243l0 4.5M262 245l3 -1M260 240l0.5 3 1.5 2.5 2 2M258 241l-5 -1M255 243l3 3.5M253 245l-3 1M260 240l-2.5 1 -2.5 1.5 -1.5 2 -1.5 2.5M258 238l-2.5 -3.5M256 237l-3 3M253 236l-1.5 -2M260 240l-2 -1.5 -2 -1.5 -2.5 -1 -3 0.5M261 237l2.5 -4M261 234l-4.5 0.5M260 231l-0.5 -3M260 240l0.5 -3 0 -3 -1 -2.5 -1.5 -2.5M248 304l-2.5 1M247 301l1 3 -0.5 2.5M249 303l4.5 1.5M251 305l-2 2.5M245 300l2.5 1.5 2 1.5 1.5 2 1.5 2M246 303l-3.5 2M245 306l1 3.5M245 300l0.5 3 0 3 -1 2.5M243 302l-4 -2M241 303l-2 4M239 305l-2 -2.5M245 300l-1.5 2 -2.5 1.5 -2 1.5 -2.5 0.5M242 299l0.5 -4.5M239 297l-3 1M245 300l-3 -1 -3 -1.5 -2 -2.5M244 297l4.5 -2.5M245 294l-2.5 -4.5M245 291l4.5 0M245 300l-0.5 -3 0 -3 0.5 -3 1.5 -2.5M249 299l0.5 2.5M247 298l2.5 1 2.5 1M249 296l1.5 -4M252 295l2.5 2.5M245 300l2 -2 2 -2 2.5 -1 3 -1M120 368l-1.5 -1.5M123 367l-2.5 0.5 -2.5 0.5M121 369l2 4M120 372l-4 0M125 365l-2 2 -2 2 -1.5 2.5 -1.5 2.5M121 361l1.5 -2M122 364l-1 -2.5 -1.5 -2.5M117 365l-2.5 -0.5M119 363l-1.5 2 -2 2M117 363l-2.5 -4M114 362l-3 3.5M125 365l-3 -1 -2.5 -0.5 -3 -1 -2.5 -0.5 -3 -0.5M125 360l2.5 -1M123 363l1.5 -3 1 -3M119 361l-1.5 -0.5M122 361l-2.5 0.5 -2.5 1M120 358l-0.5 -4.5M118 356l-4 2.5M125 365l-1.5 -2.5 -2 -2 -1.5 -2 -2 -2 -2 -2M126 362l4.5 -2.5M127 359l-4 -2M127 357l2.5 -3M125 365l1.5 -2.5 0.5 -3 0.5 -3 0 -3M130 367l0 2.5M128 365l2 2 3 2M132 362l2.5 -1M131 364l1 -2.5 0.5 -2.5M135 365l1 3M134 364l1.5 1.5 2 1.5M136 362l0 -4M125 365l3 -0.5 2.5 -0.5 3 -0.5 2.5 -1 3 -1.5M128 370l-1.5 2.5M127 367l1.5 3 1 2.5M132 367l2 1.5M129 368l3 -0.5 2 -1.5M132 370l1.5 4.5M135 371l2.5 -3M125 365l2 2 2.5 1.5 2.5 1.5 2.5 1 2.5 1M121 369l-3 -1M125 368l-3.5 1 -3 2M127 372l0 3M124 370l2.5 2 3 1.5M122 375l-2.5 -1M124 373l-2 1.5 -2 2M125 375l3.5 2M125 378l-2 3M125 365l-0.5 2.5 -0.5 2.5 0.5 2.5 0 2.5 0.5 2.5 0.5 2.5M110 385l-0.5 -3M112 386l-2 -1 -2.5 -0.5M110 388l2 4M108 390l-3.5 0.5M115 385l-2.5 1 -2.5 1.5 -2.5 2 -1.5 2.5M112 381l1.5 -2M113 384l-1 -3 -0.5 -2.5M108 384l-3 -0.5M110 383l-2 1 -1.5 2M108 382l-2.5 -4M105 381l-0.5 4.5M115 385l-2 -1.5 -2.5 -1 -2.5 -1 -2.5 0 -3 -0.5M115 382l2 -4M114 380l-4.5 -1M113 377l-0.5 -3.5M115 385l0 -3 -1 -2.5 -1 -2.5 -2 -2M120 383l1.5 1.5M117 383l3 0 2.5 0M119 381l-2.5 -3.5M121 378l2.5 -1.5M115 385l2 -2 2 -2 1.5 -2.5 1 -3M117 384l4.5 1M120 383l-1 -4M121 381l4 -0.5M115 385l2.5 -0.5 2 -1.5 2 -1.5 1.5 -2M117 388l1 3.5M120 389l3 -1.5M115 385l2 2.5 3 1.5 3 1M114 387l-3 2.5M114 390l3 2.5M114 392l-3 3.5M115 385l-1 2.5 -0.5 2.5 0 2.5 0.5 2.5M151 337l-2.5 4.5M151 340l4.5 1M152 342l-1.5 3M150 335l0.5 2.5 0.5 2.5 1 2 1.5 2.5M148 338l-4.5 1.5M146 340l1.5 3.5M150 335l-2 2.5 -2 2.5 -1.5 3M147 335l-3 -4M143 335l-1.5 3M150 335l-3.5 -0.5 -3 0.5 -3 1M148 330l1.5 -2.5M148 333l-0.5 -3 -0.5 -3.5M144 332l-2 -2M146 331l-2.5 1 -2.5 0.5M143 327l2 -2M144 329l-0.5 -2 -0.5 -2.5M142 328l-4.5 2M150 335l-2 -2 -2 -2 -2 -1.5 -2.5 -1.5 -2.5 -1M154 331l3 1M151 333l3 -1.5 2 -1.5M151 328l0 -2M152 330l-1.5 -2 -1.5 -2M155 326l2 0M153 327l2 -1 1.5 -2M153 325l-3.5 -2.5M150 335l1.5 -2.5 1 -2.5 0.5 -2.5 0 -2.5 0.5 -3M155 335l1.5 1.5M152 334l3 0.5 3 1M155 329l2 -2M155 332l0 -2.5 0 -3M157 331l4 -0.5M158 329l-1 -4.5M150 335l2.5 -1.5 2 -1.5 2 -1.5 2 -2 1.5 -2M153 339l-2 2.5M153 337l-0.5 2.5 0.5 2.5M155 338l3.5 -3M158 340l0.5 4M150 335l2.5 1.5 2.5 1.5 3 1.5 2.5 1.5M103 401l-5 -1.5M100 402l-1 4M97 402l-2.5 -1.5M105 400l-2.5 1 -2.5 0.5 -2.5 1 -2.5 1M102 398l0.5 -4.5M100 396l-4 1M105 400l-2.5 -2 -2.5 -1.5 -3 -2M105 397l4 -2M105 395l-2.5 -3M106 392l2 -2M105 400l0.5 -2.5 0 -3 0 -2.5 0.5 -2.5M110 399l0.5 3.5M107 398l3 1.5 2 1.5M109 394l2 -2M110 396l-0.5 -2 -0.5 -2.5M112 394l3.5 0.5M105 400l2.5 -2 2 -1.5 2.5 -2 2.5 -2M107 402l1 3.5M110 403l2.5 -1.5M105 400l2.5 1.5 2.5 1.5 2.5 0.5M105 403l-3.5 3.5M105 407l3 1.5M105 400l0 3.5 0 3 0 3.5M204 277l1 3M201 277l2.5 0 3 0.5M202 272l2.5 -1.5M202 275l0 -2.5 1 -3M204 273l4 2.5M207 272l1 -4.5M200 280l1 -2.5 1.5 -2.5 2 -2 2 -1.5 2.5 -1M204 282l-1.5 2.5M203 280l1 2.5 1 2.5M207 279l2.5 1.5M205 280l2.5 -1 2.5 -0.5M207 281l-1.5 4.5M210 283l3.5 0M200 280l2.5 0 2.5 0 2.5 1 2 1.5 2 2M200 284l-2 0.5M202 282l-2 2.5 -1.5 1.5M203 285l3 3M203 287l-2.5 2M200 280l1.5 2 1.5 3 0.5 2.5 -0.5 2.5M198 284l-2.5 -1M200 283l-2 1.5 -3 1M201 288l-1.5 2M200 286l1 2 0.5 2.5M200 288l-5 -0.5M199 291l-1.5 4M200 280l0.5 3 0 2.5 -0.5 3 -1 2.5 -1.5 2M196 279l0 -2M198 281l-2.5 -1.5 -1 -2.5M195 282l-4.5 1M192 282l0 -4.5M200 280l-2.5 1.5 -2.5 0 -3 0 -2.5 -0.5M197 277l2 -2M197 280l-0.5 -3 0.5 -3.5M195 279l-5 1.5M192 278l1.5 -4M190 277l-4 -1.5M200 280l-2.5 0 -3 -1 -2 -1 -2.5 -1.5 -1.5 -2M199 277l4.5 -2M200 274l0.5 -4M200 280l-0.5 -3 1 -3.5 2 -2.5M166 276l3 0.5M165 278l1.5 -2 1.5 -2M162 274l0 -3M164 275l-2 -1.5 -2 -1M164 273l2.5 -4M163 270l-3.5 -0.5M165 280l-0.5 -2.5 -0.5 -2.5 -0.5 -2.5 -0.5 -2.5 -0.5 -2M170 280l0.5 2.5M167 279l3 0.5 3 1.5M170 274l1.5 -1.5M169 277l0.5 -3 0.5 -3M171 275l5 0.5M173 273l-1 -4M165 280l2.5 -1.5 2 -2 1.5 -2 2 -2 2 -2M169 283l-2.5 2.5M168 281l0.5 2.5 1.5 2.5M170 281l3 -4M173 281l2.5 4M176 282l2.5 -3.5M165 280l2.5 0.5 3 0.5 2.5 0.5 3 0 2.5 0.5M163 285l-3 0M165 283l-1.5 2 -2 2M169 286l1.5 2M166 285l2.5 1 3 0.5M167 288l-2.5 4M167 290l3.5 2M165 280l0.5 2.5 0.5 2.5 0.5 2.5 0.5 3 0.5 2.5M163 282l-4.5 -0.5M161 284l1 4M159 286l-3.5 -1M165 280l-2 2 -2 2 -2 1.5 -2 2.5M162 276l1.5 -1.5M162 279l0 -2.5 -1 -2.5M159 278l-3.5 3M157 278l-2.5 -3M165 280l-3 -1 -2.5 -0.5 -3 -0.5 -3 -0.5" stroke="#55478a" stroke-opacity="0.33" stroke-width="1.25"/>
<path d="M72 444l-1 -3M76 444l-3.5 0 -3.5 0M74 449l-2.5 2M74 447l0 2 0 3M69 448l-1 -2.5M71 448l-2 0 -2.5 -1M69 450l-3 3.5M78 442l-2 2.5 -2.5 2 -2 2 -2.5 1.5 -3 1M73 440l1 -2.5M75 443l-2 -2.5 -1.5 -3M71 445l-2.5 0.5M73 443l-2.5 2 -2 2M68 442l0.5 -3M70 444l-2 -2.5 -2 -2M68 444l-3 3.5M65 445l-2 -4M78 442l-3 0.5 -2.5 0.5 -2.5 0.5 -2.5 0.5 -2.5 0.5 -2.5 0.5M75 438l2.5 -2.5M76 441l-1 -3.5 0.5 -3M71 441l-3 -1.5M73 439l-2 2 -2.5 0.5M73 435l2.5 -0.5M72 438l0.5 -3 1 -2.5M68 435l-1 -2.5M70 436l-2.5 -1 -2 -0.5M69 434l1.5 -3.5M78 442l-2.5 -1 -2 -1.5 -2 -2 -1.5 -2 -1.5 -1.5 -1.5 -2M80 438l2.5 1.5M77 439l3 -1.5 3 -1M75 435l0 -3M77 437l-2 -2 -1.5 -2M77 434l4 -1.5M77 431l-3 -2.5M78 442l-0.5 -2.5 -0.5 -3 0 -2.5 0 -2.5 0.5 -3M79 440l5 0.5M81 438l-0.5 -4M83 436l3 2M78 442l1 -2 2 -2 2 -2 2.5 -1M81 442l3 3.5M84 441l3.5 -2M86 442l1.5 4M78 442l2.5 -0.5 3 0 3 0.5 3 0.5M80 444l-0.5 5M81 446l4.5 1.5M83 449l-2 3M78 442l2 2 1.5 2.5 1 2.5 1 2.5M75 446l-2.5 -2.5M78 445l-3 0.5 -3 0.5M77 447l3.5 4M77 450l-3.5 2M77 453l1.5 3.5M78 442l-0.5 3 0 2.5 0 2.5 -0.5 2.5 0 2.5M84 436l3.5 0M82 439l2 -3.5 3 -2M85 438l2.5 2M87 438l2.5 -1.5M82 439l2.5 -1 2.5 0 2.5 0.5M84 441l-0.5 3M82 439l2.5 2 1 3.5M82 441l-4 1M80 444l0.5 3M82 439l-0.5 2.5 -1.5 2.5 -1.5 2M80 440l-3 -3.5M77 441l-2 1.5M82 439l-2.5 1 -2.5 1 -2.5 0M80 438l-0.5 -4M77 436l-3 0M82 439l-2.5 -1.5 -2.5 -1 -1.5 -2M81 435l2.5 -2.5M82 439l-1 -4 0.5 -3.5M87 433l2 -3M86 431l-2 -1.5M89 435l-2 -2 -1 -2.5 -0.5 -2.5M90 433l4 0M92 431l0.5 -4M89 435l1 -2.5 2 -2 2 -2M91 436l2 4.5M93 437l4 -1M95 438l0 3.5M89 435l2 0.5 2.5 1.5 2 1.5 1.5 2M90 437l-2.5 3.5M91 440l3 1M89 435l1 2.5 1.5 2.5 0.5 2.5M88 438l-4 -1.5M86 440l-0.5 4M89 435l-1.5 3 -1.5 2.5 -2 2M86 435l-1 -3.5M83 434l-2.5 1.5M89 435l-3 0 -3 -1 -2 -1.5M95 441l-2 -2M98 439l-2.5 2 -3 0.5M97 442l3 4.5M97 445l-4 0M98 436l-0.5 3.5 0 3 -0.5 3 -1.5 2.5M96 439l-4.5 -3M94 440l-2 4.5M91 441l-3 -2.5M98 436l-2 2.5 -2.5 1.5 -2.5 1 -3 0.5M93 435l0.5 -3.5M95 437l-2.5 -2 -2 -2.5M90 439l-2.5 -0.5M92 437l-2 2 -2 1.5M89 437l-2 -4.5M86 436l-3.5 2M98 436l-3 1 -3 0 -3 0 -2.5 -0.5 -3 -1M96 432l2.5 -1M95 435l0.5 -3.5 1.5 -3M90 433l-1 -2.5M93 433l-2.5 0 -3 -0.5M91 431l4 -3.5M90 428l-3.5 -2.5M98 436l-3 -1 -2 -2 -1.5 -2.5 -1.5 -2.5 -0.5 -3M99 432l3 1M97 434l2.5 -2 2.5 -0.5M97 431l-2 -4M97 429l4.5 0M98 426l0 -3M98 436l-1 -2 0 -2.5 0.5 -2.5 0.5 -2.5 1 -2.5M102 435l0.5 2.5M99 434l3 1 2.5 1.5M101 429l2 -0.5M101 432l0 -3 1.5 -2M103 430l3.5 3M105 428l1.5 -4M98 436l1 -2 2 -2 2 -2 2.5 -1.5 2.5 -1M102 439l-1 2.5M100 436l2 2.5 1 3.5M104 433l3.5 0M103 435l1.5 -2 2 -2M107 437l-0.5 3M105 435l2.5 2 1.5 2.5M108 435l4 -1.5M110 436l0 3.5M98 436l2 0 2.5 -0.5 2.5 -0.5 2.5 0.5 2.5 0.5 2.5 0.5M100 441l-2.5 2M100 438l0 3 -1 3.5M105 441l1 2.5M102 440l3 0.5 2.5 1M103 445l-2.5 -0.5M104 442l-1 2.5 -1.5 2M106 445l3 3M98 436l2 2 2.5 2 1.5 2 1.5 2.5 1 3M103 427l3.5 -1M102 429l1.5 -2.5 2 -2.5M105 430l1 2.5M102 429l3 0.5 3 0.5M103 432l-0.5 3M102 429l1.5 3 1.5 2.5M101 433l-3 1M102 429l-1.5 3.5 -0.5 3.5M99 431l-3.5 -1.5M102 429l-3 2 -3 1.5M99 428l0 -3M97 428l-2.5 1M102 429l-2.5 -0.5 -2.5 -1 -2.5 -1M101 426l1.5 -2.5M102 429l-1.5 -3 -0.5 -3.5M111 425l0.5 2.5M108 424l2.5 0.5 2.5 2M109 419l3 -1.5M110 422l-0.5 -3 0 -3M114 421l0 3M112 420l2 1 2 2M115 419l3 -3M106 426l1.5 -2 2 -2.5 2.5 -1.5 2.5 -1 3 -1M109 430l-2.5 2M109 427l0.5 3 0 3M115 427l1 2M112 427l2.5 -0.5 3 0.5M115 431l-2 1.5M114 429l1 2.5 0 2.5M117 431l3.5 1M106 426l3 0.5 2.5 1 3 1.5 2 2 2 2M106 429l-4.5 1.5M105 432l2.5 3M104 434l-3.5 0.5M106 426l0 3 -0.5 2.5 -1 3 -1.5 2M102 425l0.5 -3M104 427l-2.5 -2 -1.5 -2.5M99 430l-2.5 0.5M101 427l-1.5 3 -2 2.5M97 425l1.5 -2M98 428l-1 -3 -0.5 -2.5M96 427l-4 2M94 427l0 -5M106 426l-2.5 1 -2.5 0.5 -2.5 0 -2.5 -0.5 -2.5 -0.5 -2.5 -0.5M106 421l2.5 -0.5M104 424l2 -3 1.5 -2.5M100 421l-0.5 -3M103 421l-3 -0.5 -2 -1.5M102 419l3 -3.5M101 416l-2.5 -3.5M106 426l-1.5 -2 -1.5 -2.5 -1 -2.5 -0.5 -3 0 -3M100 416l1.5 -2M101 419l-1 -2.5 -1.5 -3M96 421l-2.5 -1.5M99 419l-2.5 2 -3 1M95 416l2 -2M96 419l-0.5 -2.5 -1 -3M94 418l-4.5 2M91 418l0.5 -4M104 419l-2.5 0.5 -2.5 -0.5 -2.5 0 -2.5 -0.5 -2.5 -1 -2.5 -1M101 415l2 -2M101 417l0 -2.5 0 -3M97 415l-1.5 -2.5M99 416l-2.5 -1 -2.5 -1M99 411l1.5 0.5M97 414l1.5 -2.5 2 -2M96 412l-3.5 -2M104 419l-2.5 -1.5 -2 -2 -2 -2 -2 -2 -1.5 -2M105 414l3 1.5M103 416l2.5 -1.5 2.5 -1.5M103 413l-1 -4.5M104 410l3 0.5M104 419l-1 -3 0 -3 0.5 -3 1 -2.5M109 417l1 2M106 417l3 0 3 1M108 412l2.5 -1M108 415l0 -2.5 0.5 -3M112 415l0 3M110 414l2.5 1 2 1.5M113 413l2.5 -3.5M104 419l2 -2 2 -2 2.5 -1.5 2.5 -0.5 2.5 -0.5M109 420l-1 3M106 418l3 2.5 2.5 2.5M111 415l2.5 0.5M109 418l2 -2.5 2 -2M113 420l-0.5 2M111 418l2 2 1 2M114 418l3.5 -2M116 419l0 3M104 419l2.5 -1 2.5 0 2.5 0 2.5 0 2.5 0.5 2 1M105 423l-3 0M106 421l-1 2.5 -1.5 2.5M110 424l1 2M107 423l3 1 2.5 1.5M109 425l-4 2.5M110 428l3.5 2M104 419l2 1.5 1.5 2.5 1 2 1 2.5 0.5 3M102 423l-2 -1M104 421l-1.5 2 -2.5 1.5M105 424l2.5 3M104 426l-4 1.5M104 429l1 3.5M104 419l0.5 2.5 0 2 0 3 -1 2 -1 2.5M100 421l-1 -2.5M102 421l-2.5 -0.5 -2.5 -0.5M100 423l-0.5 4M98 424l-2.5 -2M104 419l-1.5 2 -2.5 1.5 -2 2 -2.5 1M110 414l2 4M113 416l2 -2M108 412l2.5 2 2.5 1.5 2.5 1.5M107 415l-4.5 0.5M105 417l3.5 2.5M108 412l-1 2.5 -1.5 2.5 -1 3M106 411l-3 -3M103 411l-1 4M108 412l-2.5 -0.5 -2.5 -0.5 -3 0.5M109 409l1.5 -2.5M108 406l-3 0.5M108 412l0.5 -3 -0.5 -2.5 -1.5 -2.5M112 411l2.5 1M108 412l4 -1 2.5 -2M115 414l-2.5 -1M117 411l-1.5 2.5 -2.5 3M114 411l-1 -4M112 410l-3 2M117 411l-2.5 -0.5 -3 -0.5 -2.5 -1M116 408l1.5 -3.5M114 405l-3.5 -0.5M117 411l-1.5 -3 -1.5 -2.5 -1 -3M118 408l4.5 0.5M120 406l-0.5 -3.5M117 411l1.5 -3 1.5 -2 1.5 -2.5M121 411l0.5 3.5M117 411l3.5 0 3.5 1M119 413l-1.5 3M117 411l2 2.5 2 3M122 409l-4.5 1.5M121 411l3.5 3M120 414l-2 1.5M122 406l-0.5 3 -0.5 2.5 -0.5 2.5 -0.5 2M120 407l-4 -2.5M117 408l-1 3.5M115 408l-3 -2M122 406l-2 1 -3 0.5 -2.5 0.5 -2.5 0.5M120 405l-1 -5M118 404l-4.5 1.5M115 403l-1 -3.5M122 406l-2 -1 -2.5 -1 -2.5 -1 -2.5 -1M122 403l2.5 -2.5M122 401l-3 -1.5M122 406l0.5 -2.5 -0.5 -3 -0.5 -3M126 406l4 1M129 405l1 -4M122 406l3.5 -0.5 3.5 -0.5 3 -1.5M125 409l-1 3.5M127 410l3.5 -0.5M122 406l2.5 2.5 3 1.5 2.5 1.5M123 407l-4 1M123 410l1.5 3M123 404l0 3 -0.5 3 -1 3M120 405l-1 -3M118 405l-2 2M123 404l-2.5 0.5 -2.5 0.5 -2.5 0M122 402l2 -4M121 399l-2.5 -2M123 404l-1 -2.5 -1 -2.5 -0.5 -3M126 402l3.5 1M123 404l3 -2 3 -2M126 405l-0.5 4.5M128 406l3.5 -1M123 404l2.5 1 2.5 1.5 2.5 1.5M122 394l-3.5 -3M119 394l-2 4.5M116 395l-3.5 -1M125 395l-3 -1 -3 0.5 -3 0.5 -2.5 1.5M126 390l3 -1M125 392l1.5 -2 1.5 -2.5M121 388l-1.5 -2M124 389l-2.5 -0.5 -2.5 -0.5M122 387l-0.5 -4M125 395l0 -3 -1 -3 -2 -2.5 -2 -2M131 396l0 3M128 394l2.5 2 3.5 1M130 390l2 -2.5M130 393l0 -3.5 0 -3M135 392l1.5 2M132 392l3 0 2.5 0M134 388l1 -3M134 390l0 -2.5 -0.5 -2.5M136 388l4.5 -1M125 395l2.5 -1 2.5 -1 2 -1.5 2 -1.5 2 -1.5 1.5 -2.5M126 400l-1.5 2.5M126 397l0.5 3 0.5 2.5M131 398l2 2M128 399l3 -1 2 -1M130 400l3 3M133 401l2.5 -2M125 395l1.5 2 1.5 2 2.5 1 2 1.5 2.5 1M124 397l-5 3M123 400l3.5 3M122 403l-1.5 3.5M125 395l-1.5 2.5 -1 3 0 3 0 3M126 393l-3.5 3.5M127 396l4 2M127 399l-2.5 2.5M125 390l1 3 1 3 0.5 3 0 3M120 393l-1.5 -2.5M123 392l-3 0.5 -2.5 0M121 394l0 4.5M119 396l-4 -1.5M117 397l-1 4M125 390l-2 2 -2 2 -2 1.5 -2 1.5 -2 1.5M122 386l1.5 -2M122 389l-0.5 -3 -0.5 -3.5M117 389l-1.5 -2.5M120 388l-3 1 -2.5 1M118 385l2 -1.5M118 387l0 -2.5 0.5 -2.5M116 386l-4.5 -0.5M114 384l0.5 -4M125 390l-2.5 -0.5 -2.5 -1 -2 -1.5 -2 -1 -2 -2 -2 -1.5M125 385l3 0.5M123 388l2 -3 2 -3M119 384l-0.5 -2.5M122 385l-2.5 -0.5 -2.5 -1M121 383l1.5 -5M120 380l-4 -3M125 390l-1.5 -2.5 -1.5 -2.5 -1.5 -2.5 -1 -2.5 -1 -3M129 389l1.5 2M127 388l2.5 0.5 3 1M128 383l1 -2.5M128 386l-0.5 -3.5 0 -2.5M130 383l5 1M132 381l0.5 -4M125 390l1.5 -2 2 -2.5 1.5 -2.5 2 -2 2 -2.5M129 393l-0.5 3.5M127 391l2 2.5 1.5 2.5M132 391l2.5 2.5M130 392l2.5 -0.5 2.5 -0.5M132 393l-0.5 4.5M134 395l4.5 -0.5M125 390l2.5 1 2.5 1 2 1.5 2.5 1.5 2 1.5M130 385l-4 -2M128 387l-1 4M126 387l-3 -2.5M133 384l-2.5 1 -2.5 1.5 -2.5 0.5 -2.5 1M130 383l-1 -4.5M127 381l-4 0.5M133 384l-3.5 -1.5 -2.5 -1.5 -3 -1.5M132 381l1.5 -2M131 379l-3 -1.5M133 384l-1.5 -2.5 -0.5 -2.5 -0.5 -2.5M133 381l4 -0.5M135 379l-1 -3.5M133 384l0.5 -3 1.5 -2 2 -2M135 383l2.5 4M138 383l3.5 -2M140 383l2 3M133 384l2 -0.5 2.5 -0.5 2.5 0.5 2.5 0.5M135 385l0 4.5M137 388l3.5 0.5M133 384l2 1.5 2.5 2 1.5 2.5M133 387l-3 2M133 390l2 2.5M133 384l0.5 3 0 3 -0.5 3M131 386l-4 1M130 389l-0.5 3M133 384l-1.5 2.5 -2 2.5 -2 1.5M139 387l-2.5 -1M138 388l1 3.5M142 386l-2.5 0.5 -2 2 -1.5 2M139 385l-3 -1M142 386l-3.5 -0.5 -3 1M140 383l-0.5 -3.5M142 386l-2 -3 -3 -2.5M142 383l2.5 -3M142 380l-2.5 0M142 386l0.5 -3 -0.5 -3 -1 -2.5M144 384l3.5 0.5M146 383l-1.5 -3M142 386l2 -1.5 2 -2 1.5 -2M145 387l3 2M142 386l3 1 3.5 -0.5M144 388l1 3.5M142 386l2.5 2 3 1.5M141 389l-3.5 2M142 386l-1.5 3 0.5 3.5M153 376l1 2M150 376l2.5 0.5 2.5 0M152 374l-2 -4.5M154 371l3.5 -0.5M148 379l2 -2.5 1.5 -3 2 -2.5 1.5 -2.5M152 382l-1 2.5M151 379l1 3 1.5 3M156 377l3.5 1M153 379l3 -2 2.5 -2M158 382l0 3M156 379l2 3 1.5 2M159 379l2.5 -3.5M161 379l3.5 2M148 379l3 0 2.5 0.5 2.5 0 3 0 2.5 -0.5 2.5 0M148 384l-3.5 -0.5M149 382l-1.5 2 -1.5 2M150 385l4.5 0.5M150 388l-3 3M148 379l1 2.5 0.5 3 0.5 3.5 1 3M143 382l-2 -2.5M147 381l-4 0.5 -3.5 0.5M146 386l-2.5 2M145 383l1 3.5 0.5 3M141 385l-1.5 -3.5M143 385l-2.5 -0.5 -3 -0.5M142 390l-2 1.5M142 387l-0.5 2.5 0 3M140 389l-4 0.5M148 379l-1.5 2 -1.5 2 -1.5 2 -2 2 -1.5 2 -2 2M144 375l1.5 -3M145 378l-1.5 -3 -1.5 -3M141 380l-3 1M143 378l-2 2 -1.5 3M139 375l0.5 -2.5M140 377l-1 -2 -1.5 -2.5M137 377l-2 4M135 377l-2 -4.5M148 379l-2.5 -1 -2.5 -0.5 -3 0 -2.5 -0.5 -3 -0.5 -2.5 0M150 374l4 0M147 376l3.5 -2.5 2.5 -2.5M144 372l0 -3.5M147 373l-2.5 -1.5 -3 -1M149 368l3 0M147 370l2 -2 2 -2.5M144 366l-0.5 -2.5M146 368l-2 -2 -2.5 -1M146 365l3 -3M148 379l-0.5 -3 -0.5 -3 -0.5 -2.5 -0.5 -3 0 -2.5 0 -3M154 376l1.5 -4.5M154 374l-4 -1M153 371l0.5 -3M154 379l0 -2.5 -0.5 -3 -0.5 -2 -1.5 -2.5M157 378l4.5 1M160 377l0 -3M154 379l3.5 -0.5 3 -1.5 2.5 -1.5M155 381l0.5 5M157 383l3.5 -1.5M159 385l1 3.5M154 379l1.5 2 1 2.5 2 1.5 2 1.5M153 381l-5 1.5M152 384l2.5 2M154 379l-1.5 2.5 -1 3 -0.5 3M150 375l0.5 -2.5M152 377l-1.5 -2 -2 -2.5M149 377l-2 3M146 377l-3.5 -2.5M154 379l-2 -1.5 -3 -1 -3 0 -3 0.5M156 385l4 -0.5M154 388l2 -2.5 1.5 -3.5M156 390l1 2.5M158 390l2 -2M154 388l2 1.5 2.5 1 2.5 0M153 392l-2 2M154 388l-1 3.5 0.5 3.5M151 389l-4 -2.5M148 390l-1 3M154 388l-3.5 0.5 -3 1 -2 2M151 385l1 -3.5M154 388l-2.5 -3 -3 -2.5M149 377l3 1M147 379l2.5 -2 2.5 -1.5M147 376l-3 -3M148 374l4 -1.5M148 371l-2 -3M147 382l0 -3 0 -2.5 0.5 -2.5 0.5 -3 0.5 -2.5M152 381l1.5 2M150 380l2.5 0.5 2 1M153 379l1 -4.5M156 378l2.5 3M147 382l3 -2 2.5 -1 3 -1 3 -1M150 385l-1.5 2M150 383l0 2 0.5 3M152 384l4.5 -2M154 385l-0.5 5M156 386l4.5 1M147 382l2.5 0.5 2.5 1.5 2 1 2.5 1.5 1.5 1.5M148 385l-4 3.5M148 388l2 2.5M147 382l0.5 3 0.5 3 0 3.5M146 384l-4 1.5M145 386l1.5 4M144 389l-4 -0.5M147 382l-1 2 -1 2.5 -1.5 2 -1.5 2M142 381l0 -2.5M144 382l-2 -1 -1.5 -2M141 383l-1.5 3.5M138 383l-1.5 -3M147 382l-2.5 0.5 -3 0.5 -3 0 -3 0M145 380l0.5 -5M143 378l-4 -1M142 376l0 -4M147 382l-2 -2 -1.5 -2.5 -2 -2 -1 -2.5M143 387l0 2M141 385l2 1.5 2 2M144 385l3 -4M147 385l1.5 3M138 386l2.5 -0.5 3 -0.5 3 0 3 -0.5M137 391l-4 1.5M139 388l-2 3.5 -2 3M142 392l0 3.5M139 391l3 1.5 2.5 1.5M137 396l-2 -1.5M139 394l-1.5 1.5 -2 2M140 396l3 3.5M139 399l-3.5 1M138 386l0.5 2 0.5 3 0.5 2.5 0 3 0 2.5 0 3M133 387l-0.5 -2.5M136 388l-2.5 -1 -2.5 -1M134 392l-2 1.5M134 389l0 3 -0.5 2.5M132 391l-3.5 -2M130 393l0.5 3.5M138 386l-2 1.5 -2 2 -2 1.5 -2 1.5 -2 1.5M133 384l1.5 -2M135 386l-1.5 -2.5 -1.5 -2M131 386l-2.5 4M128 386l-2.5 -2.5M138 386l-3.5 -0.5 -3 0.5 -3 0.5 -3 0.5M138 380l3 -1M136 383l2 -3 1 -3.5M133 380l-1 -3.5M136 381l-3.5 -1.5 -2.5 -1M137 376l3 0.5M135 378l2 -2 2.5 -2M134 375l-4.5 -2M133 373l3.5 -4M138 386l-1.5 -3 -1 -2.5 -0.5 -2.5 -1 -2.5 -0.5 -3 -0.5 -2.5M142 383l1.5 1.5M139 383l3 0 2.5 -1M139 379l2 -3M140 381l-0.5 -2.5 -0.5 -2.5M142 379l4.5 1M144 377l0.5 -3M138 386l1 -2.5 1.5 -2.5 1.5 -2 2 -1.5 1.5 -2M138 377l0 2.5M136 375l2 1.5 2.5 2M139 374l0 -5M141 372l3.5 1.5M133 376l3 -1 2.5 -1.5 2.5 -1.5 2.5 -2M136 380l-1.5 1.5M136 377l0.5 3 0.5 3M141 376l2.5 1M139 378l1.5 -1.5 2 -1.5M141 379l3 4M144 380l2.5 -3M133 376l3 1.5 2.5 0.5 2.5 1 3 1 2.5 1M131 381l-2 -1M133 379l-2 1.5 -2 1.5M133 382l4.5 1.5M133 385l-2.5 2M133 376l0.5 3 0 3 -0.5 3 0 3M128 378l-1.5 -2M131 379l-2.5 -1 -3 -0.5M129 381l3 3.5M128 384l-4.5 0M133 376l-2 2.5 -1.5 2.5 -1.5 2.5 -1.5 3M129 374l0.5 -3M130 376l-1 -2.5 -1.5 -2.5M127 376l-3.5 2M124 376l-2.5 -3.5M133 376l-3 0 -3 0 -3 -0.5 -3 0M132 371l3 -0.5M132 374l0.5 -3 0.5 -2.5M127 372l-2.5 -2M130 372l-3.5 -0.5 -3 0.5M127 367l2 -2M128 370l-1 -3 0 -2.5M125 368l-4 0.5M133 376l-1.5 -2 -2 -2 -2 -2 -2.5 -2 -2 -2M138 373l2.5 1M134 374l3.5 -1.5 3 -1.5M133 369l0 -2.5M135 372l-1.5 -3 -2 -2.5M139 368l2.5 1.5M137 369l2.5 -0.5 2.5 -1M138 367l-1.5 -4M139 365l4 -2M133 376l1 -2 1.5 -2.5 1 -2 1.5 -2.5 1 -2.5 1 -2M139 366l4.5 2M142 365l2 -3.5M145 364l2.5 3M137 367l2 -1 3 -1 2.5 -0.5 3 -1M139 371l-2 2M139 368l0.5 3 0.5 3.5M144 368l2 1M141 369l3 -1 2.5 -1M144 370l1 5M146 371l4 -1M137 367l2 1 2.5 1 2.5 1 2.5 1 2.5 1M135 372l-2.5 -0.5M137 370l-2 2 -2 1.5M137 373l3.5 2M137 376l-3.5 2M137 367l-0.5 3 0.5 2.5 0 3 0 3M132 366l-0.5 -3M134 368l-2 -2 -2.5 -2M131 372l-2 1.5M132 369l-1 2.5 -0.5 3M129 370l-4 -2M127 371l-2 4M137 367l-3 1 -2.5 1 -2.5 1 -2.5 1 -2.5 1.5M133 363l3 -2M134 365l-0.5 -2.5 -0.5 -2.5M131 364l-4.5 1.5M129 363l0 -4.5M137 367l-3 -1.5 -2.5 -1.5 -2.5 -1.5 -2.5 -1.5M139 363l2.5 1M137 364l2 -1.5 2.5 -1M137 361l-2 -4M138 359l4 -2.5M138 356l-3 -3.5M137 367l0 -3 0 -2.5 0.5 -2.5 0.5 -3 0 -2.5M138 363l1 3M136 361l2 2 3 1.5M136 364l-1 2.5M136 361l0 2.5 1 3M133 363l-2 0.5M136 361l-2.5 2 -2 2M134 360l-2.5 -3.5M131 359l-2 2.5M136 361l-2.5 -1.5 -2.5 0 -2.5 0M135 357l1.5 -2.5M136 361l-1 -3.5 -1.5 -3M138 359l3.5 1.5M136 361l2.5 -1.5 2.5 -2M132 351l-0.5 -3M135 353l-3.5 -1.5 -2.5 -2M134 351l2 -3M133 348l-2.5 -1M135 353l-1 -2 -0.5 -3 -0.5 -2.5M136 350l3.5 0.5M135 353l1 -3 1.5 -3M137 352l3.5 2.5M140 351l1 -2M135 353l2 -0.5 2.5 -1 2.5 -0.5M137 355l0 4M135 353l2.5 2.5 2 3M135 356l-1.5 2M135 353l0 3 0.5 3M134 356l-3.5 1.5M135 353l-1.5 3.5 -1.5 2.5M132 354l-1.5 -3M130 355l-1.5 2M135 353l-2.5 1 -2.5 1 -3 0.5M139 344l2 -3.5M139 347l0 -3 -0.5 -3.5M135 347l-2.5 -1.5M137 346l-2.5 0.5 -2.5 1.5M135 342l2 -2.5M135 344l-0.5 -2.5 0 -2.5M133 343l-4 3.5M130 342l-1.5 -3.5M141 349l-2 -1.5 -2 -2 -2 -1.5 -2.5 -1 -2.5 -1 -2 -1M143 344l3.5 0M141 346l2 -2 2 -2.5M138 342l-1.5 -2M141 343l-3 -1 -2.5 -1M141 338l2 -1M140 340l1 -2 1 -2.5M139 338l-3.5 -2M141 349l0 -3 -0.5 -2.5 -0.5 -3 -0.5 -3 -0.5 -2.5M147 347l1.5 2.5M143 347l3.5 0 3.5 -0.5M146 342l1.5 -1.5M146 345l-0.5 -2.5 -0.5 -3M148 343l4.5 0M149 341l-1 -5M141 349l2.5 -2 2.5 -1.5 1.5 -2.5 2 -2.5 1.5 -2.5M145 352l-1.5 2.5M144 350l1 2 2 2.5M146 350l4 -3M149 350l3 3M151 351l2.5 -3M141 349l2.5 0.5 2.5 0.5 2.5 0.5 3 0.5 2.5 0.5M142 354l-2.5 1.5M142 352l0 2.5 0 2.5M147 355l1 2M144 354l2.5 0.5 2.5 0.5M145 359l-2 1M146 356l-1 3 -0.5 2.5M148 358l4 -1M141 349l1.5 2.5 1.5 2.5 1.5 2 2.5 2 2 2M137 353l-3 -1.5M140 352l-3 1 -3 2M139 357l-0.5 2M139 354l0.5 3 1 2.5M137 357l-4 2M136 360l2.5 3.5M141 349l-1 2.5 -1.5 3 -1 2.5 -1.5 2.5 -1.5 3M136 349l-0.5 -2M138 350l-2 -0.5 -2.5 -1M136 352l-0.5 4.5M133 354l-3.5 0M141 349l-2.5 1.5 -3 1.5 -2.5 1.5 -2 2.5M154 347l-2 2.5M152 344l1.5 3 1 3M155 345l4 -3M157 345l1 4.5M159 347l4 -1M150 344l2.5 0.5 2.5 0 2 1 2.5 1 2 1.5M151 347l-3 3M152 349l2 3M152 352l-3 1.5M150 344l1 2.5 0.5 2.5 0.5 2.5 0 2.5M145 346l-1 -2.5M148 346l-3 0 -2.5 -1M145 348l-1.5 4M143 350l-2.5 -3.5M150 344l-2 2.5 -2.5 1.5 -2.5 1.5 -3 1M147 344l-1.5 -4M144 344l-3.5 1M150 344l-3 0.5 -3.5 -0.5 -3 -1M149 342l3.5 -3M148 339l-2 -3.5M148 336l3 -2M150 344l-1.5 -2 -0.5 -3 0 -3 0.5 -2.5M152 342l4 2.5M155 340l1 -3.5M150 344l2 -2 3 -2 3 -1M157 350l-2 2M156 347l0.5 3 1.5 2.5M161 347l2 2.5M158 348l2.5 -0.5 2.5 -1M161 349l1.5 4.5M163 350l3.5 -2M153 346l2.5 1 2.5 1.5 3 1 2.5 1 2.5 0.5M150 349l-2.5 0M153 348l-2.5 1 -2.5 1.5M152 351l3.5 1.5M152 353l-3 2M153 346l-0.5 2 0 3 -0.5 2.5 0 2.5M148 346l-1 -3.5M151 347l-3 -1.5 -3 -1M148 351l-2.5 1M148 348l-0.5 3 -0.5 2.5M144 349l-2 -2.5M146 350l-2.5 -1 -2 -1M144 352l1.5 3M153 346l-2.5 0.5 -2 1.5 -2.5 1.5 -2 2 -2.5 2M153 340l2 -0.5M152 343l0.5 -2.5 0.5 -3M150 341l-4 2M148 340l1 -4.5M146 338l-3.5 2M153 346l-1 -2.5 -1.5 -2 -2 -2 -2.5 -1.5 -2 -1.5M157 341l3 1.5M155 343l2.5 -1.5 2.5 -2M155 338l0.5 -2.5M156 340l-1.5 -2.5 -1 -2.5M159 337l2 1.5M157 338l2 -1 2 -1.5M157 335l-2.5 -3M153 346l1.5 -3 1 -2.5 1 -2.5 1 -3 1 -2.5M158 347l1 3M156 345l2.5 1.5 2.5 1.5M159 342l2 -1.5M158 344l1 -2.5 0.5 -2.5M161 343l3.5 1.5M163 342l-1 -4M153 346l3 -1 2 -1 2.5 -1 2 -1.5 2 -1.5M162 352l-2 1M163 349l-0.5 3 -1 3M165 351l5 -1M167 353l0 4.5M170 354l3.5 -1.5M162 347l1.5 2 2 2 2 1.5 2.5 2 2.5 1M157 349l-1.5 -3M161 349l-4 0 -3 0.5M161 354l-0.5 2.5M160 351l1.5 3 2 2.5M156 355l-2 -2M159 354l-2.5 1 -2.5 1M158 357l3.5 3M158 359l-3.5 3.5M162 347l-1.5 2 -1 2.5 -0.5 2.5 -0.5 2.5 -0.5 2.5 0 3M156 347l-1.5 -3M159 348l-3 -1.5 -3 -1M157 353l-2.5 2M157 349l0 3.5 0.5 3.5M153 351l-1.5 -2.5M155 351l-2.5 -0.5 -2.5 -0.5M153 353l0 4.5M151 355l-4 -1.5M162 347l-2.5 1 -2.5 1.5 -2 1.5 -2 2 -2 1.5 -2 2M158 343l1.5 -2M159 346l-1 -2.5 -0.5 -2.5M156 345l-3 3M153 345l-2.5 -3M162 347l-3.5 -1 -2.5 -1 -3.5 -0.5 -3 -0.5M160 342l2 -1.5M160 344l0.5 -2 0.5 -2.5M158 342l-4.5 1M156 340l0.5 -3.5M162 347l-2 -2.5 -2 -2.5 -2 -2 -2 -1.5M164 341l2.5 0M162 344l1.5 -2.5 1.5 -2.5M160 339l-1 -3M162 341l-2 -2 -2 -2M163 338l2.5 -4M163 335l-3.5 -3M162 347l0 -3.5 0 -2.5 0.5 -3 0 -3 0.5 -3M167 346l0 3M164 345l3 1.5 2.5 1M167 344l1 -5M170 342l3.5 1M162 347l2.5 -2 2.5 -1.5 3 -1 2.5 -1.5M166 350l-1 2M164 347l2 2.5 1.5 2.5M169 346l3 0M167 348l2.5 -2 2 -2M171 350l-0.5 3M170 348l1.5 2 1 2.5M173 348l2.5 -2.5M162 347l2.5 0 2.5 0.5 3 0.5 3 0.5 2.5 -0.5M173 352l1 2.5M171 350l2.5 2 2 1.5M174 346l2.5 -1.5M173 349l1 -2.5 0.5 -3M178 350l-0.5 2.5M176 348l2 1.5 2 2M178 347l2 -4M168 351l3 -1 2.5 -1 2.5 -1 2.5 -1 2.5 -1M173 355l-1 3M171 352l1.5 3 1.5 2.5M176 352l3 1.5M174 353l2.5 -1.5 2.5 -1M177 353l1.5 4.5M180 354l3 -3M168 351l3 1 3 1 2.5 0.5 3 0 3 0.5M167 356l-3 -1M169 354l-2.5 1.5 -2 2M170 357l4 2M170 360l-2 2.5M168 351l1 3 0.5 3 1 3 1 3M164 355l-2.5 -1M167 354l-2.5 1 -3.5 2M168 359l0 3M166 356l2.5 3 1.5 2.5M163 360l-2 -1.5M166 359l-3 1 -2.5 1.5M166 363l-0.5 3M165 361l1.5 2.5 1 2M164 364l-4.5 0M168 351l-0.5 2.5 -1 2.5 -1 2.5 -0.5 2.5 -1 2.5 -1 2.5M163 350l-1 -3M166 352l-3 -2 -2.5 -1.5M161 354l-3 0.5M163 352l-2.5 2 -2 2M160 352l-4 -2.5M157 353l-3 2.5M168 351l-2.5 0.5 -3 0.5 -3 0.5 -2.5 0 -3 0M168 346l2.5 -1.5M167 349l0.5 -3.5 0.5 -3M166 346l-5 -0.5M165 344l2 -4M164 341l-4.5 -1M168 351l-1 -2 -1 -2.5 -1 -2.5 -1 -3 -1 -2.5M172 348l2 1M169 349l2.5 -1.5 3 -1M167 344l0 -2M169 346l-2.5 -1.5 -2 -1.5M171 342l2 0M169 344l2 -2 1.5 -2M167 339l1 -2M169 341l-1.5 -1.5 -2 -2M170 338l3.5 -2M168 351l0.5 -2.5 0.5 -2.5 0 -2.5 0.5 -2.5 0 -2.5 0 -2.5M174 355l2.5 4M177 356l4 -2.5M180 356l1.5 3M171 355l3 0 3 1 2.5 0 3 0.5M174 359l-2.5 2M173 357l0.5 2.5 0.5 2.5M176 359l4.5 -1M178 361l-0.5 4.5M171 355l2.5 1.5 2 2.5 2 2 2.5 2M168 359l-2.5 -2.5M171 358l-3 0.5 -3 1M174 362l-0.5 3M171 360l2.5 2 2.5 1.5M172 363l-3.5 4M172 366l3.5 3M171 355l0 2.5 0 3 0.5 3 0.5 3 0.5 3M166 354l0 -3M169 356l-3 -2 -2.5 -1.5M165 360l-1.5 1M166 357l-0.5 3 -0.5 2.5M161 358l-1.5 -3M163 358l-2 -0.5 -2.5 -0.5M161 359l-1.5 4M171 355l-2.5 1 -2.5 1 -2.5 1 -3 1.5 -2.5 1M167 351l1 -3M169 354l-2 -3 -1.5 -2.5M164 356l-2.5 -1M166 354l-2 1.5 -1.5 2M163 353l-2.5 -3M160 353l-2.5 2.5M171 355l-2.5 -1 -2.5 -0.5 -3 0 -3 -0.5 -2.5 -0.5M172 350l2.5 0M171 352l1.5 -2 2 -2M170 349l-3.5 -1.5M170 346l2 -2.5M171 355l-0.5 -3 -0.5 -3 0 -2.5 0 -3M176 353l2 2.5M173 353l3.5 0 3 0.5M174 348l2 -2.5M175 350l-0.5 -2.5 -1 -2.5M177 348l4 1M178 346l-1 -3.5M171 355l2 -2.5 2 -2 1.5 -2.5 1.5 -2 1.5 -2.5M172 362l-2.5 -0.5M175 362l-3 0 -2.5 2M172 360l-1 -3.5M175 362l-3 -2.5 -3.5 -0.5M175 358l2 -3.5M175 362l0 -4 -2 -3.5M177 359l2.5 -1M175 362l2 -3 1 -2.5M178 361l2.5 1.5M175 362l3 -0.5 3 -1.5M178 364l0.5 2.5M175 362l2.5 2 3 1M175 364l-0.5 3.5M176 367l3 -0.5M175 362l0.5 2.5 0.5 2.5 1.5 2.5M173 364l-3.5 0.5M175 362l-2 2 -1 3M179 373l-3 1.5M179 370l0 3 -1 3.5M176 372l-3 -1.5M179 370l-2.5 1.5 -3 2M176 370l-0.5 -4M174 369l-3.5 2M179 370l-2.5 -0.5 -3 0 -2.5 -1M178 367l1.5 -2.5M177 365l-2 -2M179 370l-1 -2.5 -0.5 -2.5 0 -3M180 367l3 -0.5M179 370l1.5 -3 2 -2.5M182 369l1.5 3M184 369l3 -1.5M179 370l2.5 -1 3 0 2.5 1M182 372l-1 2.5M179 370l3 2 2.5 2.5M172 361l3 -0.5M170 365l1.5 -3.5 1.5 -3.5M173 365l2.5 2M176 365l1.5 -3M170 365l2.5 -0.5 3 0 3 0M173 367l-0.5 3.5M170 365l2.5 2 3.5 2M170 367l-2.5 3M171 370l2.5 2.5M170 365l0.5 2.5 0.5 2.5 0.5 2.5M167 367l-2.5 0M170 365l-2.5 2.5 -2.5 3M167 366l-3 -3M165 367l-0.5 2.5M170 365l-3 0.5 -2.5 1 -2.5 1.5M167 363l-1 -3M170 365l-3 -2 -3 -2M169 362l3 -2.5M169 359l-3 -1M170 365l-0.5 -3 -0.5 -2.5 -0.5 -2.5M173 363l-3.5 -1M175 360l-2.5 3 -2.5 2M178 364l0.5 3.5M175 363l3 1 3 1.5M173 366l-2 -1.5M175 365l-2 1.5 -3 0.5M175 368l2 4M175 371l-4 -0.5M174 358l0.5 2.5 1 2.5 0 2.5 -0.5 2.5 0 2.5 -1 2.5M169 360l0 -2M172 361l-2.5 -1 -2.5 -1M170 363l-2.5 4M167 364l-3.5 -2M174 358l-2 2.5 -2.5 2 -2.5 1.5 -3 0.5M170 355l2 -1M171 358l-0.5 -2.5 -0.5 -3M166 359l-2.5 -0.5M168 358l-2 1.5 -2 1M166 357l0.5 -4.5M163 356l-4 -0.5M174 358l-3 0 -2.5 -0.5 -3 -0.5 -2 -1.5 -2.5 -1.5M174 353l3 1M172 356l2 -2.5 2.5 -2M169 352l1.5 -2M171 354l-1.5 -2 -1.5 -2M171 351l4 -2M171 349l-2.5 -3M174 358l-1.5 -2 -1 -2.5 -0.5 -2.5 -0.5 -2.5 0 -2.5M177 354l2.5 2.5M174 355l3.5 -0.5 3 -0.5M174 351l2 -2.5M175 353l-0.5 -2.5 -1 -2.5M177 351l4 1M179 349l1.5 -3.5M174 358l0.5 -2.5 1 -2.5 1.5 -2.5 2 -2 2 -1.5M179 358l-0.5 3M176 357l3 1.5 2.5 1.5M180 354l2.5 -0.5M178 356l2 -2 1.5 -2.5M181 356l2 4.5M186 355l2 1M183 356l2.5 -1.5 2.5 -1M186 356l0.5 5M174 358l2 -1 2.5 -0.5 2.5 -0.5 2.5 0 2.5 0 2.5 1M177 361l-1.5 2.5M176 359l1 2.5 0.5 3M181 359l2 2M179 360l2 -1.5 3 0M181 361l-1 4.5M183 363l3.5 0M174 358l2 1 2.5 0.5 2.5 1.5 2 1.5 1.5 2M178 350l2 -4M177 347l-3 -0.5M180 352l-2 -2.5 -1 -2.5 -1.5 -2.5M181 349l3 -0.5M181 347l-2 -2M180 352l0.5 -2.5 0.5 -3 0.5 -2.5M185 355l-0.5 2M183 352l1.5 2.5 2 2M186 353l2.5 -4M189 353l2.5 3M180 352l2.5 0.5 3 0.5 3 0 3 0M181 355l0 4.5M183 357l3.5 0M180 352l1.5 3 1.5 2 2.5 2.5M178 355l-3.5 2M177 358l1.5 3M180 352l-2 3 -1.5 2.5 -1 3M177 352l-2.5 -4M174 352l-2 3.5M171 352l-2.5 -2.5M180 352l-3 0 -3 0 -2.5 0 -3 0.5M190 348l2.5 0.5M187 351l2.5 -2.5 2 -2M188 348l-3.5 -3.5M188 346l3.5 -2.5M188 343l-2.5 -2M187 353l0.5 -2.5 0.5 -2.5 0 -2.5 0 -2.5 0.5 -2.5M192 355l-1 2.5M190 353l2 2 2.5 1.5M194 350l3 -0.5M193 353l1 -3 1 -2.5M195 353l3.5 3M198 352l2.5 -3.5M187 353l2.5 0 3 -0.5 3 0 3 0 3 0M188 355l-1.5 5M190 358l4 -1M192 360l-0.5 3M187 353l1.5 2.5 1.5 2.5 2 2 2 2M182 354l-1 -1.5M185 355l-3 -0.5 -2.5 -0.5M183 357l1.5 3.5M181 359l-3 1M187 353l-2 2 -2 2 -1.5 2 -2 2.5M183 349l1.5 -3.5M185 352l-2 -3.5 -2 -2.5M180 353l-2 -0.5M182 351l-1.5 1.5 -2 2M179 347l2 -2.5M180 350l-1 -3 -1.5 -2.5M176 351l-2 1M178 349l-2 2.5 -1.5 2M175 349l-3.5 -2.5M187 353l-2.5 -1.5 -2 -1 -2.5 -0.5 -2.5 -0.5 -2.5 -0.5 -2.5 0M196 350l2.5 0M194 352l2 -2 1.5 -2.5M197 352l2.5 2M194 352l3 0.5 3.5 -0.5M196 355l-0.5 2.5M194 352l1.5 2.5 2 2.5M193 355l-3 1.5M194 352l-1 3 -1 3M191 353l-3 -2M194 352l-3 0.5 -2.5 2M192 349l0.5 -3.5M194 352l-2 -3 -3 -2.5M194 349l2.5 -2M194 352l0.5 -3 -1 -2.5M199 350l1.5 4.5M202 351l3 -2.5M205 352l1 3.5M197 349l2.5 1 2.5 1 2.5 0.5 3 0.5M194 353l-2.5 -1M197 352l-3 1 -2 2M199 356l0 2M196 354l3 1.5 2 1.5M196 357l-3.5 1.5M196 359l1 3.5M197 349l-0.5 2.5 0 2.5 -0.5 3 -0.5 2 -0.5 2.5M191 349l-1 -2M194 350l-3 -0.5 -2.5 -1M191 351l-1 4.5M188 352l-3.5 -1.5M197 349l-3 1.5 -3 1 -3 0.5 -3 1M196 344l2 -0.5M195 347l0.5 -3 1 -3M191 345l-2 -2M193 345l-2.5 0 -2.5 0.5M192 343l1.5 -4M190 341l-4 -0.5M197 349l-2 -2 -1.5 -2 -1.5 -2 -1.5 -2.5 -1.5 -2M201 347l2.5 2M198 347l3.5 0 3 0M199 342l2 -1.5M200 345l-1 -2.5 -1 -2.5M201 343l5 0.5M203 341l-2 -4M197 349l1 -2 2 -2 1.5 -2 1.5 -2.5 1.5 -2.5M202 346l-3 4M203 349l4 2M199 344l2.5 2 2 2.5 1 3.5M198 347l-4 1M197 350l0 3.5M199 344l-1 3 -1.5 3 -2 2.5M196 344l-2.5 -3.5M193 344l-3.5 1.5M199 344l-3 0 -3 0 -3 -1M197 342l1 -3.5M195 340l-2.5 -1.5M199 344l-2 -2 -1.5 -2 -1.5 -2.5M200 341l4 -0.5M201 339l1.5 -4.5M203 337l3 2M199 344l1 -3 1.5 -2.5 2 -1.5 2.5 -1.5M202 343l3 3M206 342l2 -2M199 344l3.5 -1 3 -0.5 3.5 0.5M206 342l-3.5 2M206 339l-0.5 3.5 -0.5 3M203 341l-2 -1M206 339l-3 2 -3 1M203 337l-1 -2.5M206 339l-3 -1.5 -3 -2M205 335l3 -1.5M206 339l-0.5 -3.5 -0.5 -3.5M207 337l3 -0.5M206 339l1.5 -2.5 2 -2M208 338l3 2.5M211 338l1.5 -2M206 339l2.5 -0.5 2.5 -0.5 2.5 -0.5M208 342l-2 3M206 339l2 3 1.5 3M214 341l-1 2.5M211 339l3 2.5 2 2.5M211 343l-3.5 0M211 339l0 4 -2.5 3M208 340l-2 -3M211 339l-3 1.5 -3.5 -0.5M209 337l2 -2.5M211 339l-1.5 -1.5 -1 -3M212 336l3 -0.5M211 339l1 -3 2 -2.5M214 339l2 1.5M211 339l3 -0.5 3 0M218 340l3 0M217 342l1 -2 1.5 -2.5M215 340l-4 -0.5M214 337l1 -3.5M218 345l-1 -3 -1.5 -2.5 -1.5 -2.5 -1.5 -2.5M219 343l4.5 -2M221 340l-2 -2.5M218 345l1.5 -2.5 1.5 -2.5 1.5 -3M222 346l1 2M221 345l1.5 1 2 1.5M223 344l1 -4.5M226 343l4 0.5M218 345l2.5 -0.5 3 -0.5 2.5 -1 3 -1.5M219 347l-0.5 4.5M221 349l3.5 -0.5M223 351l0.5 3M218 345l1.5 2 1.5 2 2 1.5 1.5 2M217 348l-3 2.5M217 351l3 2.5M218 345l-1 3.5 0 3 0 3M213 347l-2.5 -2M215 347l-2.5 0.5 -2.5 0M213 349l2 4.5M211 352l-4 0.5M218 345l-2.5 2 -2.5 2.5 -2 2 -2 2.5M215 344l-2 -3.5M212 343l-3 2M218 345l-3.5 -1 -2.5 -1 -3.5 -1M221 344l-0.5 3.5M224 346l3 -0.5M219 342l2.5 2 2 1.5 2 2.5M220 345l-1 2.5M221 347l3.5 2M219 342l1 2.5 1.5 2.5 1 2.5M217 345l-4 1M216 348l1.5 3M219 342l-1.5 3 -1.5 3 -1.5 3M216 343l-2 -2.5M214 343l-1.5 2.5M219 342l-2.5 1 -3 0 -2.5 0M215 342l-0.5 -3M219 342l-3.5 0 -3.5 -1.5M218 340l2 -3.5M217 337l-3 -1M219 342l-1 -2.5 -1 -2.5 -1 -2.5M220 340l4 -1M222 337l-1 -3M219 342l1.5 -2.5 1 -2.5 1.5 -2.5M221 341l4.5 1.5M224 340l0.5 -3M219 342l2.5 -1 2.5 -1 2.5 -1M226 340l-3 -0.5M227 338l-1.5 2 -1 2.5M228 340l5 1M229 342l1 5M231 344l3.5 -1M227 335l0.5 2.5 0.5 2.5 1.5 2 1 2.5 1.5 2M225 337l-4.5 -1M222 339l2.5 3M227 335l-2.5 1.5 -2 2.5 -2 2.5M227 329l3.5 -1M226 332l1.5 -2.5 0.5 -2.5M225 329l-4.5 0.5M223 327l0.5 -4.5M227 335l-0.5 -3 -1.5 -2.5 -2 -2.5 -2 -2.5M229 333l4.5 -0.5M231 331l-3 -3.5M232 329l2.5 -1.5M227 335l2 -2 1.5 -2 1.5 -2 1 -2.5M231 338l1 3.5M230 336l1.5 2.5 2 1.5M232 337l3 -4M235 337l2.5 3.5M237 337l1.5 -3M227 335l2.5 1 2.5 0.5 2.5 0.5 2.5 0 2.5 -0.5M231 333l0.5 -4M234 333l-3 -0.5 -3 -1.5M233 330l2 -3M234 333l-1.5 -3 -0.5 -3.5M235 330l3.5 0M235 327l-1.5 -3M234 333l1 -3 0.5 -3 1 -2.5M237 332l4 2M240 330l1.5 -2.5M234 333l3 -1.5 3 -1 3 -1M238 334l1 3M234 333l4 1.5 3 1.5M236 337l-2 2.5M234 333l2 3.5 1 3.5M234 336l-4.5 0.5M233 339l1 3.5M234 333l-0.5 3 -1 3 -1.5 2.5M232 335l-3 -2.5M229 336l-1 3M234 333l-2 1.5 -2.5 1.5 -3 0.5M240 328l3.5 2M243 326l2 -2M238 329l2.5 -1.5 2.5 -1 3 -1.5M240 331l0 4M243 332l3.5 -0.5M245 334l-0.5 3M238 329l2.5 1.5 2 1.5 2.5 1.5 2 2M237 334l-3 -0.5M239 332l-2.5 2 -2 1.5M239 335l3 3M240 338l-3 1M238 329l0.5 3 0.5 2.5 0.5 3 0.5 3M236 332l-4 -2M233 334l-0.5 3.5M238 329l-2.5 2.5 -2.5 2 -2.5 1.5M235 328l-0.5 -4M233 326l-3 -0.5M238 329l-3 -1 -2 -2 -2 -2.5M240 325l2 1.5M237 326l2.5 -1.5 2.5 -1M238 324l-2.5 -4M239 321l4 -0.5M238 329l-0.5 -2.5 0.5 -3 0.5 -2.5 1 -3M245 324l2 -2M244 327l0.5 -3 -0.5 -3M239 326l-2 -2M242 325l-2.5 0.5 -3 1M240 323l-1.5 -4M238 322l-3.5 1.5M246 329l-2 -2 -1.5 -2 -2.5 -1.5 -2 -2 -2.5 -1M247 327l4.5 -2.5M248 324l-4 -2.5M248 321l2.5 -2.5M246 329l1 -2.5 0.5 -2.5 0 -3 -0.5 -2.5M251 330l0.5 3M249 329l2.5 1.5 2.5 1M252 326l2 -2M251 328l1 -2.5 0.5 -2.5M254 327l4.5 0M256 325l-1 -4M246 329l2.5 0 3 -1 2 -1 2.5 -1.5 2 -2M248 331l-0.5 5M250 333l4 -0.5M252 335l0 3.5M246 329l1.5 2.5 2 2 2 1.5 2.5 1.5M242 333l-2.5 -0.5M245 332l-2.5 1 -2.5 1.5M244 335l3.5 2M244 337l-2.5 3M246 329l-1.5 3 -0.5 2.5 -0.5 3 0.5 2.5M241 327l0.5 -2.5M243 329l-1.5 -2 -2.5 -2M239 332l-3 1M241 329l-2 3 -1 2.5M238 330l-4 -2M235 331l0 4M246 329l-2.5 0 -3 0.5 -2.5 0.5 -2.5 1 -2.5 1.5M255 330l-0.5 3M254 328l1.5 2 1 2.5M257 329l4 -3.5M260 329l2.5 3M251 327l3 1 3 0.5 3 0.5 3 0M252 330l-2 4M253 332l3.5 2M254 335l-1.5 3M251 327l1 2.5 0.5 3 1 2.5 1 3M247 330l-2 -1M250 330l-3 0 -3 0.5M251 335l-1 1.5M250 332l1 2.5 1.5 2M247 336l-3 -0.5M249 335l-2.5 1.5 -2 1M249 338l3.5 2M251 327l-1 2.5 -0.5 3 -0.5 3 0 2.5 0 3M245 327l-0.5 -2.5M249 328l-3.5 -0.5 -3.5 -0.5M247 333l-2 1.5M246 330l0.5 3 0.5 2.5M241 331l-1.5 -2.5M244 332l-2.5 -1 -3 0M242 334l0 3.5M251 327l-2.5 1 -2.5 2 -2 2 -2.5 1.5 -2 2M247 324l0.5 -3.5M249 326l-2 -2.5 -1.5 -2M244 327l-2.5 -0.5M246 326l-2 1 -2.5 1M244 325l-3 -3M241 325l-2.5 2.5M251 327l-2.5 -1 -2.5 -0.5 -2.5 0 -2.5 0 -2.5 0M250 322l2.5 -1.5M250 324l0.5 -2.5 0.5 -2.5M249 322l-4.5 0M247 319l0.5 -3.5M251 327l-1 -3 -1.5 -2 -1 -2.5 -1.5 -2.5M252 324l5 -1.5M253 321l-3 -2.5M254 319l2.5 -3.5M251 327l1.5 -3 0.5 -2.5 0.5 -3 0.5 -3M254 326l4.5 2M257 325l0.5 -4M259 324l3.5 0M251 327l3 -1 2.5 -1 2.5 -1.5 2.5 -1.5M254 324l-1.5 -4M251 324l-2 2.5M256 325l-2.5 -1.5 -2.5 0 -3 0.5M255 322l-0.5 -4.5M253 319l-4 1.5M256 325l-1.5 -3 -2 -2.5 -2 -2M258 322l3.5 -0.5M259 319l-1.5 -2.5M256 325l1.5 -3 1.5 -3 1 -2.5M259 323l4 0.5M262 321l-1 -3.5M256 325l3 -2 2.5 -2 2 -2.5M259 326l2 3M262 327l1.5 -2.5M256 325l3 0.5 2.5 1 3 0.5M258 327l-1 4.5M260 330l3 -1.5M256 325l2 2.5 2 2 2 2.5M254 327l-3.5 0.5M253 330l3 2.5M256 325l-1.5 2 -1.5 3 -1 2.5M254 326l-4 -1M251 327l0.5 3M256 325l-2.5 0.5 -2 1.5 -2 2M261 324l-1.5 -3M263 325l-2.5 -1 -2.5 -0.5M260 329l-2.5 1M261 326l-1.5 3 0 3M256 327l-2 -1.5M258 328l-2.5 -0.5 -2.5 -0.5M256 330l1 3.5M266 324l-3 1.5 -2.5 1 -2.5 1.5 -2 1.5 -2 2M263 319l2 -2M264 323l-0.5 -3.5 -0.5 -3.5M259 321l-2 -1.5M262 321l-3 0 -2.5 1M259 319l-1 -4M257 317l-3 3M266 324l-2.5 -1.5 -2 -2 -2 -1.5 -2.5 -1.5 -2.5 -1M268 320l3 0M266 322l2 -2 1.5 -2M263 319l-1 -3M266 319l-3 -0.5 -2.5 -0.5M265 317l1.5 -4M264 314l-3.5 0.5M266 324l0 -2 -0.5 -2.5 0 -2.5 -1 -2.5 -1 -2.5M271 323l1 2.5M268 322l3 1 3 0M269 318l1.5 -2.5M270 321l-1 -3 -1 -2.5M274 318l2 2.5M272 319l2.5 -0.5 2.5 -0.5M274 317l-2 -4M266 324l1.5 -1.5 2 -2 2 -2 2 -2 2 -2M268 325l1 5M271 326l2.5 -3M273 326l2 3M266 324l2 1.5 2.5 0.5 2.5 0 2.5 0.5M266 329l-2.5 1M267 327l-1.5 2.5 -0.5 2.5M271 329l2 1.5M268 329l3 0 3 -0.5M270 331l0 4.5M272 333l3 -1M266 324l1 3 1.5 2 1.5 2 2 2 2 2M261 327l-2.5 -1.5M264 326l-3 1 -3 1M263 331l-0.5 2.5M262 328l1 3 1 2M261 331l-5 0.5M259 333l2.5 3M266 324l-2 2.5 -2 2 -1.5 2 -1.5 2.5 -1 2M270 326l-3.5 2.5M270 329l2 1M269 324l1 2.5 0 2.5 0 2.5M268 327l-3.5 0M269 324l-1 3 -1.5 3M267 323l-2 -2.5M264 323l-2 2.5M269 324l-2 -0.5 -2.5 -0.5 -2.5 0M267 321l0.5 -4M269 324l-2 -3 -2.5 -3M270 321l4 0M272 318l-2 -2.5M269 324l1.5 -3 1 -2.5 2 -2.5M272 322l3.5 2M275 321l0 -4M269 324l3 -2 2.5 -1.5 2.5 -1.5M272 325l0 4M274 326l3.5 -0.5M269 324l3 1 2.5 1.5 2 1.5M277 321l5 0M279 318l0.5 -3.5M276 324l1 -3 2 -2.5 2.5 -2M278 323l3 3M281 323l3 -1.5M276 324l2.5 -1 2.5 0 2.5 1M277 326l-2 3.5M279 328l3 2M280 331l-3 1.5M276 324l1.5 2 1.5 2 0.5 2.5 1 2.5M273 327l-2 -1M275 327l-2 0.5 -2.5 0.5M275 329l1 4M274 332l-4 -1M276 324l-0.5 2.5 -1 2.5 -1 2.5 -1.5 2.5M273 324l-2 -3.5M271 324l-4 2M268 324l-1 -3M276 324l-3 0 -2.5 0 -2.5 -0.5 -2.5 -0.5M275 319l2 0M274 322l0.5 -2.5 1 -2.5M273 319l-4 -2M272 317l1.5 -3M276 324l-2 -2 -1.5 -2.5 -1 -2.5 -0.5 -3M288 323l3.5 1M290 321l0.5 -3M285 325l2.5 -2 2.5 -1.5 2.5 -1.5M289 325l0 3M285 325l4 0.5 3.5 0.5M287 327l-2 3.5M288 330l4 0M285 325l2 2 1.5 2.5 1 2.5M285 328l-4.5 0.5M284 331l1.5 3M285 325l0 2.5 -0.5 3 -1 3M283 325l-2.5 -3M280 325l-3 1.5M285 325l-2.5 0 -3 0 -3 -0.5M283 322l0.5 -2.5M285 325l-2.5 -2.5 -2 -3M285 321l3 -2M285 325l0.5 -4 0.5 -3.5M285 327l4 -2.5M285 325l-3.5 -2.5M285 322l3 -1.5M285 330l0 -2.5 0 -2.5 0.5 -3 0 -2.5M289 331l0 2.5M287 329l2 2 2 2M290 329l1.5 -4.5M292 328l3.5 2.5M294 327l2 -3M285 330l2 -1 2.5 -0.5 2.5 -1 2.5 -0.5 2 -0.5M287 334l-2 2M287 331l0 3 0.5 2.5M292 332l1.5 2M289 333l2.5 -1 3 -0.5M291 334l0 4M293 336l4 -1M285 330l2 1.5 2 1 2 1.5 2 2 2 1M282 335l-3.5 -1M284 333l-2 1.5 -2.5 2M286 338l-2 3M284 336l1.5 2 1.5 2M282 340l-2 0.5M284 339l-1.5 1.5 -2 1.5M284 341l3 2.5M285 330l-0.5 3 -0.5 2.5 0 3 0 3 -0.5 2.5M282 331l-3 -2.5M280 332l-1 4M278 333l-3 -1.5M285 330l-2.5 1 -2.5 1 -2.5 1.5 -2 1M282 326l3 -2M283 329l-1 -3.5 0 -2.5M280 327l-3.5 2.5M278 326l0 -4.5M276 324l-3.5 1M285 330l-2.5 -1.5 -2 -1.5 -2.5 -1.5 -2 -1 -2.5 -1M282 323l3 1.5M279 325l3 -1.5 2.5 -1M280 322l-5 -2.5M280 319l3.5 -2.5M279 328l0.5 -3.5 0 -3 0.5 -3 0 -3M284 326l2 1.5M281 326l3 -0.5 3 0M283 324l0.5 -4.5M285 322l3.5 1M287 321l-1 -4.5M279 328l2 -2.5 2 -1.5 1.5 -1.5 2 -2 2 -2M283 332l-1 2.5M282 329l0.5 3 1 3M287 329l1.5 1M284 330l2.5 -1.5 2.5 -1.5M287 331l0.5 4.5M290 332l3 -3M279 328l2.5 1 2.5 1 3 1 2.5 1 2.5 1M278 333l-3.5 -0.5M279 330l-1 2.5 -1.5 2.5M280 333l3 3M280 336l-3.5 2.5M279 328l0.5 2.5 0 3 0.5 2.5 0 3M273 328l-1.5 -3M277 329l-3.5 -1 -3.5 -1M274 334l-2 2M274 330l0.5 3.5 0 3.5M269 331l-0.5 -3M272 332l-2.5 -1 -3 -0.5M269 336l-2 0M270 333l-1 2.5 -0.5 2.5M267 334l-3 -2.5M279 328l-2 1 -2.5 1.5 -2.5 1 -2 1.5 -2.5 1 -2.5 1.5M276 323l1 -2.5M277 326l-1.5 -3 -1 -3.5M271 326l-1.5 -2M274 325l-3 1 -3 0.5M271 321l2 -2.5M272 324l-0.5 -3 -1 -3M270 322l-4.5 2M268 321l-1 -4.5M279 328l-2.5 -1.5 -2 -1.5 -2.5 -1.5 -2 -1 -2.5 -1.5 -2 -1.5M270 321l1 -3M273 323l-2.5 -1.5 -2 -3M273 320l4 -1M273 323l0.5 -3 0.5 -3.5M276 321l2.5 1M273 323l2.5 -2 3.5 -1M276 323l1 3.5M278 324l3 -2M273 323l2.5 0.5 2.5 0 2.5 1M275 325l-1.5 3.5M277 327l2 0.5M273 323l2 2 1.5 2 1 2.5M273 327l-2 2M273 323l0.5 4 -1 3.5M271 326l-3.5 -1.5M273 323l-2 2.5 -3 2M270 324l-1.5 -3M273 323l-3 0.5 -3 -0.5M270 321l-2 4M272 323l3.5 1.5M273 326l-2.5 2M268 319l2 2 1.5 2 1 2.5 1 3M264 322l-1.5 -2M267 322l-3 0 -2.5 -0.5M266 327l-2 1M266 324l0.5 2.5 -0.5 3M264 326l-4 -1.5M262 328l-0.5 4M268 319l-1 3 -1 2 -1.5 2 -2 2 -2.5 1M263 318l1.5 -3M265 320l-1.5 -2 -1.5 -2.5M262 324l-3.5 -0.5M263 321l-1.5 2.5 -1.5 2.5M260 322l-1 -5M258 321l-3 2.5M268 319l-2.5 1.5 -2.5 0.5 -2.5 0.5 -2.5 0 -2.5 -0.5M266 314l2.5 0M265 318l0.5 -3.5 1.5 -3M260 316l-2.5 -2M263 316l-3 0 -3 -0.5M263 311l2 1M261 313l1.5 -2 1.5 -2M260 310l-3.5 -2.5M268 319l-3 -1.5 -2 -2 -2 -2.5 -1 -2.5 -0.5 -3M272 316l1.5 2.5M268 316l3.5 -0.5 3.5 0.5M269 311l2.5 -1.5M270 314l-1 -3 0 -3M274 311l1.5 2M271 311l3 0 2.5 0.5M273 309l1.5 -4M268 319l0 -2.5 1.5 -3 1.5 -2 2 -2.5 2 -2M272 320l-1 2.5M270 318l2 2.5 2 2.5M274 314l3 0M273 317l1.5 -2.5 2 -2.5M277 318l-1 2.5M276 316l1 2.5 1 2.5M279 316l3.5 -1.5M268 319l2 -1 3 -1 2.5 -1 3 0 3 1M265 317l1.5 3.5M268 318l2.5 -2.5M262 317l2.5 0.5 3 0 3 1M263 319l-1.5 5M265 321l5 0.5M267 324l-2.5 3.5M262 317l1 2 2 2.5 1.5 2.5 1.5 2.5M261 319l-5 1.5M260 322l3 2.5M259 324l-3.5 1.5M262 317l-1.5 2 -1 2.5 -1 2.5 -0.5 2.5M259 317l-3.5 -2M256 318l-1.5 3.5M262 317l-3.5 0.5 -3 0.5 -3 0.5M259 315l-0.5 -5M257 313l-4 1M255 311l-0.5 -3M262 317l-2.5 -2.5 -2.5 -1.5 -2.5 -1.5 -2 -2M261 313l2 -3M260 310l-3.5 -1M262 317l-1 -3.5 -1.5 -3 -1.5 -3M266 314l1.5 3M263 314l3 0.5 2.5 0M264 312l-2 -4.5M266 309l3 -0.5M262 317l1 -3 1.5 -2.5 1 -2.5 1 -2.5M252 309l-0.5 -3M255 311l-3 -1.5 -3 -2M254 308l1.5 -2.5M255 311l-0.5 -3 -1 -3.5M257 309l3 -0.5M255 311l2 -2.5 2 -2.5M258 311l2 2M255 311l3 0 3 -0.5M257 313l1 3M259 314l2 -1M255 311l2 2 2 1.5 2 1M256 315l-2 2M255 311l1 3.5 1 3.5M254 314l-3 -0.5M255 311l-1.5 3 -1 2.5M251 312l-1.5 -2.5M255 311l-3.5 0.5 -3.5 1M247 309l-3.5 2.5M246 312l3.5 3M246 315l-3 2M249 307l-2 2.5 -1 2.5 -0.5 2.5 0 3M246 307l-3.5 -1.5M243 309l0 3.5M249 307l-3 0.5 -2.5 1.5 -2.5 2M248 304l0 -4.5M246 302l-4 1M245 300l-1.5 -4M249 307l-1 -2.5 -1.5 -2.5 -2 -2.5 -2.5 -1.5M250 304l3.5 -2.5M250 301l-2.5 -1.5M249 307l1 -2.5 0.5 -3 0 -3M252 307l2.5 3M254 307l0.5 -4M257 306l3 1M249 307l2.5 0 2.5 0 2.5 -0.5 2.5 -1.5M250 312l-2 1.5M251 310l-1 2 0 2.5M253 312l4 -2.5M255 313l2.5 4M249 307l1.5 2.5 2.5 2 2.5 2 3 0.5M246 300l-3 1.5M246 297l0 3 0 3.5M244 299l-2 -1M246 297l-1.5 2 -2.5 2M244 297l-3 -3.5M241 296l-1.5 3M246 297l-2.5 -0.5 -2.5 0 -2.5 0M245 294l1 -3M246 297l-1 -3 -1.5 -3M247 293l3.5 -1M246 297l1.5 -3.5 1.5 -3.5M250 296l2.5 1M246 297l3.5 -1.5 3.5 -1M248 298l1 3.5M250 300l4 -1M246 297l2.5 1 2 2 2 1.5M248 288l3 -2.5M248 285l-2 -2M249 290l-0.5 -2.5 -1 -2.5 0 -3M250 288l5 0.5M251 286l1 -4.5M253 283l2.5 1.5M249 290l1 -2 1 -2.5 1.5 -2 2 -2M252 289l3 3.5M255 289l2.5 -2.5M249 290l3.5 -0.5 3 -0.5 3 0M251 292l-1 3M253 294l2.5 1M249 290l2.5 2 1.5 2 1 2.5M250 293l-4 1.5M250 296l1 2.5M249 290l0.5 3 0 2.5 -0.5 3M248 292l-4.5 -2M245 293l-2 4M243 294l-2 -2M249 290l-1.5 2 -2 1.5 -2.5 1 -2.5 0.5M246 290l-1.5 -4M243 289l-4 0.5M249 290l-3 0 -3 -1 -2.5 -2.5M245 279l1 -2.5M245 281l-0.5 -2.5 0 -2.5M242 280l-3.5 2M239 279l-1 -3.5M247 283l-2.5 -1.5 -2.5 -1.5 -3 -1 -2.5 -1M247 280l3 -3.5M246 277l-5 -0.5M245 275l2 -3.5M247 283l-0.5 -3 -0.5 -2.5 -1 -3 -1 -2.5M249 281l4 -0.5M250 279l-1.5 -3.5M252 277l3 -1M247 283l2 -2 1.5 -2 1 -2.5 1 -2M250 287l-1 1.5M250 284l0 2.5 1 2.5M252 285l4.5 -2M255 287l1 2.5M247 283l2.5 1 2.5 1.5 3 1 2.5 1.5M248 286l-2 3.5M249 288l3 1M247 283l1 2.5 1 3 1 2.5M245 285l-4.5 -1M243 287l1 2.5M247 283l-2 1.5 -2 2 -2 2.5M250 276l2.5 3M253 276l0.5 -3.5M247 276l2.5 0 3.5 0 2.5 -1.5M249 277l2.5 4.5M252 279l2.5 -3.5M247 276l2.5 1.5 3 1 3 0.5M247 278l-3 3.5M247 281l3 1M247 276l-0.5 2.5 0.5 2.5 1 2.5M244 278l-4.5 0M243 281l1.5 3M247 276l-3 2 -1.5 2.5 -1 3M244 276l-3.5 -3M241 276l-0.5 3.5M247 276l-3 0 -3 0.5 -2.5 1M244 275l-2 -3M242 274l-2 2.5M247 276l-3 -1.5 -2.5 -0.5 -2.5 0M246 273l1 -4M245 270l-3.5 1.5M247 276l-1 -3 -1 -2.5 -2 -2.5M248 274l4 -1.5M249 271l-2.5 -2M247 276l1.5 -2.5 1 -2.5 0.5 -3M249 270l-2 -2.5M246 270l-1 2.5M252 270l-3 0 -2.5 0 -2.5 0.5M249 267l-0.5 -2.5M252 270l-2.5 -2.5 -3 -2M252 267l3 -2.5M252 264l-3.5 -0.5M252 270l0 -3 0 -3 -1 -2.5M254 268l3.5 0M252 270l2.5 -2 2.5 -2.5M254 271l2 3.5M257 272l2.5 -3M252 270l2.5 1 3 0.5 3 0.5M253 273l-2.5 3.5M252 270l0.5 3.5 1.5 3M250 273l-3 1M252 270l-2 2.5 -1 3.5M250 263l-3.5 -1.5M247 264l-0.5 3M252 264l-2.5 -0.5 -2.5 0.5 -2.5 1M252 261l2 -3.5M252 259l-4.5 0M251 257l0 -4M252 264l0 -2.5 0 -2.5 -1 -2.5 -1.5 -2M255 263l4 1M257 261l-1.5 -3.5M259 260l3 -1.5M252 264l2.5 -1 2.5 -1.5 2 -2 1.5 -2M255 266l2 3.5M258 267l2 -3M252 264l3 1.5 3 1.5 3 0.5M252 267l-1.5 3.5M253 269l4 0M252 264l0 3 1.5 2.5 1.5 2M250 266l-4 1M248 269l2.5 1.5M252 264l-2 2 -2 2.5 -0.5 3.5M263 259l1 2.5M261 258l2 1.5 2.5 1M263 257l0 -5M266 256l4 0M258 260l2.5 -1.5 3 -1.5 2.5 -1.5 2.5 -2M260 265l-2 1.5M260 262l-0.5 2.5 0 3M265 263l1.5 1M262 264l2.5 -1 2.5 -1M265 267l-1.5 3M265 265l0 2.5 1 2.5M267 266l3 -3.5M258 260l2 1.5 2 2 2.5 1.5 2.5 1 3 0.5M253 262l-3.5 -2M256 262l-3.5 0 -3.5 0.5M256 268l-1.5 2M255 264l1 3.5 1 3.5M250 267l-3 -1.5M253 267l-3 0 -3 1.5M252 271l-2 3M251 269l1 2.5 0.5 2.5M248 273l-2.5 -1.5M250 271l-2 1.5 -2 1.5M258 260l-2 2 -1.5 2.5 -1.5 2 -1.5 2.5 -1.5 2.5 -1 2.5M253 256l0.5 -2.5M255 259l-2 -3 -2.5 -2M250 260l-3 0.5M252 259l-2 1.5 -2 2M249 258l-3.5 -3M246 258l-2.5 4M258 260l-3 -1 -3 -0.5 -3 0 -3 0 -3 0M259 254l3 0M258 257l1.5 -2.5 1 -3M255 253l-1 -2M257 254l-2.5 -1 -2.5 -0.5M257 251l1.5 -3.5M256 248l-4 -0.5M258 260l-0.5 -3 -0.5 -3 -0.5 -2.5 0 -3 -1 -2.5M268 260l-1.5 2M267 257l1 3 0.5 2M270 259l4 -2.5M272 260l1 3.5M265 255l2.5 2.5 2.5 1.5 2.5 1.5 2.5 1M265 259l-3.5 2.5M264 262l3.5 1M265 255l-0.5 3.5 0 3.5 0.5 3M261 254l-1 -2.5M263 256l-2.5 -1.5 -2 -2M260 258l0 4M258 259l-4.5 0.5M256 261l0.5 3.5M265 255l-2.5 1.5 -2 1 -2 1.5 -2 1.5 -2 2M261 252l1 -3M262 254l-1 -2.5 -2 -2M260 253l-4.5 3M257 252l-1.5 -3.5M265 255l-2.5 -1 -3 -1 -3 -1 -2.5 -1M265 253l3 -4M265 250l-4 -1M265 248l1.5 -3M265 255l0 -2 0 -3 0 -2.5 -1 -2.5M270 255l1.5 1.5M268 254l2 0.5 3 0M270 253l0 -4.5M273 252l3.5 0M265 255l2.5 -0.5 2.5 -1.5 2.5 -1.5 2.5 -1.5M269 253l-2 -3M266 254l-2 2.5M272 252l-3 1 -3 0.5 -3.5 0M271 250l2 -3M270 247l-2.5 -2M272 252l-1.5 -2.5 -1 -2.5 -0.5 -3M274 250l4 1M276 248l1 -3M272 252l2 -2 2 -1.5 2.5 -1M275 253l0 3.5M277 254l2.5 -1M272 252l2.5 1 2.5 1 2.5 2M272 255l-3 2M271 257l1.5 3.5M272 252l-0.5 3 -0.5 2.5 -1.5 2.5M276 245l4.5 0.5M278 243l0 -4.5M280 241l2.5 1M274 247l2 -2.5 2 -1.5 1.5 -2 2.5 -1M277 247l1.5 4.5M280 248l4 -2M283 249l0.5 3.5M274 247l3 0 3 0.5 2.5 1 3 1M274 251l-2.5 1M275 249l-1 2 -1.5 2.5M279 252l0 3M277 251l2 1.5 2 1.5M278 253l-3.5 3.5M279 256l3.5 1M274 247l1.5 2 1 2 1 2.5 1 2.5 1 2.5M270 249l-2 -2.5M273 249l-3 0 -3 0M272 253l-2 2M271 251l1 2 0 3M269 252l-4 -1.5M267 254l-0.5 3.5M274 247l-1.5 1.5 -1.5 2 -1.5 2 -2 1.5 -2 1.5M271 247l-3 -3.5M269 247l-4 2.5M266 247l-1 -3M274 247l-2.5 0 -3 0.5 -3 -0.5 -2.5 -0.5M274 242l2 -0.5M272 244l1.5 -2 1.5 -2.5M271 241l-4 -1.5M270 238l3 -2M274 247l-1.5 -3 -1.5 -2.5 -0.5 -3 -0.5 -3M281 250l-1 2.5M281 247l0 2.5 0.5 3M283 248l4 -2M286 249l0.5 4M278 246l2.5 1 3 1 2.5 1.5 2.5 1M278 248l-2.5 4.5M279 251l3.5 2M279 253l-2 3M278 246l0 2.5 0.5 2.5 0.5 2.5 0.5 2.5M273 248l-1.5 -3M276 248l-3 -0.5 -3 0M273 250l0.5 4M271 251l-3.5 -0.5M278 246l-2.5 2 -2.5 1.5 -2 2 -2.5 1.5M275 245l-0.5 -4M273 245l-3.5 1.5M270 244l-1.5 -2.5M278 246l-3 -1 -2.5 -0.5 -2.5 -0.5 -2.5 -0.5M277 243l3 -3M277 239l-2 -2.5M278 246l-0.5 -3.5 0 -3 0 -3.5M280 244l4.5 -0.5M283 242l1.5 -3M278 246l2.5 -2.5 2.5 -1.5 3 -1.5M284 239l1 -2.5M285 241l-1 -2 -1 -2.5M286 238l2.5 -2M285 241l1.5 -3 1 -3.5M288 240l2.5 1.5M285 241l3 -1 2 -1M288 242l1.5 3M285 241l3 1.5 3 0.5M286 244l-1.5 2.5M285 241l1 3 1 2.5M284 244l-3.5 0M285 241l-1.5 3 -1 2.5M282 241l-2 -2M285 241l-3 0.5 -3.5 0.5M288 229l1.5 2M285 230l2.5 -0.5 3 -0.5M286 227l-2 -4M288 225l3.5 2M285 233l0 -2.5 1 -3 1.5 -3 2 -2M287 232l3.5 2.5M289 230l1 -4.5M291 228l2.5 2.5M285 233l1.5 -1.5 2 -1.5 2 -2 2.5 -1M287 234l1 3.5M290 235l4 -1M292 236l-1 3M285 233l2.5 0.5 2.5 1 2 1.5 1.5 2M286 238l-2.5 1M287 235l-1 3 -1 2.5M288 238l4 1.5M289 241l-3.5 1M285 233l2 2.5 1.5 2.5 0.5 2.5 1 3M285 236l-4.5 2M285 239l2 4M284 242l-4 -0.5M285 233l0 3.5 -0.5 2.5 -0.5 3 -1.5 2.5M282 236l-3 -2.5M280 237l-2.5 3M285 233l-2.5 2.5 -3 1.5 -3 1M281 231l1 -1.5M282 234l-1 -3 -1 -2.5M279 233l-3 3M276 233l-0.5 -3.5M285 233l-3 0.5 -3 0 -2.5 -1 -3 -1M283 231l1 -4M281 228l-3 -2.5M285 233l-2.5 -2 -1.5 -2.5 -1 -3M282 228l0 -3M285 230l-3 -1.5 -2.5 -1M285 226l2.5 -2M285 230l0.5 -3.5 -0.5 -4M287 229l4 0.5M289 227l-0.5 -2.5M285 230l2 -1 2 -1.5 2 -2M287 232l1 3.5M285 230l2 2 3.5 1.5M284 233l-3 3M285 230l-1 3.5 -0.5 3.5M282 231l-2.5 -1M285 230l-3 1 -2.5 2M292 222l-1.5 4M294 224l2.5 0.5M289 221l3 1 2 2.5 1 2.5M290 223l-3.5 0.5M289 226l2 2M289 221l0.5 2 0 2.5 -0.5 2.5M286 220l-1 -3M289 221l-3 -0.5 -3.5 -1.5M288 217l2.5 -2.5M289 221l-1.5 -3.5 -0.5 -4M292 218l2.5 1M289 221l2.5 -3 3 -2M296 216l3.5 -2M296 213l-2.5 -0.5M295 219l1 -2.5 0.5 -3 -0.5 -3M298 219l3.5 1.5M301 218l0.5 -3.5M295 219l3 0 3 -1 2.5 -1.5M297 222l-0.5 4.5M299 224l3 -0.5M295 219l1.5 3 2 2 2.5 1.5M293 221l-4.5 1M292 223l2.5 3M291 226l-3 1.5M295 219l-1.5 2 -1.5 2.5 -1 2 -0.5 3M293 218l-1 -4.5M291 216l-2.5 2.5M289 215l-1.5 -3M295 219l-1.5 -1.5 -2.5 -1 -2 -1 -2.5 -0.5M288 211l-1 -3.5M286 210l-2.5 2.5M291 212l-2.5 -1 -3 -1 -3 -0.5M293 207l3 0.5M291 209l2 -1.5 2 -2M290 206l-4.5 -0.5M289 203l1 -3.5M291 212l0 -3 -1 -2.5 -1 -3 -1 -3M293 211l4.5 -0.5M295 209l-2 -4M296 206l4 0M291 212l2 -1.5 2 -2 1.5 -2 1.5 -2.5M295 216l-0.5 2M294 213l1.5 2.5 1.5 2M297 214l3.5 -3M300 215l1.5 3M291 212l3 1.5 2.5 1 3 0 3 0.5M292 215l-2 3.5M293 218l2.5 0.5M291 212l1 3 0.5 3 1.5 2.5M286 213l-1.5 -1.5M289 214l-2.5 -0.5 -2.5 -0.5M287 216l1 4.5M284 218l-4 1M291 212l-2.5 2 -2 2 -2 2.5 -2 2M305 220l-1.5 4M306 222l4 0.5M306 225l0 3.5M305 217l0 3 0.5 2.5 1 2.5 1 2.5M301 221l-3.5 -0.5M303 220l-2.5 1 -2.5 1.5M303 225l0 2M302 223l1 2 1.5 2M301 226l-2.5 2.5M305 217l-1.5 3 -1.5 2.5 -0.5 3 0 3M301 215l-0.5 -3M302 217l-1 -2.5 -2 -1.5M299 217l-1.5 4.5M297 218l-4 -2M305 217l-3 0 -2.5 0 -3 0.5 -2.5 1M304 212l2.5 -0.5M304 215l0.5 -2.5 0 -2.5M302 212l-4.5 1.5M300 210l0 -3.5M305 217l-1.5 -2 -1.5 -2.5 -2 -2 -2.5 -1.5M308 213l3.5 0M306 214l2 -1 2.5 -2M306 211l-5 -0.5M305 208l0.5 -3M305 217l0.5 -2.5 0 -3 -0.5 -3 -1 -3M310 217l2 2.5M307 216l3 1 3 0M310 215l-1.5 -5M311 213l4.5 -2M313 211l-2 -3M305 217l2.5 -0.5 2 -1.5 2 -2 1.5 -2 1 -2.5M307 219l3 3.5M310 220l2 -4M312 221l2.5 2M305 217l2.5 1.5 2 1.5 2.5 0.5 2.5 0.5M298 222l-0.5 -4M296 221l-3 1.5M301 222l-3 0 -2.5 -1 -2.5 -1M300 219l3.5 -2.5M300 216l-2.5 -2M301 222l-1 -2.5 0 -3.5 0.5 -3M303 220l3.5 1.5M305 219l2.5 -3.5M301 222l2 -2 2.5 -1 2.5 -1M304 223l1.5 4M301 222l3.5 1.5 3.5 1M302 225l-1.5 3.5M304 227l3 1.5M301 222l1.5 2.5 1.5 3 1 2.5M299 225l-3.5 0.5M301 222l-2 3.5 -2.5 2.5M306 220l2.5 -2M307 223l-1 -2.5 -1 -3M304 223l-3.5 3M301 222l-3 -3M299 222l-2.5 3M309 225l-2.5 -1.5 -2.5 -1 -2.5 -0.5 -3 -0.5 -2.5 0M310 220l3 0.5M309 222l1.5 -2 1.5 -2.5M308 220l-5 -1M307 217l1 -3.5M305 215l-3 2M309 225l-0.5 -3 -1 -2.5 -1 -2 -1.5 -2 -1.5 -2M313 222l3 1M311 223l2.5 -1.5 3 -1M310 218l0 -3M312 220l-2 -2 -2 -2M315 216l2.5 1M313 217l2 -0.5 2 -1.5M313 215l-2.5 -2.5M309 225l1.5 -2.5 1.5 -2.5 1 -2.5 0.5 -3 0.5 -2.5M314 226l0 3M312 225l1.5 1.5 3 1.5M315 221l2.5 -1M314 224l1 -2.5 0 -3M317 223l4 1M319 222l0.5 -3M309 225l2.5 -0.5 2.5 -0.5 3 -0.5 2.5 -1 2 -1.5M311 226l2.5 3M314 226l1 -3M316 227l3 2M309 225l2.5 0.5 2.5 0.5 2.5 0.5 2.5 0M308 230l-3 -0.5M309 228l-1.5 1.5 -1.5 2.5M313 231l1 2M311 230l2 1 2.5 0.5M311 235l-2 1M312 232l-0.5 3 0 2.5M314 235l3 -1.5M309 225l0.5 2.5 1 2.5 1.5 2.5 1.5 2 2 2M304 228l-2.5 -0.5M307 227l-2.5 1 -2.5 1M306 229l2.5 4.5M304 232l-3.5 2.5M304 234l2.5 2.5M309 225l-2 2 -1.5 2.5 -1 2 -1 2.5 -0.5 3M304 225l-2 -2M306 226l-2.5 -1 -2.5 0M304 227l-0.5 4M302 228l-5 -2M300 229l0 4M309 225l-2.5 0.5 -2.5 1 -2.5 1.5 -2 1.5 -1.5 2M312 234l-4.5 0.5M311 237l0.5 3M312 231l0 3 -1.5 2.5 -1.5 3M310 232l-3 -3.5M307 233l-2.5 2M312 231l-2.5 1 -2.5 0.5 -3 0.5M309 230l0.5 -5M306 229l-3.5 0M312 231l-3 -1.5 -3 -1 -2.5 -1.5M311 228l2.5 -3.5M310 226l-4.5 -1.5M309 224l2.5 -2.5M312 231l-1 -2.5 -1 -2.5 -1 -2.5 -0.5 -2.5M313 228l4.5 -1M314 225l0.5 -4M312 231l1 -3.5 1.5 -3 1 -2.5M315 229l3 3M318 228l2.5 -2.5M312 231l3 -2 3 -1 3.5 -0.5M317 233l-1.5 2.5M315 231l1.5 2 1 2M318 231l3 -2M320 232l1 3M312 231l3 -0.5 2.5 0.5 3 1 2 1.5M314 234l-2.5 3.5M314 237l3 2.5M312 231l1.5 2.5 1 3.5 -0.5 3M311 239l-2 -1.5M314 238l-3 1 -3.5 0M311 237l-1.5 -3M314 238l-3 -1 -2.5 -2M313 235l2 -1.5M314 238l-1.5 -3 -0.5 -3M315 235l3 0M314 238l1 -3 1.5 -3M316 236l2.5 2.5M318 235l1 -2.5M314 238l2 -1.5 2 -1.5 2.5 -1M316 239l-1 4M318 241l3 0M314 238l2 1 2.5 2 1.5 1.5M315 241l-1.5 2.5M314 238l1.5 3 1 3M312 241l-2.5 -1.5M314 238l-1.5 2.5 -2.5 2M311 242l3.5 -2M312 239l-2 -2.5M309 244l2 -2.5 1 -2.5 0.5 -3M312 244l2.5 2M315 244l2 -2M309 244l3 0.5 2.5 0 2.5 0M311 247l-2 2.5M312 249l3.5 -0.5M309 244l1.5 2.5 1.5 2.5 2.5 2M308 246l-4.5 2M306 249l2 3M309 244l-1.5 2.5 -1 2.5 -1.5 3M306 244l-3 -2.5M304 244l-1.5 3.5M309 244l-2.5 0 -3 0 -3 1M308 242l1 -4.5M306 240l-2.5 0M309 244l-1 -2.5 -2 -2 -2 -1.5M315 244l-3 -2M318 242l-3 2 -3 1M314 241l0 -4M318 242l-3.5 -1 -3 -2M317 240l3 -2.5M318 237l-2 -2.5M318 242l-0.5 -2.5 0 -2.5 0.5 -3M320 241l3 1.5M322 239l1.5 -2M318 242l2 -1.5 2 -1.5 2.5 -1M321 243l0 4M318 242l2.5 1.5 3 1.5M318 246l-2.5 1.5M318 242l0 4 0 3.5M319 255l-1 1.5M319 252l0 2.5 1.5 2.5M317 255l-3 1M319 252l-2.5 3 -0.5 3.5M316 253l-3 -1M319 252l-3 1 -2.5 1.5M316 251l-1 -2M319 252l-3 -1 -2.5 0M318 249l0.5 -3M319 252l-1 -3 -2 -2.5M320 249l2.5 -2.5M319 252l1 -3 0 -3.5M321 251l3 0.5M319 252l2.5 -1 2.5 -1.5M322 253l1 3M319 252l2.5 1 3.5 0M327 253l-1.5 3M327 250l0 3 1 3M324 252l-3.5 0M327 250l-3 2 -1.5 3M324 248l-2 -3M327 250l-3 -2 -4 -1M327 246l3 -2M327 250l0 -3.5 -0.5 -3.5M329 249l3.5 -0.5M331 247l-1 -3M327 250l2 -1.5 2 -2 1.5 -2M329 252l1.5 3.5M331 253l3.5 -1.5M327 250l2 2 2.5 1 2.5 1M334 263l-2.5 0.5M335 260l-1 2.5 -1 3M338 263l0.5 2.5M336 262l2 1 2.5 1M337 265l-2.5 3.5M339 267l3 1M333 257l1.5 2.5 1.5 3 1 2 1.5 3 1 2.5M329 259l-2 -2M332 260l-3 -0.5 -2.5 -0.5M331 264l-2 2M330 262l0.5 2.5 1.5 2M328 264l-4.5 -0.5M333 257l-1.5 2.5 -2 2.5 -2 2.5 -2 2M328 256l0.5 -2.5M331 258l-3 -2 -2 -2M327 261l-2.5 1M328 259l-0.5 2.5 -1 2.5M326 260l-4.5 -3M323 260l-1 3.5M333 257l-2 1 -2.5 1 -3 0.5 -2.5 1 -2.5 0.5M331 253l2 -2M331 256l0 -3 0.5 -3M326 256l-1.5 -1M329 254l-2.5 1.5 -2.5 1M326 253l0.5 -5M324 251l-4 2M333 257l-2 -1.5 -2.5 -1 -2.5 -1.5 -2 -2 -2.5 -1.5M333 252l3.5 -1.5M332 255l1.5 -3.5 1.5 -2.5M328 251l-0.5 -2.5M331 252l-2.5 -1 -3 -1M330 249l3.5 -4M330 246l-4 -1.5M333 257l-0.5 -2.5 -1 -2.5 -1 -3 -0.5 -2.5 -0.5 -3M338 254l2 1M334 255l3.5 -1 3.5 -1M335 250l1 -2.5M335 252l-0.5 -2.5 -1 -2.5M339 250l1.5 2.5M337 250l2 0 3 0M338 248l-1.5 -4.5M339 246l4.5 -1M333 257l1.5 -2 1 -2.5 1 -2.5 1 -2.5 1.5 -2 1.5 -2M339 258l0.5 2.5M336 256l3 2 2.5 1.5M339 253l2.5 -1M339 256l0.5 -3 1 -2.5M341 255l4 2.5M344 254l2 -2.5M333 257l3 -0.5 2.5 -1 3 -0.5 2.5 -0.5 2.5 -1.5M337 260l-1.5 3M336 257l1 3.5 1 3M341 256l2 0.5M338 258l2.5 -2 2 -2M341 259l0.5 4.5M343 260l4.5 -1.5M346 261l1 3M333 257l3 0.5 2.5 0.5 2.5 1 2 0.5 2.5 1 2.5 1.5M332 262l0 -3.5M335 263l-3 -1.5 -2.5 -1.5M332 268l-2 0.5M333 265l-0.5 2.5 -0.5 3M328 265l-1 -2.5M330 266l-2 -1 -2.5 -1.5M327 267l-1 4.5M338 261l-3 2 -2.5 1.5 -2.5 1.5 -2.5 1 -3 1M337 257l2.5 -2M336 259l1 -2.5 0.5 -2.5M332 257l-1.5 -2M335 257l-3 0.5 -2.5 0M334 255l3 -3.5M333 252l-3.5 -1.5M338 261l-2 -1.5 -1 -2 -1 -2.5 -1 -2.5 -0.5 -2.5M342 258l2 2M339 259l2.5 -0.5 3 -0.5M339 254l2.5 -2.5M340 256l-0.5 -2 -0.5 -3M344 254l1 1.5M341 254l2.5 0 2.5 -0.5M343 252l-0.5 -3.5M338 261l0.5 -2 1 -2.5 1.5 -2.5 1.5 -2 2 -2M342 265l-2 2M341 262l1 2.5 1 3M346 260l2.5 1M343 262l2.5 -1.5 2.5 -2M346 263l2.5 4.5M349 264l4 -2.5M338 261l2.5 1 3 0 3 1 2.5 1 3 1M336 266l-2.5 -0.5M338 264l-2 2 -2 2M338 266l3.5 4M339 269l-3.5 3M339 271l2.5 3.5M338 261l0 3 0.5 2.5 0 2.5 0.5 2.5 -0.5 2.5M342 260l1 -2M342 263l-0.5 -2.5 -0.5 -3M337 262l-1.5 -2.5M340 261l-3 0.5 -3 1M337 260l-1 -4.5M335 259l-3 1.5M344 265l-2 -2 -2 -1.5 -2.5 -1.5 -2.5 -1.5 -2.5 -1M345 263l4.5 -2M345 260l-3 -3.5M346 257l2.5 -3M344 265l1 -2.5 0 -3 0.5 -2.5 0 -3M348 266l1 2M346 264l2 2 2.5 1.5M348 263l1 -4.5M351 262l3 1.5M353 261l-0.5 -4.5M344 265l2 -0.5 2.5 -1.5 2 -1 2.5 -1.5 2 -1.5M346 270l-2.5 1.5M346 267l0 3 0.5 2.5M348 269l5 -1.5M351 271l-0.5 3.5M344 265l2 2 2.5 2 2.5 1.5 2.5 1.5M342 271l-4 -1M344 268l-2.5 2.5 -1.5 3M347 272l1.5 3M344 271l2.5 1 3 1.5M342 275l-2 1M344 273l-1.5 2.5 -1.5 2M344 276l5 0.5M345 278l-2 5M344 265l0 3 0 2.5 0 2.5 0 3 0.5 2.5 1 2.5M338 266l-2 -2M341 267l-2.5 -1 -3.5 0M339 271l-2 1.5M339 268l0 2.5 0.5 3M337 269l-4.5 -2M334 271l0 4M344 265l-2.5 1.5 -2.5 1.5 -2.5 1 -2 1.5 -2 2M351 277l-0.5 2M349 275l2 1.5 2 2M351 274l2 -4.5M354 274l4 0M356 272l-0.5 -4M346 274l3 0.5 2.5 -0.5 2.5 -0.5 2.5 -1 2 -2M345 280l-3 0.5M346 277l-1.5 2.5 -1 3M346 280l4.5 2M347 283l-2.5 4M346 274l0 3.5 0.5 3 0 3 1 3M341 274l0 -2.5M344 275l-2.5 -1.5 -2.5 -1M341 279l-3 1.5M341 276l-0.5 3 0.5 3M339 278l-4.5 0M337 280l2.5 3.5M346 274l-2.5 1.5 -2.5 1 -2 1.5 -1.5 2 -1 2.5M344 269l0.5 -1.5M344 272l-0.5 -2.5 -0.5 -3M342 270l-3.5 4M339 268l-1 -3.5M346 274l-2 -1.5 -2 -2.5 -3 -1.5 -2.5 -1M351 272l1.5 2M348 272l2.5 0 2.5 -0.5M350 270l-3.5 -2.5M351 268l4 -1.5M346 274l2 -1.5 1.5 -2.5 1.5 -2.5 1 -2.5M348 280l-1.5 -4.5M345 279l-2.5 3M342 280l-2.5 -2.5M351 281l-3 -1 -2.5 -0.5 -3 0 -3 1M351 278l3.5 -3M351 275l-3 -1.5M351 272l2.5 -2.5M351 281l0 -3 0.5 -3 0 -2.5 -1 -2.5M356 281l1.5 3M354 280l2 1.5 2.5 1.5M357 276l2 -2.5M356 279l0.5 -3 0.5 -3M359 277l4 1.5M361 275l-1 -3.5M351 281l2.5 -1.5 2.5 -1 2.5 -1.5 2.5 -1.5 2 -2M353 286l-1.5 1M353 283l0 2.5 0 2.5M355 285l4.5 -2M358 287l0.5 3.5M351 281l2 2 2 2 3 2 2.5 1M346 283l-2 -2M349 283l-3 0 -3 0M348 288l-2 2M347 285l1 2.5 0.5 3M346 287l-5 1M345 290l2.5 3.5M351 281l-2 2 -2 2 -1.5 2.5 -1 2.5 -1 2.5M350 291l-2 2.5M349 288l0.5 3.5 1.5 3M346 288l-3 -2M343 288l-0.5 3.5M349 288l-3 0 -2.5 0.5 -2.5 1.5M348 285l0 -4M347 283l-3 1M349 288l-1 -2.5 -1.5 -2.5 -2 -1.5M351 285l3.5 -1.5M352 283l-3 -3M349 288l1.5 -2.5 1 -3 0.5 -3M352 289l3 2.5M349 288l3.5 1 3 0.5M349 296l-1.5 2M348 293l1 3 1 3M345 295l-3 -1.5M348 293l-3 1.5 -3 2.5M346 290l1 -4M348 293l-1.5 -3 -2.5 -3M350 290l3.5 0M348 293l2.5 -3 1.5 -3M352 293l2 3.5M348 293l4 0 3.5 -0.5M350 301l0.5 3M347 301l3 0.5 2.5 1M350 299l0.5 -4M353 298l3.5 1.5M345 301l2.5 -0.5 2.5 -1 2.5 -1.5 3 -1.5M348 305l-1 3M347 303l1 2.5 1 2.5M352 303l2 0.5M349 304l3 -1 2.5 -1.5M352 305l0.5 5M354 307l3 -2.5M345 301l2 1.5 2 1.5 2.5 1.5 2.5 1 2.5 1M342 306l-3 -0.5M344 304l-1.5 2 -2 2.5M344 306l4.5 2.5M345 309l-4 3M345 311l3.5 2M345 301l-0.5 3 0 2.5 0 2.5 0.5 2.5 0 2.5M340 303l-2.5 -2M343 303l-3.5 0 -2.5 0M341 308l-1.5 1.5M341 305l0.5 3 0.5 2.5M339 307l-4.5 1.5M338 310l1.5 3M345 301l-2.5 2 -1.5 2.5 -2 2 -1.5 2 -1.5 2.5M340 298l1 -2M342 301l-2 -2.5 -1.5 -2.5M337 301l-1.5 0M339 300l-1.5 1.5 -2.5 1.5M337 300l-3 -3.5M334 300l-2 3M345 301l-3 -0.5 -2.5 -0.5 -2.5 0 -3 -0.5 -2.5 0.5M344 296l2.5 -2M343 299l0.5 -3 0.5 -3.5M339 296l-2.5 -1.5M342 297l-3.5 -1 -2.5 0M340 294l2.5 -4M339 292l-4.5 -0.5M345 301l-2 -2 -1.5 -2.5 -1.5 -2.5 -1 -2.5 -1.5 -2.5M345 299l4.5 -2.5M345 296l-3.5 -1.5M345 294l2 -2.5M345 301l0 -2.5 0 -2.5 0 -2.5 -0.5 -2.5M336 307l-4 -3M333 307l-2 3.5M331 308l-2.5 -2M339 306l-3 0.5 -2.5 1 -3 0.5 -2.5 1.5M337 302l3 -1.5M337 304l0.5 -2.5 0.5 -2.5M335 302l-4 1.5M333 300l0.5 -3.5M339 306l-2 -2 -2 -2 -2 -1.5 -2 -2M340 301l4 0.5M338 304l2.5 -3 2 -2M338 301l-5 -1.5M338 298l2.5 -3.5M337 296l-2.5 -2M339 306l-0.5 -2.5 -0.5 -2.5 -0.5 -2.5 -0.5 -3 0 -2.5M343 306l2 2.5M341 305l2.5 0.5 2 1.5M343 303l0.5 -4.5M346 301l3.5 0.5M339 306l2 -1.5 2.5 -1.5 2 -2 2.5 -2M341 306l4 3M344 306l2.5 -3.5M346 305l3 1.5M339 306l2.5 0 2.5 -0.5 2.5 -0.5 2.5 0M341 311l-2.5 1.5M341 308l-0.5 3 0 2.5M343 310l5 -1M346 313l-0.5 3M339 306l2 2.5 2.5 2 2 2 2.5 2M336 310l-3 -0.5M339 309l-3 1 -2.5 1.5M340 313l0 3.5M338 311l2 2.5 2 2M338 314l-4 2.5M338 317l2 2M339 306l-0.5 3 0 2.5 -0.5 2.5 -0.5 2.5 0 2.5M334 309l-2 -2.5M337 308l-3 0.5 -2.5 0.5M335 310l-1 5M333 312l-4 -0.5M339 306l-2 2.5 -2.5 1.5 -2 2 -2 2.5M335 311l-2.5 1.5M335 308l0 2.5 -0.5 2.5M332 308l-3 -2M335 308l-3.5 0.5 -3 1.5M333 306l1 -3M335 308l-1.5 -2.5 -2 -1.5M336 305l1.5 -1M335 308l1 -2.5 0 -3M338 308l3 0.5M335 308l3.5 -0.5 3 -1M338 310l0 3M335 308l3 2 3 1.5M331 316l-3 -3.5M328 316l-2.5 3M334 314l-3 1.5 -3 0.5 -3 0.5M332 311l2.5 -2.5M334 314l-1.5 -2.5 -1 -3.5M337 312l3 1.5M334 314l3 -2 3 -2M337 315l-1 3.5M339 317l2.5 -1M334 314l2.5 1.5 2.5 1 1.5 2M334 318l-3.5 2.5M335 321l1.5 2.5M334 314l0.5 3.5 0 3 0 3.5M328 324l-4 3M327 327l4.5 2M327 330l-0.5 3.5M329 321l-1 3 -0.5 2.5 0 3 0.5 3M324 320l0 -2M326 322l-1.5 -1.5 -2.5 -1M324 323l0 4.5M321 324l-3.5 1M329 321l-2.5 0.5 -2.5 1.5 -2.5 1 -2 2M327 316l1.5 -1.5M327 319l0 -2.5 -0.5 -2.5M322 318l-2 -2M325 317l-2.5 1 -2.5 1M322 316l-1.5 -3.5M329 321l-2 -2 -2 -2 -3 -1 -3 -1M330 318l4 -2M331 315l-2.5 -2.5M329 321l1.5 -3 0.5 -3 0 -3.5M332 321l4 1.5M335 319l-0.5 -2.5M329 321l3 -0.5 3 -1 2.5 -2M331 323l0.5 5.5M334 325l2.5 -3.5M336 326l2 3.5M329 321l2 2.5 2.5 1.5 3 1 2.5 0.5M325 323l4 0.5M327 321l0.5 -3.5M323 324l2 -1.5 2.5 -1.5 2 -1M326 325l0 4.5M328 327l4 -2M323 324l2.5 1.5 3 1.5 3 1M322 327l-3.5 2M321 330l2 2.5M323 324l-1 3 -1 3 0 3M320 325l-3.5 -1.5M317 326l-1 3M323 324l-3 1 -3 1 -2.5 1M320 323l0 -4.5M318 322l-2.5 1.5M323 324l-2.5 -1.5 -2.5 -1 -3 -0.5M323 321l3.5 -3M323 317l-2.5 -2M323 324l0 -3.5 -0.5 -3 0 -3M314 329l-3.5 2M313 332l3 2M315 326l-1 3 -1 3 -0.5 3M313 327l-3.5 -1M310 327l-0.5 3M315 326l-2.5 0.5 -2.5 1 -2 1M312 325l-2 -3M315 326l-3 -1 -4 -0.5M314 324l1.5 -3.5M313 322l-3 0M315 326l-0.5 -2 -1.5 -2.5 -2 -1.5M317 323l2.5 -1.5M315 326l1.5 -3 1 -3.5M319 325l2.5 1.5M315 326l3.5 -1 3 -2M318 328l1 3M315 326l3 2 3.5 1M316 329l-0.5 4M317 332l4 -0.5M315 326l1 3 1.5 3 1.5 2.5M318 312l4.5 -1.5M319 309l-2.5 -3M320 307l3.5 -0.5M317 315l1 -3 1 -2.5 0.5 -2.5 1.5 -2.5M321 315l1.5 3.5M324 315l3 -1M317 315l3.5 -0.5 3.5 0.5 3 1M319 317l-3 4M320 320l3.5 2M317 315l2 2.5 1 3 1 3M315 317l-4 -2.5M312 318l-1.5 2.5M317 315l-2 1.5 -2.5 1.5 -3 1M315 313l0.5 -4M313 311l-3 -1M317 315l-2 -2 -1.5 -2 -2 -2M327 317l1.5 2M324 317l3 0 3 -0.5M324 319l0 3.5M324 317l0.5 2.5 2 2M321 318l-2 -0.5M324 317l-2.5 1 -2 1.5M322 315l0 -3M324 317l-2 -2.5 -2 -1.5M325 314l2.5 -1.5M324 317l1 -3 0.5 -3M329 314l0 -2M331 316l-2 -2 -2.5 -1.5M331 313l2.5 -2.5M331 316l0 -3 -0.5 -3.5M333 313l4 0M331 316l2 -2.5 1.5 -3.5M334 317l3 1M331 316l3 0.5 3.5 -0.5M333 318l1.5 2M331 316l2 2 2.5 0.5M331 320l-2 2M331 316l-0.5 3.5 1 3M329 319l-2.5 1M331 316l-2 2.5 -1 3M327 315l-2 -1.5M331 316l-3.5 -0.5 -3.5 0M334 308l0.5 -3.5M332 306l-2.5 1M335 311l-1.5 -3 -1.5 -2 -2.5 -1.5M337 308l3.5 0M335 311l2 -3 1.5 -3M338 311l2 2.5M335 311l3 0 3 -1M335 313l-1.5 4M336 316l3.5 0M335 311l0 2.5 1.5 2 2 2M332 313l-2.5 1M335 311l-2.5 2 -1 3M332 310l-2.5 -2M329 311l0 2.5M335 311l-3 -0.5 -2.5 0 -2.5 1.5" stroke="#5e3a86" stroke-opacity="0.5" stroke-width="1.2"/>
</g>
<path fill="#623784" d="M80.0,447.0 C81.1,446.4 84.0,445.0 86.7,443.3 C89.4,441.6 93.2,438.7 96.0,437.0 C98.8,435.3 101.3,435.3 103.3,433.3 C105.3,431.3 106.9,427.2 108.0,425.0 C109.1,422.8 108.3,421.8 110.0,420.0 C111.7,418.2 115.8,415.7 118.0,414.0 C120.2,412.3 121.8,412.3 123.3,410.0 C124.8,407.7 125.4,403.0 126.7,400.0 C128.0,397.0 129.3,394.3 131.0,392.0 C132.7,389.7 132.4,387.4 136.7,386.0 C141.0,384.6 156.5,384.5 156.7,383.3 C156.9,382.1 140.9,381.6 138.0,379.0 C135.1,376.4 138.6,371.8 139.0,368.0 C139.4,364.2 139.9,359.2 140.5,356.0 C141.1,352.8 141.2,350.6 142.5,349.0 C143.8,347.4 145.6,346.8 148.0,346.5 C150.4,346.2 154.2,346.8 157.0,347.5 C159.8,348.2 162.8,349.2 165.0,350.5 C167.2,351.8 168.5,351.6 170.0,355.0 C171.5,358.4 173.1,370.2 174.0,371.0 C174.9,371.8 174.3,362.2 175.5,360.0 C176.7,357.8 179.1,358.1 181.0,357.5 C182.9,356.9 183.5,357.2 186.7,356.5 C189.9,355.8 196.7,355.9 200.0,353.3 C203.3,350.7 204.0,342.7 206.7,341.0 C209.4,339.3 213.8,342.4 216.0,343.3 C218.2,344.2 218.8,346.7 220.0,346.5 C221.2,346.3 220.8,343.8 223.0,342.0 C225.2,340.2 229.1,337.5 233.0,336.0 C236.9,334.5 242.2,334.0 246.7,333.0 C251.2,332.0 255.6,330.8 260.0,330.0 C264.4,329.2 268.6,328.7 273.3,328.0 C278.0,327.3 288.2,327.1 288.3,325.8 C288.4,324.6 278.1,322.3 274.0,320.5 C269.9,318.7 266.8,317.2 264.0,315.0 C261.2,312.8 258.8,309.5 257.0,307.0 C255.2,304.5 254.3,302.7 253.3,300.0 C252.3,297.3 251.4,294.3 251.0,291.0 C250.6,287.7 250.5,282.9 250.9,280.0 C251.3,277.1 252.4,275.7 253.4,273.7 C254.4,271.7 255.5,269.8 256.7,267.9 C257.9,266.0 259.3,264.2 260.8,262.5 C262.3,260.8 263.9,259.2 265.6,257.8 C267.3,256.4 269.1,255.0 271.0,253.8 C272.9,252.6 274.9,251.4 276.9,250.5 C278.9,249.6 281.7,249.2 283.2,248.1 C284.7,247.0 285.6,245.7 286.0,244.0 C286.4,242.3 285.0,240.7 285.5,238.0 C286.0,235.3 287.1,230.7 289.0,228.0 C290.9,225.3 295.3,224.7 297.0,222.0 C298.7,219.3 298.5,212.0 299.0,212.0 C299.5,212.0 298.8,219.3 300.0,222.0 C301.2,224.7 304.5,225.3 306.0,228.0 C307.5,230.7 308.8,235.3 309.2,238.0 C309.6,240.7 308.4,242.4 308.5,244.0 C308.6,245.6 308.6,246.7 309.9,247.6 C311.2,248.5 314.2,248.8 316.3,249.7 C318.4,250.5 320.4,251.6 322.3,252.7 C324.2,253.8 326.1,255.1 327.9,256.5 C329.6,257.9 331.2,259.5 332.8,261.1 C334.4,262.7 335.9,264.4 337.2,266.2 C338.5,268.0 339.6,270.0 340.7,272.0 C341.8,274.0 342.7,276.0 343.5,278.1 C344.3,280.2 344.9,282.4 345.4,284.6 C345.9,286.8 346.3,289.1 346.4,291.3 C346.5,293.5 347.6,295.7 346.0,298.0 C344.4,300.3 342.5,300.9 337.0,305.0 C331.5,309.1 312.9,321.2 313.2,322.7 C313.5,324.2 334.7,315.4 339.0,314.0 L394,305 L394,447 Z"/>
<g clip-path="url(#fc)" fill="none" stroke-linecap="round" stroke-linejoin="round" filter="url(#sb)"><path d="M81 448l2 -4.5M83 451l-1.5 2M81 448l1.5 2.5 1.5 3M77 449l-2 -3M81 448l-3.5 0.5 -3.5 0M93 445l-1.5 3.5M94 447l4 0M93 442l0.5 3 1 2 1.5 2M89 443l-2 -1.5M93 442l-3.5 0.5 -3 1M94 439l3 -1M93 442l1 -3 0.5 -3.5M106 434l2 0.5M103 435l2.5 -1 2.5 -1.5M103 438l-1.5 3.5M103 435l0 3.5 0.5 3M101 434l-1 -3M103 435l-2.5 -1.5 -2.5 -1M111 423l0.5 5M110 426l-2.5 0M111 423l-1.5 3 -1 2M111 423l-5 -0.5M111 423l-1.5 -3M111 423l2.5 -2.5M111 423l4.5 1.5M119 415l-3.5 3M119 415l-0.5 -3.5M119 415l3.5 1.5M127 405l-4 -2.5M127 405l1 -4M127 405l4 2M127 405l-2 3M133 394l-2 -4M133 394l3.5 -3.5M133 394l3 2M132 396l-2 0.5M133 394l-1 1.5 -1 2.5M133 394l-3.5 0.5M139 385l1 -3.5M141 387l-2 -2.5 -2 -2M143 385l2.5 -0.5M141 387l2 -2.5 1.5 -2.5M144 388l1.5 2M141 387l3.5 0.5 3 1M142 390l-2 2.5M141 387l0.5 3 1 2.5M139 388l-3.5 0M141 387l-2 1.5 -2.5 2M154 386l2.5 -3M154 386l3.5 2M154 386l-2 3M154 386l-2.5 -3M145 379l0.5 -3M147 381l-2.5 -2 -1.5 -2M148 378l2.5 -0.5M147 381l1 -3 1.5 -2.5M147 381l4.5 1M147 384l-2.5 0.5M147 381l0.5 2.5 -0.5 3M144 382l-2 -2.5M147 381l-3 1 -3 0M139 378l-2.5 0.5M140 375l-0.5 3 -1 3M138 375l-1.5 -2.5M140 375l-2.5 -0.5 -2.5 -0.5M140 372l3 -2M140 375l0 -3 0 -3.5M144 375l2 3M140 375l4 0 3.5 0.5M141 362l-4 0.5M141 362l-0.5 -3.5M141 362l2.5 -0.5M141 362l-0.5 4.5M144 350l-0.5 -4M144 350l2.5 -2.5M144 350l3.5 1M144 350l0.5 3M144 350l-3 2M144 350l-3.5 -1M152 349l-2.5 -0.5M154 348l-2 1 -2.5 0.5M152 346l0 -2.5M154 348l-2 -2 -2.5 -1.5M156 345l4 0M154 348l2 -3 1.5 -3.5M157 349l1.5 1.5M154 348l3.5 0.5 2.5 1M155 351l-2.5 1.5M154 348l0.5 3 0.5 3M165 354l4 -2M167 355l0.5 3.5M165 354l2 1.5 3 1.5M164 356l-2 2M165 354l-1 2.5 -0.5 2.5M162 355l-2 -1.5M165 354l-3 0.5 -2 1M162 353l-1 -3.5M165 354l-3 -1.5 -2.5 -1.5M164 351l2.5 -1.5M165 354l-0.5 -3 -1 -3M171 367l-2 1.5M169 364l2 2.5 0.5 3M168 367l-4 -1M169 364l-1.5 3 -2.5 2.5M166 363l-1.5 -2.5M169 364l-3 -1 -3 -1M168 362l1 -4M167 359l-2.5 -1.5M169 364l-1 -2.5 -1 -2 -1 -2.5M171 361l2.5 0.5M169 364l2 -3 1.5 -2M172 364l2 2M169 364l3.5 -0.5 2.5 1M174 366l-1 -2.5M177 367l-3.5 -1 -2.5 -0.5M177 364l2.5 -0.5M177 367l0.5 -3 1 -2.5M179 369l-1.5 3M177 367l1.5 2 2 3M181 361l-3 1M182 358l-1.5 3.5 -1.5 2.5M179 359l-1.5 -2.5M177 359l-2 2.5M182 358l-2.5 1 -2.5 0 -2.5 0M179 356l1.5 -3M182 358l-3 -2 -2.5 -2.5M183 355l3 0M182 358l1 -3 1 -3M185 358l1.5 2.5M182 358l2.5 0 3 0M184 361l-0.5 3M182 358l2.5 3 1.5 3M191 356l-2 -0.5M194 355l-2.5 1 -2.5 1.5M195 353l3 -2.5M196 350l-3 -2M194 355l1.5 -2.5 0.5 -2.5 -0.5 -2.5M197 357l0 3M194 355l2.5 2.5 3 1M206 348l0 -4M206 348l3 1.5M206 348l-3.5 2.5M215 345l3 1.5M212 345l3 0 2.5 -1.5M211 348l-2 1.5M212 345l-1 3 0.5 2.5M211 343l0.5 -2.5M212 345l-1.5 -2 -2 -1.5M226 347l-0.5 3M224 344l2 2.5 2.5 3M222 347l-2.5 -1M224 344l-2 2.5 -2.5 2.5M221 344l-2 -2.5M224 344l-3 0 -3 -0.5M223 341l3 -2M224 344l-0.5 -3 -1 -3M226 341l2.5 -0.5M224 344l2 -2.5 1.5 -3M227 345l0.5 3M224 344l3 1 3 1M234 337l3.5 -0.5M234 337l0.5 3.5M234 337l-4 1M234 337l0 -3.5" stroke="#3f7a78" stroke-opacity="0.45" stroke-width="1.1"/></g>
<circle cx="297.4" cy="234" r="12" fill="#623784"/>
<ellipse cx="272.5" cy="159.5" rx="5.2" ry="6" fill="#623784"/>
<g fill="#623784">
<circle cx="121.7" cy="326" r="1.6"/>
<circle cx="149.3" cy="327.3" r="1.6"/>
<circle cx="123.3" cy="345" r="1.5"/>
<circle cx="74.2" cy="142.9" r="1.7"/>
<circle cx="120.3" cy="149.2" r="1.9"/>
<circle cx="158.5" cy="136.2" r="1.6"/>
<circle cx="182.6" cy="116.6" r="1.4"/>
<circle cx="252.1" cy="109.9" r="1.8"/>
<circle cx="286.4" cy="184.5" r="1.8"/>
<circle cx="324.2" cy="185.7" r="1.8"/>
<circle cx="298.5" cy="209.9" r="1.8"/>
<circle cx="237" cy="82.6" r="1.2"/>
</g>
</svg>
</div>
<div id="dlg">
<div style="position:absolute;left:0.00px;top:0.00px;width:245.00px;height:22.00px;background:#2d2d32;"></div>
<div style="position:absolute;left:0.00px;top:21.50px;width:245.00px;height:1.00px;background:#1d1d20;"></div>
<div class="t" style="left:91.00px;top:6.95px;font-size:8.2px;color:#f5f5f5;font-weight:bold;letter-spacing:-0.6px;word-spacing:1.6px;-webkit-text-stroke:0.2px #f5f5f5">Mandelbrot Fractal</div>
<div style="position:absolute;left:226.80px;top:4.30px;width:14.00px;height:14.00px;background:#3b3b40;border-radius:50%"></div>
<svg style="position:absolute;left:228.79999999999995px;top:6.300000000000001px" width="10" height="10" viewBox="0 0 10 10"><path d="M2.9,2.9 L7.1,7.1 M7.1,2.9 L2.9,7.1" stroke="#fff" stroke-width="1.35" stroke-linecap="round"/></svg>
<div class="lbl" style="top:27.71px;font-size:9.0px;letter-spacing:-0.3px">Factor</div>
<div class="lbl" style="top:72.21px;font-size:9.0px;letter-spacing:0.05px">Quality</div>
<div class="lbl" style="top:115.71px;font-size:9.0px;letter-spacing:0.25px">Zoom</div>
<div class="lbl" style="top:159.71px;font-size:9.0px;letter-spacing:0px">Angle</div>
<div style="position:absolute;left:11.00px;top:50.50px;width:129.70px;height:3.00px;background:#47474b;border-radius:1.5px"></div>
<div style="position:absolute;left:5.50px;top:45.50px;width:13.00px;height:13.00px;background:#d9d9d9;border-radius:50%"></div>
<div style="position:absolute;left:11.00px;top:94.80px;width:129.70px;height:3.00px;background:#47474b;border-radius:1.5px"></div>
<div style="position:absolute;left:11.00px;top:94.80px;width:33.00px;height:3.00px;background:#3584e4;border-radius:1.5px"></div>
<div style="position:absolute;left:37.50px;top:89.80px;width:13.00px;height:13.00px;background:#d9d9d9;border-radius:50%"></div>
<div style="position:absolute;left:11.00px;top:138.70px;width:129.70px;height:3.00px;background:#47474b;border-radius:1.5px"></div>
<div style="position:absolute;left:11.00px;top:138.70px;width:13.50px;height:3.00px;background:#3584e4;border-radius:1.5px"></div>
<div style="position:absolute;left:18.00px;top:133.70px;width:13.00px;height:13.00px;background:#d9d9d9;border-radius:50%"></div>
<div style="position:absolute;left:152.20px;top:42.00px;width:64.20px;height:20.60px;background:#37373b;border-radius:5px"></div>
<div style="position:absolute;left:176.20px;top:42.00px;width:1.00px;height:20.60px;background:#2b2b2f"></div>
<div style="position:absolute;left:195.80px;top:42.00px;width:1.00px;height:20.60px;background:#2b2b2f"></div>
<div class="t" style="left:156.20px;top:47.62px;font-size:7.9px;color:#e0e0e0;font-weight:normal;letter-spacing:-0.25px;">1</div>
<div style="position:absolute;left:183.10px;top:51.92px;width:7.20px;height:1.15px;background:#6a6a6e;border-radius:0.5px"></div>
<div style="position:absolute;left:203.10px;top:51.92px;width:7.00px;height:1.15px;background:#fff;border-radius:0.5px"></div>
<div style="position:absolute;left:206.02px;top:49.00px;width:1.15px;height:7.00px;background:#fff;border-radius:0.5px"></div>
<div style="position:absolute;left:220.50px;top:42.00px;width:20.50px;height:20.60px;background:#37373b;border-radius:5px"></div>
<svg style="position:absolute;left:225.00px;top:46.20px" width="12" height="12" viewBox="0 0 12 12"><path d="M8.3,1.8 L3.5,6 L8.3,10.2" fill="none" stroke="#fff" stroke-width="1.5" stroke-linecap="round" stroke-linejoin="round"/></svg>
<div style="position:absolute;left:152.20px;top:86.00px;width:64.20px;height:20.60px;background:#37373b;border-radius:5px"></div>
<div style="position:absolute;left:176.20px;top:86.00px;width:1.00px;height:20.60px;background:#2b2b2f"></div>
<div style="position:absolute;left:195.80px;top:86.00px;width:1.00px;height:20.60px;background:#2b2b2f"></div>
<div class="t" style="left:156.20px;top:91.62px;font-size:7.9px;color:#e0e0e0;font-weight:normal;letter-spacing:-0.25px;">2</div>
<div style="position:absolute;left:183.10px;top:95.92px;width:7.20px;height:1.15px;background:#fff;border-radius:0.5px"></div>
<div style="position:absolute;left:203.10px;top:95.92px;width:7.00px;height:1.15px;background:#fff;border-radius:0.5px"></div>
<div style="position:absolute;left:206.02px;top:93.00px;width:1.15px;height:7.00px;background:#fff;border-radius:0.5px"></div>
<div style="position:absolute;left:220.50px;top:86.00px;width:20.50px;height:20.60px;background:#37373b;border-radius:5px"></div>
<svg style="position:absolute;left:225.00px;top:90.20px" width="12" height="12" viewBox="0 0 12 12"><path d="M8.3,1.8 L3.5,6 L8.3,10.2" fill="none" stroke="#fff" stroke-width="1.5" stroke-linecap="round" stroke-linejoin="round"/></svg>
<div style="position:absolute;left:152.20px;top:130.00px;width:64.20px;height:20.60px;background:#37373b;border-radius:5px"></div>
<div style="position:absolute;left:176.20px;top:130.00px;width:1.00px;height:20.60px;background:#2b2b2f"></div>
<div style="position:absolute;left:195.80px;top:130.00px;width:1.00px;height:20.60px;background:#2b2b2f"></div>
<div class="t" style="left:156.20px;top:135.62px;font-size:7.9px;color:#e0e0e0;font-weight:normal;letter-spacing:-0.25px;">10.00</div>
<div style="position:absolute;left:183.10px;top:139.93px;width:7.20px;height:1.15px;background:#fff;border-radius:0.5px"></div>
<div style="position:absolute;left:203.10px;top:139.93px;width:7.00px;height:1.15px;background:#fff;border-radius:0.5px"></div>
<div style="position:absolute;left:206.02px;top:137.00px;width:1.15px;height:7.00px;background:#fff;border-radius:0.5px"></div>
<div style="position:absolute;left:220.50px;top:130.00px;width:20.50px;height:20.60px;background:#37373b;border-radius:5px"></div>
<svg style="position:absolute;left:225.00px;top:134.20px" width="12" height="12" viewBox="0 0 12 12"><path d="M8.3,1.8 L3.5,6 L8.3,10.2" fill="none" stroke="#fff" stroke-width="1.5" stroke-linecap="round" stroke-linejoin="round"/></svg>
<div style="position:absolute;left:143.60px;top:174.40px;width:72.80px;height:20.60px;background:#37373b;border-radius:5px"></div>
<div style="position:absolute;left:176.20px;top:174.40px;width:1.00px;height:20.60px;background:#2b2b2f"></div>
<div style="position:absolute;left:195.80px;top:174.40px;width:1.00px;height:20.60px;background:#2b2b2f"></div>
<div class="t" style="left:147.60px;top:180.02px;font-size:7.9px;color:#e0e0e0;font-weight:normal;letter-spacing:-0.25px;">0.00</div>
<div style="position:absolute;left:183.10px;top:184.33px;width:7.20px;height:1.15px;background:#fff;border-radius:0.5px"></div>
<div style="position:absolute;left:203.10px;top:184.33px;width:7.00px;height:1.15px;background:#fff;border-radius:0.5px"></div>
<div style="position:absolute;left:206.02px;top:181.40px;width:1.15px;height:7.00px;background:#fff;border-radius:0.5px"></div>
<div style="position:absolute;left:220.50px;top:174.40px;width:20.50px;height:20.60px;background:#37373b;border-radius:5px"></div>
<svg style="position:absolute;left:225.00px;top:178.60px" width="12" height="12" viewBox="0 0 12 12"><path d="M8.3,1.8 L3.5,6 L8.3,10.2" fill="none" stroke="#fff" stroke-width="1.5" stroke-linecap="round" stroke-linejoin="round"/></svg>
<svg style="position:absolute;left:54px;top:171.8px" width="34" height="34" viewBox="-17 -17 34 34"><circle cx="0" cy="0" r="14.6" fill="none" stroke="#d0d0d0" stroke-width="1"/><line x1="0" y1="0" x2="14.6" y2="0" stroke="#e0e0e0" stroke-width="1"/><circle cx="0" cy="0" r="1.8" fill="#fff"/></svg>
<div class="lbl" style="top:213.71px;font-size:9.0px;letter-spacing:-0.25px">Color Scheme Source</div>
<div style="position:absolute;left:3.70px;top:228.00px;width:237.30px;height:20.50px;background:#38383c;border-radius:5px"></div>
<div class="t" style="left:11.20px;top:233.06px;font-size:8.3px;color:#ececec;font-weight:bold;letter-spacing:-0.6px;">Preset Gradient</div>
<svg style="position:absolute;left:224.20px;top:232.40px" width="12" height="12" viewBox="0 0 12 12"><path d="M2.9,4.5 L6,7.3 L9.1,4.5" fill="none" stroke="#fff" stroke-width="1.45" stroke-linecap="round" stroke-linejoin="round"/></svg>
<div class="lbl" style="top:258.21px;font-size:9.0px;letter-spacing:-0.27px">Color Scheme</div>
<div style="position:absolute;left:3.70px;top:272.20px;width:237.30px;height:20.30px;background:#38383c;border-radius:5px"></div>
<div class="t" style="left:11.20px;top:276.76px;font-size:8.3px;color:#ececec;font-weight:bold;letter-spacing:-0.6px;">Electric</div>
<svg style="position:absolute;left:224.20px;top:276.50px" width="12" height="12" viewBox="0 0 12 12"><path d="M2.9,4.5 L6,7.3 L9.1,4.5" fill="none" stroke="#fff" stroke-width="1.45" stroke-linecap="round" stroke-linejoin="round"/></svg>
<div class="lbl" style="top:301.71px;font-size:9.0px;letter-spacing:-0.22px">Random Color Scheme Seed</div>
<div style="position:absolute;left:4.00px;top:316.30px;width:53.70px;height:20.20px;background:#38383c;border-radius:5px"></div>
<div class="t" style="left:30.80px;top:321.16px;font-size:8.3px;color:#ececec;font-weight:bold;letter-spacing:-0.9px;transform:translateX(-50%)">Reseed</div>
<div style="position:absolute;left:61.60px;top:316.30px;width:179.40px;height:20.20px;background:#37373b;border-radius:5px"></div>
<div style="position:absolute;left:200.00px;top:316.30px;width:1.00px;height:20.20px;background:#2b2b2f"></div>
<div style="position:absolute;left:221.30px;top:316.30px;width:1.00px;height:20.20px;background:#2b2b2f"></div>
<div class="t" style="left:65.00px;top:321.16px;font-size:8.3px;color:#e0e0e0;font-weight:normal;letter-spacing:0px;">0</div>
<div style="position:absolute;left:207.80px;top:325.82px;width:7.20px;height:1.15px;background:#6a6a6e;border-radius:0.5px"></div>
<div style="position:absolute;left:228.10px;top:325.82px;width:7.00px;height:1.15px;background:#fff;border-radius:0.5px"></div>
<div style="position:absolute;left:231.02px;top:322.90px;width:1.15px;height:7.00px;background:#fff;border-radius:0.5px"></div>
<div style="position:absolute;left:6.20px;top:346.90px;width:11.60px;height:11.40px;border:1px solid #4a4a4e;border-radius:3px"></div>
<div class="t" style="left:20.80px;top:347.27px;font-size:8.5px;color:#dadada;font-weight:normal;letter-spacing:-0.8px;">Reverse Color Scheme</div>
<div style="position:absolute;left:6.20px;top:370.90px;width:11.60px;height:11.40px;border:1px solid #4a4a4e;border-radius:3px"></div>
<div class="t" style="left:20.80px;top:371.77px;font-size:8.5px;color:#dadada;font-weight:normal;letter-spacing:-0.45px;">Invert Colors</div>
<div class="lbl" style="top:394.91px;font-size:9.0px;letter-spacing:-0.2px">Some Cairo Color</div>
<div style="position:absolute;left:4.00px;top:409.00px;width:236.60px;height:20.50px;background:#38383c;border-radius:5px"></div>
<div style="position:absolute;left:7.00px;top:412.00px;width:231.00px;height:14.50px;background:#65388a;border-radius:3px"></div>
<div class="lbl" style="top:438.71px;font-size:9.0px;letter-spacing:-0.25px">Some Color Bgra</div>
<div style="position:absolute;left:4.00px;top:453.30px;width:237.00px;height:20.20px;background:#232327;border-radius:5px;box-shadow:inset 0 0 0 1.6px #5878b0"></div>
<div style="position:absolute;left:7.00px;top:456.00px;width:231.00px;height:15.20px;background:#26a269;border-radius:3px"></div>
<div style="position:absolute;left:164.20px;top:481.20px;width:31.00px;height:20.70px;background:#3584e4;border-radius:5px"></div>
<div class="t" style="left:179.70px;top:486.56px;font-size:8.3px;color:#fff;font-weight:bold;letter-spacing:-0.3px;transform:translateX(-50%);-webkit-text-stroke:0.2px #fff">OK</div>
<div style="position:absolute;left:199.00px;top:481.20px;width:41.90px;height:20.70px;background:#37373b;border-radius:5px"></div>
<div class="t" style="left:219.90px;top:486.56px;font-size:8.3px;color:#f0f0f0;font-weight:bold;letter-spacing:-0.55px;transform:translateX(-50%);-webkit-text-stroke:0.2px #f0f0f0">Cancel</div>
<div style="position:absolute;left:0;top:0;right:0;bottom:0;border-radius:10px;box-shadow:inset 0 0 0 1px #2e2e33"></div>
</div>
</div></body></html>
